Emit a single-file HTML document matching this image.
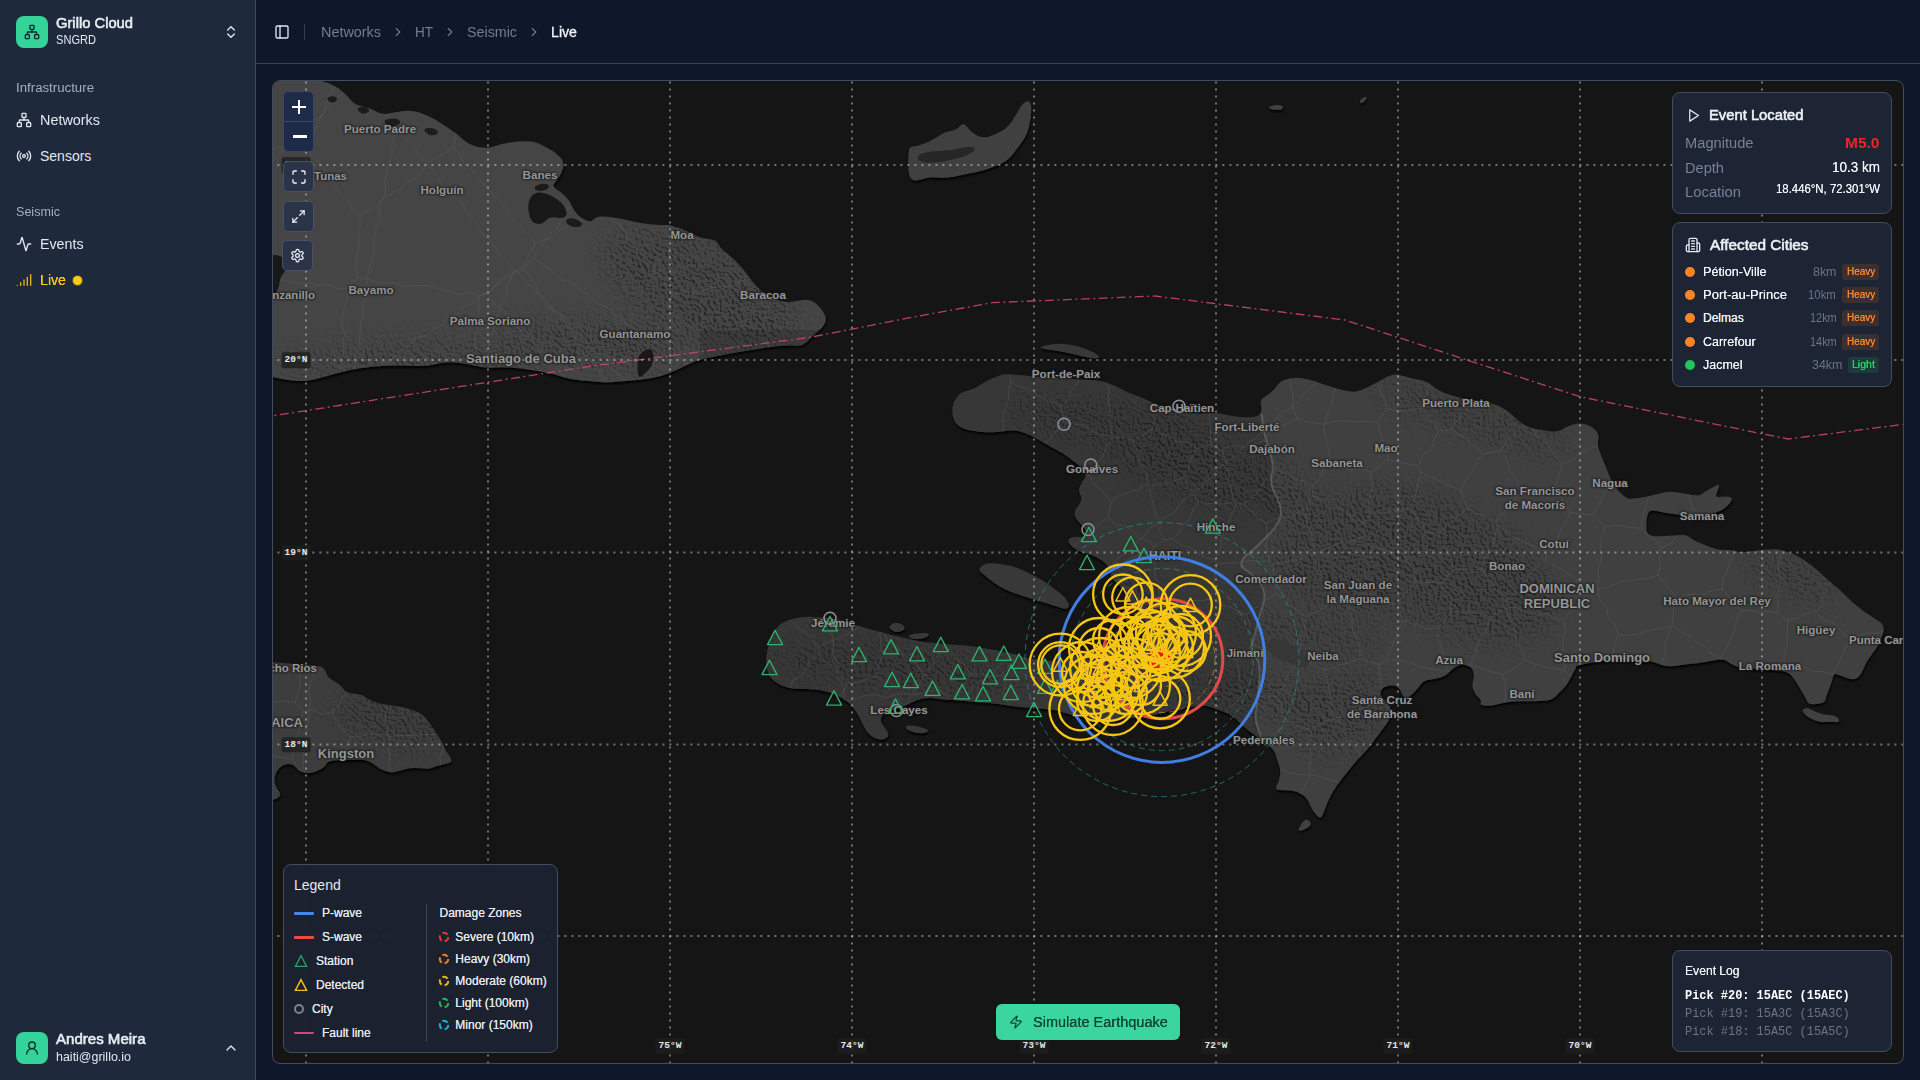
<!DOCTYPE html>
<html><head><meta charset="utf-8"><title>Live</title>
<style>
*{box-sizing:border-box;margin:0;padding:0}
html,body{width:1920px;height:1080px;overflow:hidden;background:#0f172a;font-family:"Liberation Sans",sans-serif;color:#e2e8f0}
#sb{position:absolute;left:0;top:0;width:256px;height:1080px;background:#1e293b;border-right:1px solid #3c495e}
#hd{position:absolute;left:256px;top:0;width:1664px;height:64px;border-bottom:1px solid #36435a;background:#0f172a}
.abs{position:absolute}
.t{position:absolute;white-space:nowrap;line-height:1}
#map{position:absolute;left:272px;top:80px;width:1632px;height:984px;border:1px solid #404c60;border-radius:8px;overflow:hidden;background:#151515}
#ov{position:absolute;left:-273px;top:-81px;width:1920px;height:1080px}
.panel{position:absolute;background:rgba(29,37,53,.985);border:1px solid #414d61;border-radius:8px}
.ctl{position:absolute;background:#2a3347;border:1px solid #465269;border-radius:5px}
.ml{position:absolute;white-space:nowrap;line-height:1;color:#969696;font-size:11.5px;font-weight:700;transform:translate(-50%,-50%);text-shadow:0 0 2px #1c1c1c,0 0 2px #1c1c1c,0 0 3px #1c1c1c}
.gl{position:absolute;white-space:nowrap;line-height:1;font-family:"Liberation Mono",monospace;font-weight:700;font-size:9.5px;color:#e8e8e8;background:rgba(30,30,30,.82);padding:3px 3px 3px 3px;border-radius:2px;transform:translate(-50%,-50%)}
</style></head><body>
<div id="sb">
<div class="abs" style="left:16px;top:16px;width:32px;height:32px;border-radius:8px;background:#34d399"></div>
<svg class="abs" style="left:24px;top:24px" width="16" height="16" viewBox="0 0 24 24" fill="none" stroke="#0f2a2a" stroke-width="2" stroke-linecap="round" stroke-linejoin="round" ><rect x="16" y="16" width="6" height="6" rx="1"/><rect x="2" y="16" width="6" height="6" rx="1"/><rect x="9" y="2" width="6" height="6" rx="1"/><path d="M5 16v-3a1 1 0 0 1 1-1h12a1 1 0 0 1 1 1v3"/><path d="M12 12V8"/></svg>
<div class="t" style="left:56.0px;top:16.0px;font-size:14px;font-weight:400;color:#e8edf4;transform:scaleX(1.0528);transform-origin:0 50%;-webkit-text-stroke:.55px currentColor;">Grillo Cloud</div>
<div class="t" style="left:56.0px;top:34.0px;font-size:12px;font-weight:400;color:#e2e8f0;transform:scaleX(0.9230);transform-origin:0 50%;">SNGRD</div>
<svg class="abs" style="left:223px;top:24px" width="16" height="16" viewBox="0 0 24 24" fill="none" stroke="#e2e8f0" stroke-width="2" stroke-linecap="round" stroke-linejoin="round" ><path d="m7 15 5 5 5-5"/><path d="m7 9 5-5 5 5"/></svg>
<div class="t" style="left:16.0px;top:82.0px;font-size:12px;font-weight:400;color:#a3aebf;transform:scaleX(1.1034);transform-origin:0 50%;">Infrastructure</div>
<svg class="abs" style="left:16px;top:112px" width="16" height="16" viewBox="0 0 24 24" fill="none" stroke="#e2e8f0" stroke-width="2" stroke-linecap="round" stroke-linejoin="round" ><rect x="16" y="16" width="6" height="6" rx="1"/><rect x="2" y="16" width="6" height="6" rx="1"/><rect x="9" y="2" width="6" height="6" rx="1"/><path d="M5 16v-3a1 1 0 0 1 1-1h12a1 1 0 0 1 1 1v3"/><path d="M12 12V8"/></svg>
<div class="t" style="left:40.0px;top:113.0px;font-size:14px;font-weight:400;color:#e2e8f0;transform:scaleX(1.0284);transform-origin:0 50%;">Networks</div>
<svg class="abs" style="left:16px;top:148px" width="16" height="16" viewBox="0 0 24 24" fill="none" stroke="#e2e8f0" stroke-width="2" stroke-linecap="round" stroke-linejoin="round" ><path d="M4.9 19.1C1 15.2 1 8.8 4.9 4.9"/><path d="M7.8 16.2c-2.3-2.3-2.3-6.1 0-8.5"/><circle cx="12" cy="12" r="2"/><path d="M16.2 7.8c2.3 2.3 2.3 6.1 0 8.5"/><path d="M19.1 4.9C23 8.8 23 15.1 19.1 19"/></svg>
<div class="t" style="left:40.0px;top:149.0px;font-size:14px;font-weight:400;color:#e2e8f0;">Sensors</div>
<div class="t" style="left:16.0px;top:206.0px;font-size:12px;font-weight:400;color:#a3aebf;transform:scaleX(1.0475);transform-origin:0 50%;">Seismic</div>
<svg class="abs" style="left:16px;top:236px" width="16" height="16" viewBox="0 0 24 24" fill="none" stroke="#e2e8f0" stroke-width="2" stroke-linecap="round" stroke-linejoin="round" ><path d="M22 12h-2.48a2 2 0 0 0-1.93 1.46l-2.35 8.36a.25.25 0 0 1-.48 0L9.24 2.18a.25.25 0 0 0-.48 0l-2.35 8.36A2 2 0 0 1 4.49 12H2"/></svg>
<div class="t" style="left:40.0px;top:237.0px;font-size:14px;font-weight:400;color:#e2e8f0;transform:scaleX(1.0164);transform-origin:0 50%;">Events</div>
<svg class="abs" style="left:16px;top:272px" width="16" height="16" viewBox="0 0 24 24" fill="none" stroke="#e6b517" stroke-width="2" stroke-linecap="round" stroke-linejoin="round" ><path d="M2 20h.01"/><path d="M7 20v-4"/><path d="M12 20v-8"/><path d="M17 20V8"/><path d="M22 4v16"/></svg>
<div class="t" style="left:40.0px;top:273.0px;font-size:14px;font-weight:400;color:#facc15;transform:scaleX(1.0124);transform-origin:0 50%;text-shadow:0 0 .4px #facc15;">Live</div>
<div class="abs" style="left:73px;top:276px;width:9px;height:9px;border-radius:50%;background:#facc15;box-shadow:0 0 0 1px rgba(250,204,21,.25)"></div>
<div class="abs" style="left:16px;top:1032px;width:32px;height:32px;border-radius:8px;background:#34d399"></div>
<svg class="abs" style="left:24px;top:1040px" width="16" height="16" viewBox="0 0 24 24" fill="none" stroke="#0f2a2a" stroke-width="2" stroke-linecap="round" stroke-linejoin="round" ><circle cx="12" cy="8" r="5"/><path d="M20 21a8 8 0 0 0-16 0"/></svg>
<div class="t" style="left:56.0px;top:1032.0px;font-size:14px;font-weight:400;color:#e8edf4;transform:scaleX(1.0750);transform-origin:0 50%;-webkit-text-stroke:.55px currentColor;">Andres Meira</div>
<div class="t" style="left:56.0px;top:1051.0px;font-size:12px;font-weight:400;color:#e2e8f0;transform:scaleX(1.0386);transform-origin:0 50%;">haiti@grillo.io</div>
<svg class="abs" style="left:223px;top:1040px" width="16" height="16" viewBox="0 0 24 24" fill="none" stroke="#e2e8f0" stroke-width="2" stroke-linecap="round" stroke-linejoin="round" ><path d="m18 15-6-6-6 6"/></svg>
</div>
<div id="hd">
<svg class="abs" style="left:18px;top:24px" width="16" height="16" viewBox="0 0 24 24" fill="none" stroke="#e2e8f0" stroke-width="2" stroke-linecap="round" stroke-linejoin="round" ><rect width="18" height="18" x="3" y="3" rx="2"/><path d="M9 3v18"/></svg>
<div class="abs" style="left:48px;top:24px;width:1px;height:16px;background:#334155"></div>
<div class="t" style="left:65.0px;top:25.0px;font-size:14px;font-weight:400;color:#717d92;transform:scaleX(1.0284);transform-origin:0 50%;">Networks</div>
<svg class="abs" style="left:135px;top:25px" width="14" height="14" viewBox="0 0 24 24" fill="none" stroke="#6f7b90" stroke-width="2" stroke-linecap="round" stroke-linejoin="round" ><path d="m9 18 6-6-6-6"/></svg>
<div class="t" style="left:159.0px;top:25.0px;font-size:14px;font-weight:400;color:#717d92;transform:scaleX(0.9645);transform-origin:0 50%;">HT</div>
<svg class="abs" style="left:187px;top:25px" width="14" height="14" viewBox="0 0 24 24" fill="none" stroke="#6f7b90" stroke-width="2" stroke-linecap="round" stroke-linejoin="round" ><path d="m9 18 6-6-6-6"/></svg>
<div class="t" style="left:211.0px;top:25.0px;font-size:14px;font-weight:400;color:#717d92;transform:scaleX(1.0203);transform-origin:0 50%;">Seismic</div>
<svg class="abs" style="left:271px;top:25px" width="14" height="14" viewBox="0 0 24 24" fill="none" stroke="#6f7b90" stroke-width="2" stroke-linecap="round" stroke-linejoin="round" ><path d="m9 18 6-6-6-6"/></svg>
<div class="t" style="left:295.0px;top:25.0px;font-size:14px;font-weight:400;color:#f1f5f9;transform:scaleX(1.0124);transform-origin:0 50%;-webkit-text-stroke:.3px currentColor;">Live</div>
</div>
<div id="map"><div id="ov">
<svg class="abs" style="left:0;top:0" width="1920" height="1080" viewBox="0 0 1920 1080">
<defs><filter id="ds" x="-5%" y="-5%" width="110%" height="110%"><feDropShadow dx="0.5" dy="2" stdDeviation="1.1" flood-color="#000" flood-opacity=".95"/></filter></defs>
<g filter="url(#ds)" fill="#404040">
<path d="M262.0,70.0 Q262.0,70.0 287.0,74.0 Q312.0,78.0 323.2,81.5 Q334.5,85.0 340.8,90.0 Q347.0,95.0 350.8,100.0 Q354.5,105.0 362.0,106.2 Q369.5,107.5 375.8,111.2 Q382.0,115.0 387.0,113.8 Q392.0,112.5 402.0,111.2 Q412.0,110.0 420.8,113.1 Q429.5,116.2 435.8,120.0 Q442.0,123.8 449.5,128.8 Q457.0,133.8 463.2,139.4 Q469.5,145.0 478.2,146.9 Q487.0,148.8 494.5,146.2 Q502.0,143.8 509.5,142.5 Q517.0,141.2 525.8,141.2 Q534.5,141.2 540.8,144.4 Q547.0,147.5 552.0,150.6 Q557.0,153.8 560.8,158.1 Q564.5,162.5 563.2,167.5 Q562.0,172.5 559.5,176.2 Q557.0,180.0 554.5,183.1 Q552.0,186.2 555.8,188.8 Q559.5,191.2 564.5,195.6 Q569.5,200.0 571.4,205.0 Q573.2,210.0 577.6,214.4 Q582.0,218.8 586.4,220.6 Q590.8,222.5 593.2,219.8 Q595.8,217.0 600.1,216.6 Q604.5,216.2 613.2,217.5 Q622.0,218.8 632.0,221.2 Q642.0,223.8 652.0,224.4 Q662.0,225.0 669.5,225.0 Q677.0,225.0 672.0,225.0 Q667.0,225.0 675.8,226.9 Q684.5,228.8 690.8,233.1 Q697.0,237.5 707.0,238.8 Q717.0,240.0 718.2,243.8 Q719.5,247.5 725.8,252.5 Q732.0,257.5 737.0,262.5 Q742.0,267.5 745.8,272.5 Q749.5,277.5 753.2,282.5 Q757.0,287.5 762.0,291.2 Q767.0,295.0 774.5,298.8 Q782.0,302.5 789.5,301.9 Q797.0,301.2 803.2,300.0 Q809.5,298.8 814.5,302.5 Q819.5,306.2 823.2,311.9 Q827.0,317.5 825.1,322.5 Q823.2,327.5 818.9,330.6 Q814.5,333.8 810.8,338.1 Q807.0,342.5 803.2,344.4 Q799.5,346.2 793.2,345.6 Q787.0,345.0 777.0,346.2 Q767.0,347.5 754.5,349.4 Q742.0,351.2 729.5,353.8 Q717.0,356.2 707.0,358.1 Q697.0,360.0 687.0,365.0 Q677.0,370.0 669.5,373.1 Q662.0,376.2 652.0,378.1 Q642.0,380.0 632.0,380.6 Q622.0,381.2 614.5,381.9 Q607.0,382.5 599.5,381.9 Q592.0,381.2 582.0,380.6 Q572.0,380.0 562.0,376.7 Q552.0,373.3 542.0,371.7 Q532.0,370.0 518.7,368.3 Q505.3,366.7 495.3,367.5 Q485.3,368.3 475.3,365.8 Q465.3,363.3 455.3,362.5 Q445.3,361.7 435.3,364.2 Q425.3,366.7 412.0,365.8 Q398.7,365.0 385.3,365.8 Q372.0,366.7 360.3,368.3 Q348.7,370.0 337.0,373.3 Q325.3,376.7 315.3,379.2 Q305.3,381.7 295.3,380.8 Q285.3,380.0 278.7,378.3 Q272.0,376.7 267.0,376.3 Q262.0,376.0 262.0,223.0 Q262.0,70.0 262.0,70.0 Z" fill="#444444"/>
<path d="M953.2,417.5 Q952.0,412.5 952.6,407.5 Q953.2,402.5 955.8,398.8 Q958.2,395.0 961.4,393.1 Q964.5,391.2 968.2,390.6 Q972.0,390.0 977.0,386.9 Q982.0,383.8 988.2,380.6 Q994.5,377.5 999.5,375.6 Q1004.5,373.8 1010.8,374.4 Q1017.0,375.0 1024.5,375.6 Q1032.0,376.2 1039.5,376.9 Q1047.0,377.5 1054.5,377.5 Q1062.0,377.5 1072.0,378.8 Q1082.0,380.0 1089.5,380.0 Q1097.0,380.0 1104.5,381.9 Q1112.0,383.8 1119.5,388.1 Q1127.0,392.5 1134.5,395.0 Q1142.0,397.5 1149.5,401.2 Q1157.0,405.0 1164.5,407.5 Q1172.0,410.0 1179.5,411.2 Q1187.0,412.5 1194.5,413.1 Q1202.0,413.8 1209.5,413.1 Q1217.0,412.5 1224.5,414.4 Q1232.0,416.2 1239.5,416.9 Q1247.0,417.5 1253.2,416.9 Q1259.5,416.2 1260.8,411.9 Q1262.0,407.5 1260.8,404.4 Q1259.5,401.2 1263.2,398.1 Q1267.0,395.0 1270.8,392.5 Q1274.5,390.0 1277.0,385.6 Q1279.5,381.2 1285.8,379.4 Q1292.0,377.5 1299.5,378.1 Q1307.0,378.8 1314.5,381.2 Q1322.0,383.8 1329.5,386.2 Q1337.0,388.8 1344.5,390.6 Q1352.0,392.5 1357.0,391.2 Q1362.0,390.0 1369.5,386.2 Q1377.0,382.5 1382.0,379.4 Q1387.0,376.2 1392.0,375.0 Q1397.0,373.8 1404.5,376.2 Q1412.0,378.8 1419.5,380.0 Q1427.0,381.2 1432.0,385.6 Q1437.0,390.0 1443.2,392.5 Q1449.5,395.0 1457.0,396.9 Q1464.5,398.8 1472.0,400.0 Q1479.5,401.2 1487.0,402.5 Q1494.5,403.8 1500.8,406.9 Q1507.0,410.0 1510.8,413.8 Q1514.5,417.5 1520.8,422.5 Q1527.0,427.5 1534.5,428.8 Q1542.0,430.0 1549.5,431.2 Q1557.0,432.5 1562.0,429.4 Q1567.0,426.2 1573.2,424.4 Q1579.5,422.5 1585.8,424.4 Q1592.0,426.2 1595.8,430.6 Q1599.5,435.0 1598.2,440.0 Q1597.0,445.0 1599.5,451.2 Q1602.0,457.5 1604.5,463.8 Q1607.0,470.0 1609.5,476.2 Q1612.0,482.5 1615.8,487.5 Q1619.5,492.5 1623.2,495.6 Q1627.0,498.8 1629.8,498.8 Q1632.5,498.8 1638.8,498.1 Q1645.0,497.5 1651.2,495.6 Q1657.5,493.8 1663.8,492.5 Q1670.0,491.2 1677.5,492.5 Q1685.0,493.8 1692.5,495.0 Q1700.0,496.2 1702.5,493.8 Q1705.0,491.2 1708.8,489.4 Q1712.5,487.5 1716.2,485.6 Q1720.0,483.8 1718.8,487.5 Q1717.5,491.2 1716.2,494.4 Q1715.0,497.5 1720.0,496.9 Q1725.0,496.2 1729.4,496.9 Q1733.8,497.5 1730.6,501.9 Q1727.5,506.2 1723.8,508.8 Q1720.0,511.2 1715.0,513.1 Q1710.0,515.0 1703.8,515.6 Q1697.5,516.2 1691.2,515.6 Q1685.0,515.0 1677.5,514.4 Q1670.0,513.8 1663.8,512.5 Q1657.5,511.2 1653.1,510.6 Q1648.8,510.0 1647.5,515.0 Q1646.2,520.0 1646.2,525.0 Q1646.2,530.0 1647.5,533.1 Q1648.8,536.2 1656.9,536.2 Q1665.0,536.2 1672.5,535.6 Q1680.0,535.0 1683.8,535.0 Q1687.5,535.0 1690.0,537.5 Q1692.5,540.0 1698.8,542.5 Q1705.0,545.0 1711.2,547.5 Q1717.5,550.0 1725.0,550.0 Q1732.5,550.0 1736.2,551.2 Q1740.0,552.5 1746.2,551.9 Q1752.5,551.2 1757.5,550.6 Q1762.5,550.0 1768.8,549.4 Q1775.0,548.8 1782.5,550.6 Q1790.0,552.5 1796.2,555.6 Q1802.5,558.8 1807.5,562.5 Q1812.5,566.2 1817.5,570.6 Q1822.5,575.0 1827.5,579.4 Q1832.5,583.8 1837.5,588.1 Q1842.5,592.5 1847.5,597.5 Q1852.5,602.5 1858.8,607.5 Q1865.0,612.5 1871.2,616.2 Q1877.5,620.0 1881.2,623.1 Q1885.0,626.2 1883.3,632.3 Q1881.7,638.3 1879.2,643.3 Q1876.7,648.3 1873.3,652.5 Q1870.0,656.7 1867.5,660.8 Q1865.0,665.0 1863.3,669.2 Q1861.7,673.3 1859.2,676.2 Q1856.7,679.2 1852.5,679.2 Q1848.3,679.2 1844.2,677.1 Q1840.0,675.0 1836.7,674.2 Q1833.3,673.3 1832.9,676.7 Q1832.5,680.0 1831.2,683.3 Q1830.0,686.7 1828.3,690.8 Q1826.7,695.0 1825.8,698.8 Q1825.0,702.5 1820.8,703.3 Q1816.7,704.2 1812.5,704.2 Q1808.3,704.2 1806.7,700.4 Q1805.0,696.7 1802.5,692.5 Q1800.0,688.3 1797.5,684.2 Q1795.0,680.0 1792.5,676.7 Q1790.0,673.3 1785.8,672.1 Q1781.7,670.8 1776.7,670.4 Q1771.7,670.0 1765.8,669.6 Q1760.0,669.2 1755.0,668.8 Q1750.0,668.3 1745.0,667.9 Q1740.0,667.5 1735.8,666.2 Q1731.7,665.0 1728.3,662.1 Q1725.0,659.2 1720.8,659.6 Q1716.7,660.0 1711.7,660.8 Q1706.7,661.7 1701.7,662.5 Q1696.7,663.3 1691.7,663.8 Q1686.7,664.2 1681.7,665.0 Q1676.7,665.8 1671.7,666.2 Q1666.7,666.7 1661.7,665.0 Q1656.7,663.3 1653.3,662.1 Q1650.0,660.8 1645.0,661.7 Q1640.0,662.5 1635.0,661.2 Q1630.0,660.0 1622.5,660.0 Q1615.0,660.0 1607.5,660.6 Q1600.0,661.2 1592.5,662.5 Q1585.0,663.8 1580.0,665.0 Q1575.0,666.2 1576.0,666.2 Q1577.0,666.2 1574.5,670.6 Q1572.0,675.0 1569.5,680.0 Q1567.0,685.0 1563.2,688.8 Q1559.5,692.5 1555.8,696.2 Q1552.0,700.0 1545.8,700.6 Q1539.5,701.2 1533.2,701.2 Q1527.0,701.2 1519.5,701.2 Q1512.0,701.2 1505.8,702.5 Q1499.5,703.8 1494.5,705.0 Q1489.5,706.2 1484.5,705.6 Q1479.5,705.0 1480.8,702.5 Q1482.0,700.0 1478.2,696.9 Q1474.5,693.8 1473.2,689.4 Q1472.0,685.0 1473.2,680.0 Q1474.5,675.0 1473.2,671.2 Q1472.0,667.5 1467.0,665.6 Q1462.0,663.8 1457.0,666.2 Q1452.0,668.8 1449.5,671.9 Q1447.0,675.0 1442.0,676.9 Q1437.0,678.8 1430.8,679.4 Q1424.5,680.0 1422.0,683.1 Q1419.5,686.2 1415.8,690.6 Q1412.0,695.0 1408.2,697.5 Q1404.5,700.0 1402.0,693.8 Q1399.5,687.5 1395.8,686.2 Q1392.0,685.0 1387.0,686.2 Q1382.0,687.5 1380.8,691.2 Q1379.5,695.0 1383.2,698.8 Q1387.0,702.5 1389.5,706.2 Q1392.0,710.0 1390.8,715.0 Q1389.5,720.0 1385.8,725.0 Q1382.0,730.0 1378.2,735.0 Q1374.5,740.0 1370.8,745.0 Q1367.0,750.0 1362.0,755.0 Q1357.0,760.0 1352.0,766.2 Q1347.0,772.5 1342.0,778.8 Q1337.0,785.0 1333.2,791.2 Q1329.5,797.5 1327.0,803.8 Q1324.5,810.0 1322.6,815.0 Q1320.8,820.0 1316.4,815.0 Q1312.0,810.0 1309.5,803.8 Q1307.0,797.5 1302.0,794.4 Q1297.0,791.2 1290.8,790.6 Q1284.5,790.0 1279.5,790.0 Q1274.5,790.0 1277.0,785.0 Q1279.5,780.0 1280.1,775.0 Q1280.8,770.0 1278.9,765.0 Q1277.0,760.0 1275.8,755.0 Q1274.5,750.0 1269.5,746.2 Q1264.5,742.5 1259.5,738.8 Q1254.5,735.0 1249.5,731.2 Q1244.5,727.5 1238.2,721.2 Q1232.0,715.0 1225.3,712.5 Q1218.7,710.0 1212.0,707.5 Q1205.3,705.0 1198.7,705.8 Q1192.0,706.7 1185.3,707.5 Q1178.7,708.3 1170.3,710.8 Q1162.0,713.3 1153.7,715.0 Q1145.3,716.7 1137.0,717.5 Q1128.7,718.3 1120.3,719.2 Q1112.0,720.0 1103.7,719.2 Q1095.3,718.3 1087.0,717.5 Q1078.7,716.7 1072.0,715.0 Q1065.3,713.3 1061.2,711.7 Q1057.0,710.0 1049.5,709.4 Q1042.0,708.8 1034.5,708.1 Q1027.0,707.5 1019.5,706.9 Q1012.0,706.2 1004.5,705.0 Q997.0,703.8 989.5,703.1 Q982.0,702.5 974.5,701.9 Q967.0,701.2 959.5,700.6 Q952.0,700.0 944.5,699.4 Q937.0,698.8 932.0,698.1 Q927.0,697.5 922.0,698.8 Q917.0,700.0 912.0,702.5 Q907.0,705.0 900.8,707.5 Q894.5,710.0 889.5,711.2 Q884.5,712.5 882.0,716.2 Q879.5,720.0 882.0,723.8 Q884.5,727.5 887.0,731.2 Q889.5,735.0 887.0,737.5 Q884.5,740.0 879.5,739.4 Q874.5,738.8 870.8,735.6 Q867.0,732.5 864.5,727.5 Q862.0,722.5 859.5,717.5 Q857.0,712.5 853.2,707.5 Q849.5,702.5 843.2,698.8 Q837.0,695.0 829.5,692.5 Q822.0,690.0 814.5,689.4 Q807.0,688.8 799.5,688.8 Q792.0,688.8 785.8,686.9 Q779.5,685.0 774.5,681.2 Q769.5,677.5 767.6,671.2 Q765.8,665.0 766.4,657.5 Q767.0,650.0 769.5,642.5 Q772.0,635.0 775.8,629.4 Q779.5,623.8 785.8,621.2 Q792.0,618.8 799.5,617.5 Q807.0,616.2 814.5,616.9 Q822.0,617.5 829.5,618.1 Q837.0,618.8 844.5,621.2 Q852.0,623.8 859.5,626.2 Q867.0,628.8 874.5,630.6 Q882.0,632.5 889.5,634.4 Q897.0,636.2 904.5,638.1 Q912.0,640.0 919.5,641.2 Q927.0,642.5 934.5,643.1 Q942.0,643.8 949.5,644.4 Q957.0,645.0 964.5,645.6 Q972.0,646.2 979.5,647.5 Q987.0,648.8 994.5,650.0 Q1002.0,651.2 1009.5,653.1 Q1017.0,655.0 1023.2,656.9 Q1029.5,658.8 1035.8,659.4 Q1042.0,660.0 1050.0,661.0 Q1058.0,662.0 1069.0,658.5 Q1080.0,655.0 1090.5,651.5 Q1101.0,648.0 1113.0,646.5 Q1125.0,645.0 1135.0,644.0 Q1145.0,643.0 1150.0,641.5 Q1155.0,640.0 1152.5,634.0 Q1150.0,628.0 1145.0,621.5 Q1140.0,615.0 1134.0,607.5 Q1128.0,600.0 1124.0,592.5 Q1120.0,585.0 1116.0,582.5 Q1112.0,580.0 1110.8,573.8 Q1109.5,567.5 1105.8,563.8 Q1102.0,560.0 1097.0,557.5 Q1092.0,555.0 1087.0,553.8 Q1082.0,552.5 1077.0,550.0 Q1072.0,547.5 1069.5,543.8 Q1067.0,540.0 1070.8,538.1 Q1074.5,536.2 1079.5,536.9 Q1084.5,537.5 1085.8,535.0 Q1087.0,532.5 1084.5,528.8 Q1082.0,525.0 1078.2,521.2 Q1074.5,517.5 1074.5,513.8 Q1074.5,510.0 1077.0,507.5 Q1079.5,505.0 1080.8,501.2 Q1082.0,497.5 1080.1,493.8 Q1078.2,490.0 1080.1,486.2 Q1082.0,482.5 1084.5,478.8 Q1087.0,475.0 1084.5,471.2 Q1082.0,467.5 1077.0,463.8 Q1072.0,460.0 1067.0,456.2 Q1062.0,452.5 1055.8,449.4 Q1049.5,446.2 1043.2,442.5 Q1037.0,438.8 1030.8,435.6 Q1024.5,432.5 1019.5,431.2 Q1014.5,430.0 1009.5,430.6 Q1004.5,431.2 997.0,431.9 Q989.5,432.5 982.0,431.9 Q974.5,431.2 968.2,430.0 Q962.0,428.8 958.2,425.6 Q954.5,422.5 953.2,417.5 Z" fill="#414141"/>
<path d="M262.0,730.0 Q262.0,660.0 266.1,660.8 Q270.1,661.7 282.2,663.1 Q294.2,664.4 307.2,664.9 Q320.1,665.4 322.9,667.7 Q325.7,670.0 326.6,673.7 Q327.6,677.4 334.0,681.1 Q340.5,684.8 343.3,689.0 Q346.1,693.1 353.5,693.6 Q360.9,694.1 366.4,697.8 Q372.0,701.5 377.6,702.9 Q383.1,704.3 390.5,705.2 Q397.9,706.1 403.5,707.5 Q409.0,708.9 414.6,710.7 Q420.1,712.6 423.9,716.3 Q427.6,720.0 431.3,725.6 Q435.0,731.1 438.7,736.7 Q442.4,742.2 444.2,746.9 Q446.1,751.5 449.8,756.6 Q453.5,761.7 448.9,763.1 Q444.2,764.4 439.6,765.4 Q435.0,766.3 432.2,767.7 Q429.4,769.1 424.8,768.6 Q420.1,768.1 414.6,768.1 Q409.0,768.1 404.4,769.5 Q399.8,770.9 395.1,771.9 Q390.5,772.8 385.0,770.9 Q379.4,769.1 375.7,765.8 Q372.0,762.6 368.3,761.2 Q364.6,759.8 357.2,759.8 Q349.8,759.8 338.7,760.3 Q327.6,760.7 326.6,763.5 Q325.7,766.3 322.0,768.6 Q318.3,770.9 313.7,772.3 Q309.0,773.7 304.4,772.8 Q299.8,771.9 296.1,767.7 Q292.4,763.5 287.7,764.0 Q283.1,764.4 279.4,768.1 Q275.7,771.9 274.8,776.5 Q273.9,781.1 275.7,785.7 Q277.6,790.4 279.4,792.2 Q281.3,794.1 279.4,796.4 Q277.6,798.7 273.9,799.6 Q270.1,800.6 266.1,800.3 Q262.0,800.0 262.0,730.0 Z" fill="#3c3c3c"/>
<path d="M262.0,797.5 Q262.0,793.3 263.7,794.2 Q265.3,795.0 265.3,797.5 Q265.3,800.0 263.7,800.8 Q262.0,801.7 262.0,797.5 Z" fill="#3c3c3c"/>
<path d="M908.5,169.0 Q908.0,160.0 908.5,154.0 Q909.0,148.0 910.5,147.3 Q912.0,146.7 917.0,145.8 Q922.0,145.0 928.7,141.7 Q935.3,138.3 940.3,135.0 Q945.3,131.7 951.2,130.8 Q957.0,130.0 960.3,125.8 Q963.7,121.7 967.0,126.7 Q970.3,131.7 976.2,135.0 Q982.0,138.3 988.7,136.7 Q995.3,135.0 1002.0,130.8 Q1008.7,126.7 1012.8,120.0 Q1017.0,113.3 1020.3,107.5 Q1023.7,101.7 1027.5,101.2 Q1031.3,100.7 1031.3,108.7 Q1031.3,116.7 1029.2,125.8 Q1027.0,135.0 1022.8,140.8 Q1018.7,146.7 1013.7,153.3 Q1008.7,160.0 1002.0,163.3 Q995.3,166.7 987.0,169.2 Q978.7,171.7 970.3,173.3 Q962.0,175.0 953.7,176.7 Q945.3,178.3 937.0,177.5 Q928.7,176.7 922.0,179.2 Q915.3,181.7 912.2,179.8 Q909.0,178.0 908.5,169.0 Z" fill="#404040"/>
<path d="M1040.8,348.1 Q1039.5,347.5 1045.8,345.6 Q1052.0,343.8 1059.5,343.8 Q1067.0,343.8 1074.5,345.6 Q1082.0,347.5 1088.2,350.0 Q1094.5,352.5 1097.6,355.0 Q1100.8,357.5 1097.6,358.1 Q1094.5,358.8 1088.2,357.5 Q1082.0,356.2 1074.5,354.4 Q1067.0,352.5 1059.5,351.2 Q1052.0,350.0 1047.0,349.4 Q1042.0,348.8 1040.8,348.1 Z" fill="#383838"/>
<path d="M979.5,569.9 Q979.0,568.0 981.5,566.2 Q984.0,564.5 987.2,563.6 Q990.4,562.8 996.8,563.4 Q1003.3,564.0 1011.1,566.0 Q1018.9,568.0 1026.7,571.9 Q1034.4,575.7 1040.9,579.6 Q1047.4,583.5 1052.6,587.4 Q1057.8,591.3 1062.3,595.1 Q1066.8,599.0 1068.3,602.8 Q1069.8,606.5 1067.7,608.0 Q1065.5,609.6 1060.3,607.8 Q1055.2,606.0 1048.7,604.0 Q1042.2,602.0 1035.7,600.0 Q1029.2,598.0 1022.8,596.0 Q1016.3,594.0 1009.8,591.4 Q1003.3,588.7 998.1,585.5 Q993.0,582.2 989.1,579.0 Q985.2,575.7 982.6,573.8 Q980.0,571.8 979.5,569.9 Z" fill="#383838"/>
<path d="M890.1,628.8 Q888.2,626.2 891.4,624.4 Q894.5,622.5 898.2,623.1 Q902.0,623.8 903.9,626.2 Q905.8,628.8 902.6,630.6 Q899.5,632.5 895.8,631.9 Q892.0,631.2 890.1,628.8 Z" fill="#383838"/>
<path d="M909.5,637.2 Q907.0,635.0 914.5,633.8 Q922.0,632.5 926.4,633.1 Q930.8,633.8 927.6,636.2 Q924.5,638.8 918.2,639.1 Q912.0,639.5 909.5,637.2 Z" fill="#383838"/>
<path d="M905.8,728.1 Q904.5,726.2 908.2,725.6 Q912.0,725.0 917.0,726.2 Q922.0,727.5 925.8,728.8 Q929.5,730.0 927.0,731.9 Q924.5,733.8 919.5,733.1 Q914.5,732.5 910.8,731.2 Q907.0,730.0 905.8,728.1 Z" fill="#383838"/>
<path d="M1298.9,830.6 Q1298.2,830.0 1300.1,826.2 Q1302.0,822.5 1304.5,820.6 Q1307.0,818.8 1309.5,821.2 Q1312.0,823.8 1309.5,826.2 Q1307.0,828.8 1303.2,830.0 Q1299.5,831.2 1298.9,830.6 Z" fill="#404040"/>
<path d="M1803.3,712.5 Q1801.7,710.0 1804.2,708.8 Q1806.7,707.5 1810.8,709.6 Q1815.0,711.7 1819.2,713.3 Q1823.3,715.0 1828.3,715.0 Q1833.3,715.0 1836.2,716.7 Q1839.2,718.3 1839.2,720.4 Q1839.2,722.5 1834.6,722.1 Q1830.0,721.7 1825.0,722.1 Q1820.0,722.5 1815.8,720.8 Q1811.7,719.2 1808.3,717.1 Q1805.0,715.0 1803.3,712.5 Z" fill="#404040"/>
<path d="M1269.5,108.3 Q1267.0,106.7 1274.5,105.3 Q1282.0,104.0 1282.8,107.0 Q1283.7,110.0 1277.8,110.0 Q1272.0,110.0 1269.5,108.3 Z" fill="#404040"/>
<path d="M1360.3,102.5 Q1358.7,100.0 1363.7,97.5 Q1368.7,95.0 1365.3,100.0 Q1362.0,105.0 1360.3,102.5 Z" fill="#404040"/>
</g>
<clipPath id="lc"><path d="M262.0,70.0 Q262.0,70.0 287.0,74.0 Q312.0,78.0 323.2,81.5 Q334.5,85.0 340.8,90.0 Q347.0,95.0 350.8,100.0 Q354.5,105.0 362.0,106.2 Q369.5,107.5 375.8,111.2 Q382.0,115.0 387.0,113.8 Q392.0,112.5 402.0,111.2 Q412.0,110.0 420.8,113.1 Q429.5,116.2 435.8,120.0 Q442.0,123.8 449.5,128.8 Q457.0,133.8 463.2,139.4 Q469.5,145.0 478.2,146.9 Q487.0,148.8 494.5,146.2 Q502.0,143.8 509.5,142.5 Q517.0,141.2 525.8,141.2 Q534.5,141.2 540.8,144.4 Q547.0,147.5 552.0,150.6 Q557.0,153.8 560.8,158.1 Q564.5,162.5 563.2,167.5 Q562.0,172.5 559.5,176.2 Q557.0,180.0 554.5,183.1 Q552.0,186.2 555.8,188.8 Q559.5,191.2 564.5,195.6 Q569.5,200.0 571.4,205.0 Q573.2,210.0 577.6,214.4 Q582.0,218.8 586.4,220.6 Q590.8,222.5 593.2,219.8 Q595.8,217.0 600.1,216.6 Q604.5,216.2 613.2,217.5 Q622.0,218.8 632.0,221.2 Q642.0,223.8 652.0,224.4 Q662.0,225.0 669.5,225.0 Q677.0,225.0 672.0,225.0 Q667.0,225.0 675.8,226.9 Q684.5,228.8 690.8,233.1 Q697.0,237.5 707.0,238.8 Q717.0,240.0 718.2,243.8 Q719.5,247.5 725.8,252.5 Q732.0,257.5 737.0,262.5 Q742.0,267.5 745.8,272.5 Q749.5,277.5 753.2,282.5 Q757.0,287.5 762.0,291.2 Q767.0,295.0 774.5,298.8 Q782.0,302.5 789.5,301.9 Q797.0,301.2 803.2,300.0 Q809.5,298.8 814.5,302.5 Q819.5,306.2 823.2,311.9 Q827.0,317.5 825.1,322.5 Q823.2,327.5 818.9,330.6 Q814.5,333.8 810.8,338.1 Q807.0,342.5 803.2,344.4 Q799.5,346.2 793.2,345.6 Q787.0,345.0 777.0,346.2 Q767.0,347.5 754.5,349.4 Q742.0,351.2 729.5,353.8 Q717.0,356.2 707.0,358.1 Q697.0,360.0 687.0,365.0 Q677.0,370.0 669.5,373.1 Q662.0,376.2 652.0,378.1 Q642.0,380.0 632.0,380.6 Q622.0,381.2 614.5,381.9 Q607.0,382.5 599.5,381.9 Q592.0,381.2 582.0,380.6 Q572.0,380.0 562.0,376.7 Q552.0,373.3 542.0,371.7 Q532.0,370.0 518.7,368.3 Q505.3,366.7 495.3,367.5 Q485.3,368.3 475.3,365.8 Q465.3,363.3 455.3,362.5 Q445.3,361.7 435.3,364.2 Q425.3,366.7 412.0,365.8 Q398.7,365.0 385.3,365.8 Q372.0,366.7 360.3,368.3 Q348.7,370.0 337.0,373.3 Q325.3,376.7 315.3,379.2 Q305.3,381.7 295.3,380.8 Q285.3,380.0 278.7,378.3 Q272.0,376.7 267.0,376.3 Q262.0,376.0 262.0,223.0 Q262.0,70.0 262.0,70.0 Z"/><path d="M953.2,417.5 Q952.0,412.5 952.6,407.5 Q953.2,402.5 955.8,398.8 Q958.2,395.0 961.4,393.1 Q964.5,391.2 968.2,390.6 Q972.0,390.0 977.0,386.9 Q982.0,383.8 988.2,380.6 Q994.5,377.5 999.5,375.6 Q1004.5,373.8 1010.8,374.4 Q1017.0,375.0 1024.5,375.6 Q1032.0,376.2 1039.5,376.9 Q1047.0,377.5 1054.5,377.5 Q1062.0,377.5 1072.0,378.8 Q1082.0,380.0 1089.5,380.0 Q1097.0,380.0 1104.5,381.9 Q1112.0,383.8 1119.5,388.1 Q1127.0,392.5 1134.5,395.0 Q1142.0,397.5 1149.5,401.2 Q1157.0,405.0 1164.5,407.5 Q1172.0,410.0 1179.5,411.2 Q1187.0,412.5 1194.5,413.1 Q1202.0,413.8 1209.5,413.1 Q1217.0,412.5 1224.5,414.4 Q1232.0,416.2 1239.5,416.9 Q1247.0,417.5 1253.2,416.9 Q1259.5,416.2 1260.8,411.9 Q1262.0,407.5 1260.8,404.4 Q1259.5,401.2 1263.2,398.1 Q1267.0,395.0 1270.8,392.5 Q1274.5,390.0 1277.0,385.6 Q1279.5,381.2 1285.8,379.4 Q1292.0,377.5 1299.5,378.1 Q1307.0,378.8 1314.5,381.2 Q1322.0,383.8 1329.5,386.2 Q1337.0,388.8 1344.5,390.6 Q1352.0,392.5 1357.0,391.2 Q1362.0,390.0 1369.5,386.2 Q1377.0,382.5 1382.0,379.4 Q1387.0,376.2 1392.0,375.0 Q1397.0,373.8 1404.5,376.2 Q1412.0,378.8 1419.5,380.0 Q1427.0,381.2 1432.0,385.6 Q1437.0,390.0 1443.2,392.5 Q1449.5,395.0 1457.0,396.9 Q1464.5,398.8 1472.0,400.0 Q1479.5,401.2 1487.0,402.5 Q1494.5,403.8 1500.8,406.9 Q1507.0,410.0 1510.8,413.8 Q1514.5,417.5 1520.8,422.5 Q1527.0,427.5 1534.5,428.8 Q1542.0,430.0 1549.5,431.2 Q1557.0,432.5 1562.0,429.4 Q1567.0,426.2 1573.2,424.4 Q1579.5,422.5 1585.8,424.4 Q1592.0,426.2 1595.8,430.6 Q1599.5,435.0 1598.2,440.0 Q1597.0,445.0 1599.5,451.2 Q1602.0,457.5 1604.5,463.8 Q1607.0,470.0 1609.5,476.2 Q1612.0,482.5 1615.8,487.5 Q1619.5,492.5 1623.2,495.6 Q1627.0,498.8 1629.8,498.8 Q1632.5,498.8 1638.8,498.1 Q1645.0,497.5 1651.2,495.6 Q1657.5,493.8 1663.8,492.5 Q1670.0,491.2 1677.5,492.5 Q1685.0,493.8 1692.5,495.0 Q1700.0,496.2 1702.5,493.8 Q1705.0,491.2 1708.8,489.4 Q1712.5,487.5 1716.2,485.6 Q1720.0,483.8 1718.8,487.5 Q1717.5,491.2 1716.2,494.4 Q1715.0,497.5 1720.0,496.9 Q1725.0,496.2 1729.4,496.9 Q1733.8,497.5 1730.6,501.9 Q1727.5,506.2 1723.8,508.8 Q1720.0,511.2 1715.0,513.1 Q1710.0,515.0 1703.8,515.6 Q1697.5,516.2 1691.2,515.6 Q1685.0,515.0 1677.5,514.4 Q1670.0,513.8 1663.8,512.5 Q1657.5,511.2 1653.1,510.6 Q1648.8,510.0 1647.5,515.0 Q1646.2,520.0 1646.2,525.0 Q1646.2,530.0 1647.5,533.1 Q1648.8,536.2 1656.9,536.2 Q1665.0,536.2 1672.5,535.6 Q1680.0,535.0 1683.8,535.0 Q1687.5,535.0 1690.0,537.5 Q1692.5,540.0 1698.8,542.5 Q1705.0,545.0 1711.2,547.5 Q1717.5,550.0 1725.0,550.0 Q1732.5,550.0 1736.2,551.2 Q1740.0,552.5 1746.2,551.9 Q1752.5,551.2 1757.5,550.6 Q1762.5,550.0 1768.8,549.4 Q1775.0,548.8 1782.5,550.6 Q1790.0,552.5 1796.2,555.6 Q1802.5,558.8 1807.5,562.5 Q1812.5,566.2 1817.5,570.6 Q1822.5,575.0 1827.5,579.4 Q1832.5,583.8 1837.5,588.1 Q1842.5,592.5 1847.5,597.5 Q1852.5,602.5 1858.8,607.5 Q1865.0,612.5 1871.2,616.2 Q1877.5,620.0 1881.2,623.1 Q1885.0,626.2 1883.3,632.3 Q1881.7,638.3 1879.2,643.3 Q1876.7,648.3 1873.3,652.5 Q1870.0,656.7 1867.5,660.8 Q1865.0,665.0 1863.3,669.2 Q1861.7,673.3 1859.2,676.2 Q1856.7,679.2 1852.5,679.2 Q1848.3,679.2 1844.2,677.1 Q1840.0,675.0 1836.7,674.2 Q1833.3,673.3 1832.9,676.7 Q1832.5,680.0 1831.2,683.3 Q1830.0,686.7 1828.3,690.8 Q1826.7,695.0 1825.8,698.8 Q1825.0,702.5 1820.8,703.3 Q1816.7,704.2 1812.5,704.2 Q1808.3,704.2 1806.7,700.4 Q1805.0,696.7 1802.5,692.5 Q1800.0,688.3 1797.5,684.2 Q1795.0,680.0 1792.5,676.7 Q1790.0,673.3 1785.8,672.1 Q1781.7,670.8 1776.7,670.4 Q1771.7,670.0 1765.8,669.6 Q1760.0,669.2 1755.0,668.8 Q1750.0,668.3 1745.0,667.9 Q1740.0,667.5 1735.8,666.2 Q1731.7,665.0 1728.3,662.1 Q1725.0,659.2 1720.8,659.6 Q1716.7,660.0 1711.7,660.8 Q1706.7,661.7 1701.7,662.5 Q1696.7,663.3 1691.7,663.8 Q1686.7,664.2 1681.7,665.0 Q1676.7,665.8 1671.7,666.2 Q1666.7,666.7 1661.7,665.0 Q1656.7,663.3 1653.3,662.1 Q1650.0,660.8 1645.0,661.7 Q1640.0,662.5 1635.0,661.2 Q1630.0,660.0 1622.5,660.0 Q1615.0,660.0 1607.5,660.6 Q1600.0,661.2 1592.5,662.5 Q1585.0,663.8 1580.0,665.0 Q1575.0,666.2 1576.0,666.2 Q1577.0,666.2 1574.5,670.6 Q1572.0,675.0 1569.5,680.0 Q1567.0,685.0 1563.2,688.8 Q1559.5,692.5 1555.8,696.2 Q1552.0,700.0 1545.8,700.6 Q1539.5,701.2 1533.2,701.2 Q1527.0,701.2 1519.5,701.2 Q1512.0,701.2 1505.8,702.5 Q1499.5,703.8 1494.5,705.0 Q1489.5,706.2 1484.5,705.6 Q1479.5,705.0 1480.8,702.5 Q1482.0,700.0 1478.2,696.9 Q1474.5,693.8 1473.2,689.4 Q1472.0,685.0 1473.2,680.0 Q1474.5,675.0 1473.2,671.2 Q1472.0,667.5 1467.0,665.6 Q1462.0,663.8 1457.0,666.2 Q1452.0,668.8 1449.5,671.9 Q1447.0,675.0 1442.0,676.9 Q1437.0,678.8 1430.8,679.4 Q1424.5,680.0 1422.0,683.1 Q1419.5,686.2 1415.8,690.6 Q1412.0,695.0 1408.2,697.5 Q1404.5,700.0 1402.0,693.8 Q1399.5,687.5 1395.8,686.2 Q1392.0,685.0 1387.0,686.2 Q1382.0,687.5 1380.8,691.2 Q1379.5,695.0 1383.2,698.8 Q1387.0,702.5 1389.5,706.2 Q1392.0,710.0 1390.8,715.0 Q1389.5,720.0 1385.8,725.0 Q1382.0,730.0 1378.2,735.0 Q1374.5,740.0 1370.8,745.0 Q1367.0,750.0 1362.0,755.0 Q1357.0,760.0 1352.0,766.2 Q1347.0,772.5 1342.0,778.8 Q1337.0,785.0 1333.2,791.2 Q1329.5,797.5 1327.0,803.8 Q1324.5,810.0 1322.6,815.0 Q1320.8,820.0 1316.4,815.0 Q1312.0,810.0 1309.5,803.8 Q1307.0,797.5 1302.0,794.4 Q1297.0,791.2 1290.8,790.6 Q1284.5,790.0 1279.5,790.0 Q1274.5,790.0 1277.0,785.0 Q1279.5,780.0 1280.1,775.0 Q1280.8,770.0 1278.9,765.0 Q1277.0,760.0 1275.8,755.0 Q1274.5,750.0 1269.5,746.2 Q1264.5,742.5 1259.5,738.8 Q1254.5,735.0 1249.5,731.2 Q1244.5,727.5 1238.2,721.2 Q1232.0,715.0 1225.3,712.5 Q1218.7,710.0 1212.0,707.5 Q1205.3,705.0 1198.7,705.8 Q1192.0,706.7 1185.3,707.5 Q1178.7,708.3 1170.3,710.8 Q1162.0,713.3 1153.7,715.0 Q1145.3,716.7 1137.0,717.5 Q1128.7,718.3 1120.3,719.2 Q1112.0,720.0 1103.7,719.2 Q1095.3,718.3 1087.0,717.5 Q1078.7,716.7 1072.0,715.0 Q1065.3,713.3 1061.2,711.7 Q1057.0,710.0 1049.5,709.4 Q1042.0,708.8 1034.5,708.1 Q1027.0,707.5 1019.5,706.9 Q1012.0,706.2 1004.5,705.0 Q997.0,703.8 989.5,703.1 Q982.0,702.5 974.5,701.9 Q967.0,701.2 959.5,700.6 Q952.0,700.0 944.5,699.4 Q937.0,698.8 932.0,698.1 Q927.0,697.5 922.0,698.8 Q917.0,700.0 912.0,702.5 Q907.0,705.0 900.8,707.5 Q894.5,710.0 889.5,711.2 Q884.5,712.5 882.0,716.2 Q879.5,720.0 882.0,723.8 Q884.5,727.5 887.0,731.2 Q889.5,735.0 887.0,737.5 Q884.5,740.0 879.5,739.4 Q874.5,738.8 870.8,735.6 Q867.0,732.5 864.5,727.5 Q862.0,722.5 859.5,717.5 Q857.0,712.5 853.2,707.5 Q849.5,702.5 843.2,698.8 Q837.0,695.0 829.5,692.5 Q822.0,690.0 814.5,689.4 Q807.0,688.8 799.5,688.8 Q792.0,688.8 785.8,686.9 Q779.5,685.0 774.5,681.2 Q769.5,677.5 767.6,671.2 Q765.8,665.0 766.4,657.5 Q767.0,650.0 769.5,642.5 Q772.0,635.0 775.8,629.4 Q779.5,623.8 785.8,621.2 Q792.0,618.8 799.5,617.5 Q807.0,616.2 814.5,616.9 Q822.0,617.5 829.5,618.1 Q837.0,618.8 844.5,621.2 Q852.0,623.8 859.5,626.2 Q867.0,628.8 874.5,630.6 Q882.0,632.5 889.5,634.4 Q897.0,636.2 904.5,638.1 Q912.0,640.0 919.5,641.2 Q927.0,642.5 934.5,643.1 Q942.0,643.8 949.5,644.4 Q957.0,645.0 964.5,645.6 Q972.0,646.2 979.5,647.5 Q987.0,648.8 994.5,650.0 Q1002.0,651.2 1009.5,653.1 Q1017.0,655.0 1023.2,656.9 Q1029.5,658.8 1035.8,659.4 Q1042.0,660.0 1050.0,661.0 Q1058.0,662.0 1069.0,658.5 Q1080.0,655.0 1090.5,651.5 Q1101.0,648.0 1113.0,646.5 Q1125.0,645.0 1135.0,644.0 Q1145.0,643.0 1150.0,641.5 Q1155.0,640.0 1152.5,634.0 Q1150.0,628.0 1145.0,621.5 Q1140.0,615.0 1134.0,607.5 Q1128.0,600.0 1124.0,592.5 Q1120.0,585.0 1116.0,582.5 Q1112.0,580.0 1110.8,573.8 Q1109.5,567.5 1105.8,563.8 Q1102.0,560.0 1097.0,557.5 Q1092.0,555.0 1087.0,553.8 Q1082.0,552.5 1077.0,550.0 Q1072.0,547.5 1069.5,543.8 Q1067.0,540.0 1070.8,538.1 Q1074.5,536.2 1079.5,536.9 Q1084.5,537.5 1085.8,535.0 Q1087.0,532.5 1084.5,528.8 Q1082.0,525.0 1078.2,521.2 Q1074.5,517.5 1074.5,513.8 Q1074.5,510.0 1077.0,507.5 Q1079.5,505.0 1080.8,501.2 Q1082.0,497.5 1080.1,493.8 Q1078.2,490.0 1080.1,486.2 Q1082.0,482.5 1084.5,478.8 Q1087.0,475.0 1084.5,471.2 Q1082.0,467.5 1077.0,463.8 Q1072.0,460.0 1067.0,456.2 Q1062.0,452.5 1055.8,449.4 Q1049.5,446.2 1043.2,442.5 Q1037.0,438.8 1030.8,435.6 Q1024.5,432.5 1019.5,431.2 Q1014.5,430.0 1009.5,430.6 Q1004.5,431.2 997.0,431.9 Q989.5,432.5 982.0,431.9 Q974.5,431.2 968.2,430.0 Q962.0,428.8 958.2,425.6 Q954.5,422.5 953.2,417.5 Z"/><path d="M262.0,730.0 Q262.0,660.0 266.1,660.8 Q270.1,661.7 282.2,663.1 Q294.2,664.4 307.2,664.9 Q320.1,665.4 322.9,667.7 Q325.7,670.0 326.6,673.7 Q327.6,677.4 334.0,681.1 Q340.5,684.8 343.3,689.0 Q346.1,693.1 353.5,693.6 Q360.9,694.1 366.4,697.8 Q372.0,701.5 377.6,702.9 Q383.1,704.3 390.5,705.2 Q397.9,706.1 403.5,707.5 Q409.0,708.9 414.6,710.7 Q420.1,712.6 423.9,716.3 Q427.6,720.0 431.3,725.6 Q435.0,731.1 438.7,736.7 Q442.4,742.2 444.2,746.9 Q446.1,751.5 449.8,756.6 Q453.5,761.7 448.9,763.1 Q444.2,764.4 439.6,765.4 Q435.0,766.3 432.2,767.7 Q429.4,769.1 424.8,768.6 Q420.1,768.1 414.6,768.1 Q409.0,768.1 404.4,769.5 Q399.8,770.9 395.1,771.9 Q390.5,772.8 385.0,770.9 Q379.4,769.1 375.7,765.8 Q372.0,762.6 368.3,761.2 Q364.6,759.8 357.2,759.8 Q349.8,759.8 338.7,760.3 Q327.6,760.7 326.6,763.5 Q325.7,766.3 322.0,768.6 Q318.3,770.9 313.7,772.3 Q309.0,773.7 304.4,772.8 Q299.8,771.9 296.1,767.7 Q292.4,763.5 287.7,764.0 Q283.1,764.4 279.4,768.1 Q275.7,771.9 274.8,776.5 Q273.9,781.1 275.7,785.7 Q277.6,790.4 279.4,792.2 Q281.3,794.1 279.4,796.4 Q277.6,798.7 273.9,799.6 Q270.1,800.6 266.1,800.3 Q262.0,800.0 262.0,730.0 Z"/></clipPath>
<filter id="rf" x="0" y="0" width="100%" height="100%" color-interpolation-filters="sRGB"><feTurbulence type="fractalNoise" baseFrequency="0.33" numOctaves="3" seed="4" result="n"/><feDiffuseLighting in="n" surfaceScale="2.2" diffuseConstant="1" lighting-color="#fff" result="l"><feDistantLight azimuth="315" elevation="42"/></feDiffuseLighting><feColorMatrix in="l" type="matrix" values="0 0 0 0 0  0 0 0 0 0  0 0 0 0 0  -3.0 0 0 0 1.85"/></filter>
<filter id="bl" x="-20%" y="-20%" width="140%" height="140%"><feGaussianBlur stdDeviation="14"/></filter>
<mask id="mm" maskUnits="userSpaceOnUse" x="262" y="70" width="1652" height="1004"><rect x="262" y="70" width="1652" height="1004" fill="#000"/><g filter="url(#bl)" fill="#fff"><ellipse cx="1440" cy="565" rx="125" ry="62" transform="rotate(25 1440 565)"/><ellipse cx="1330" cy="575" rx="70" ry="30" transform="rotate(20 1330 575)"/><ellipse cx="1180" cy="455" rx="95" ry="38" transform="rotate(25 1180 455)"/><ellipse cx="1290" cy="500" rx="60" ry="25" transform="rotate(40 1290 500)"/><ellipse cx="1255" cy="695" rx="95" ry="22" transform="rotate(5 1255 695)"/><ellipse cx="1340" cy="715" rx="50" ry="35" transform="rotate(-30 1340 715)"/><ellipse cx="1300" cy="632" rx="85" ry="14" transform="rotate(10 1300 632)"/><ellipse cx="900" cy="668" rx="135" ry="20" transform="rotate(5 900 668)"/><ellipse cx="1470" cy="418" rx="110" ry="14" transform="rotate(18 1470 418)"/><ellipse cx="700" cy="290" rx="105" ry="45" transform="rotate(25 700 290)"/><ellipse cx="420" cy="358" rx="150" ry="14" transform="rotate(-3 420 358)"/><ellipse cx="600" cy="345" rx="90" ry="22" transform="rotate(5 600 345)"/><ellipse cx="390" cy="722" rx="60" ry="22" transform="rotate(15 390 722)"/><ellipse cx="1125" cy="600" rx="40" ry="25" transform="rotate(0 1125 600)"/><ellipse cx="1790" cy="575" rx="50" ry="16" transform="rotate(25 1790 575)"/><ellipse cx="1075" cy="420" rx="70" ry="18" transform="rotate(10 1075 420)"/></g></mask>
<g clip-path="url(#lc)">
<path d="M1261.7,414.0 L1263.3,433.3 L1270.0,450.0 L1273.3,466.7 L1270.0,483.3 L1276.7,496.7 L1281.7,510.0 L1280.0,520.0 L1273.3,530.0 L1263.3,540.0 L1253.3,550.0 L1243.3,556.7 L1240.0,566.7 L1251.7,573.3 L1263.3,586.7 L1265.0,600.0 L1260.0,613.3 L1256.7,626.7 L1253.3,640.0 L1250.0,650.0 L1258.3,660.0 L1260.0,673.3 L1258.3,690.0 L1256.7,706.7 L1255.0,720.0 L1260.0,733.3 L1265.0,750.0 L1265.0,800.0 L700.0,800.0 L700.0,330.0 L1261.0,330.0 Z" fill="#000" fill-opacity=".135"/>
<g mask="url(#mm)"><rect x="272" y="80" width="1632" height="984" filter="url(#rf)" opacity=".42"/></g>
<path d="M32.0,596.9 L38.1,592.2 L46.4,585.2 L53.4,583.4 L60.8,574.9 L69.4,570.4 L77.5,567.6 L86.9,562.2 L91.7,555.4 L99.8,550.4 L107.9,546.1 L116.9,542.5 L123.3,538.2 L132.1,530.1 L139.6,527.9 L146.7,522.8 L151.1,517.9 L161.4,509.5 L169.3,507.6 L176.2,502.8 L184.2,496.1 L192.4,492.7 L200.0,485.8 L206.9,479.5 L212.3,473.8 L220.7,471.7 L229.5,466.7 L235.4,459.5 L245.6,453.6 L253.2,451.6 L258.3,446.6 L268.6,440.5 L275.4,433.5 L283.7,428.0 L289.9,426.1 L297.9,418.8 L304.9,413.5 L311.0,410.9 L321.0,403.5 L328.5,400.0 L334.6,394.1 L342.9,389.9 L348.3,386.4 L359.0,380.1 L365.3,375.9 L373.0,370.2 L379.7,362.7 L389.6,361.2 L396.3,355.1 L401.0,350.3 L411.8,343.2 L417.3,337.0 L425.6,335.8 L434.6,328.8 L442.6,324.2 L446.8,318.3 L457.3,314.2 L462.0,307.3 L471.8,303.7 L477.4,297.3 L486.1,293.5 M1325.4,-964.8 L1319.6,-954.8 L1318.4,-946.7 L1314.1,-941.6 L1307.1,-930.4 L1305.5,-921.5 L1302.0,-914.9 L1297.2,-904.3 L1290.6,-897.4 L1288.6,-889.5 L1285.1,-881.6 L1278.7,-871.8 L1278.1,-864.5 L1273.7,-854.6 L1268.3,-846.1 L1263.2,-840.0 L1259.8,-831.2 L1254.1,-824.4 L1252.1,-815.6 L1247.6,-806.7 L1243.0,-798.2 L1241.2,-791.3 L1233.5,-783.0 L1229.6,-772.0 L1226.6,-762.3 L1221.6,-756.4 L1220.8,-747.5 L1214.7,-739.1 M1214.7,-739.1 L1209.3,-731.2 L1206.9,-722.4 L1199.7,-714.8 L1197.2,-709.3 L1189.5,-699.2 L1184.9,-695.2 L1179.6,-684.8 L1174.3,-677.8 L1168.9,-670.8 L1166.5,-664.7 L1161.2,-656.4 L1155.7,-646.8 L1148.9,-640.2 L1146.4,-630.2 L1141.4,-623.0 L1138.0,-615.5 L1131.5,-611.0 L1125.6,-603.6 L1119.8,-594.5 L1117.7,-585.7 L1113.1,-580.3 L1105.4,-573.4 L1102.1,-564.6 L1098.3,-555.0 L1091.5,-549.5 L1087.4,-539.3 L1084.2,-532.2 L1078.5,-524.9 L1070.6,-517.1 L1065.7,-512.5 L1061.7,-503.6 L1059.2,-494.2 L1051.9,-485.4 L1046.1,-479.7 L1044.7,-473.9 L1039.0,-465.6 L1033.7,-459.0 L1029.7,-449.0 L1023.4,-443.2 L1017.2,-434.6 L1013.4,-427.1 L1007.9,-419.0 L1003.3,-410.4 L998.7,-405.7 L992.8,-398.1 L989.0,-388.5 L983.7,-380.4 L980.7,-373.2 L975.1,-363.6 L967.7,-358.9 L963.2,-350.0 L961.5,-342.1 L956.3,-335.4 L952.2,-326.5 L946.9,-321.3 L939.2,-311.2 L934.3,-303.5 L930.9,-294.7 L925.6,-289.1 L920.2,-279.9 L914.6,-275.7 L913.0,-264.3 L905.4,-260.2 L900.8,-252.2 L896.2,-242.8 L891.2,-235.5 L886.0,-227.3 L881.3,-221.5 L876.5,-212.9 L872.6,-203.1 L866.4,-197.4 L860.7,-188.8 L858.4,-182.5 L851.2,-176.4 L847.0,-168.3 L844.1,-159.9 L839.5,-150.4 L832.9,-146.1 L827.8,-136.7 M827.8,-136.7 L823.3,-130.0 L819.1,-121.5 L812.2,-115.0 L804.1,-109.1 L800.2,-101.4 L792.9,-91.3 L789.3,-84.7 L786.3,-77.2 L778.2,-71.6 L772.3,-64.2 L765.9,-58.1 L761.5,-49.7 L758.2,-43.2 L752.9,-35.6 L743.8,-26.7 L739.5,-21.0 L735.4,-13.7 L728.1,-3.9 L725.4,3.8 L717.6,9.0 L713.0,15.8 L706.8,24.1 L700.6,31.5 L696.3,40.8 L690.8,43.9 L686.2,53.8 L682.2,61.2 L673.7,67.1 L668.6,76.2 L664.3,82.2 L659.9,90.9 L652.7,95.7 L646.3,103.9 L641.5,110.5 L634.8,119.4 L631.1,126.6 L627.9,135.6 L619.9,140.3 L615.9,147.4 L608.3,156.0 L602.8,163.0 L599.7,169.2 L590.9,177.1 L585.9,185.6 L580.3,190.3 L577.8,201.4 L572.0,204.8 L565.0,213.2 L561.2,220.7 L556.4,229.0 L547.5,235.4 L542.5,244.6 L536.6,251.4 L533.1,257.9 M486.1,293.5 L492.8,289.2 L500.1,279.6 L510.3,274.2 L515.8,271.2 L526.8,265.2 L533.1,257.9 M1325.4,-964.8 L1331.7,-953.5 L1334.6,-942.7 L1339.9,-934.2 M2620.4,596.9 L2611.7,593.5 L2607.0,588.8 L2597.2,583.9 L2590.4,576.4 L2581.3,572.5 L2576.6,567.8 L2566.0,560.0 L2562.0,558.0 L2550.9,553.5 L2546.1,545.2 L2535.9,544.1 L2530.6,539.1 L2521.3,530.9 L2515.8,528.4 L2506.7,522.0 L2499.2,518.2 L2494.1,510.5 L2485.2,509.7 L2476.0,500.8 L2469.6,497.6 M1339.9,-934.2 L1342.8,-925.0 L1349.7,-920.3 L1351.3,-909.2 L1355.8,-901.2 L1362.4,-891.7 L1363.9,-884.3 L1368.3,-877.4 L1372.5,-871.4 L1377.4,-863.7 L1382.6,-852.2 L1385.7,-844.7 L1388.5,-837.6 L1396.3,-829.0 L1398.3,-822.3 L1403.9,-811.6 L1406.9,-803.1 L1411.0,-799.3 L1414.5,-788.2 L1420.4,-779.9 L1423.2,-771.1 L1429.0,-763.2 L1433.7,-758.2 L1434.8,-748.6 L1440.0,-739.8 L1445.7,-730.6 L1451.0,-723.1 L1454.2,-717.8 L1455.8,-706.8 L1460.8,-700.5 L1465.7,-691.6 L1471.8,-682.2 L1475.4,-675.1 L1477.2,-668.9 L1481.3,-659.0 L1488.0,-649.9 L1491.6,-644.3 L1496.3,-633.8 L1501.2,-627.6 L1503.0,-621.8 L1508.2,-610.1 L1514.7,-603.8 L1515.1,-597.4 L1522.4,-586.0 L1526.4,-579.9 L1530.4,-570.3 L1534.7,-562.7 L1539.8,-553.8 L1541.8,-546.8 L1548.4,-538.7 L1552.7,-532.6 L1554.4,-524.8 L1557.0,-515.8 L1564.3,-508.4 L1565.8,-497.2 L1571.6,-491.1 L1577.9,-483.1 L1579.0,-473.0 L1585.6,-466.2 L1589.2,-458.8 L1592.2,-452.2 L1598.5,-443.9 L1601.5,-433.0 L1607.6,-427.2 L1610.4,-420.0 L1615.9,-408.7 L1619.7,-403.1 L1623.8,-393.4 L1624.9,-386.7 L1631.2,-379.4 L1633.6,-367.6 L1641.2,-360.7 L1645.0,-351.8 L1646.3,-345.0 L1650.9,-338.6 L1657.9,-329.4 L1661.5,-319.0 L1664.4,-313.0 M1664.4,-313.0 L1668.3,-306.2 L1674.9,-295.4 L1678.8,-288.8 L1682.9,-280.1 L1689.1,-267.0 L1692.2,-261.7 L1697.3,-251.3 L1703.8,-242.9 M2469.6,497.6 L2464.4,494.0 L2452.8,489.1 L2448.6,481.6 L2439.1,476.3 L2430.8,472.3 L2425.0,465.2 L2418.8,461.4 L2412.8,456.1 L2405.3,450.6 L2397.4,444.0 L2387.3,440.0 L2382.7,431.4 L2374.8,429.3 L2368.7,423.2 L2358.9,417.6 L2351.4,410.0 L2344.5,406.6 L2337.3,402.4 L2329.0,394.5 L2322.6,390.2 L2313.4,387.4 L2308.5,381.7 L2302.7,374.6 L2292.4,367.2 L2284.9,362.6 L2278.3,358.5 L2273.1,354.4 L2264.5,347.7 L2258.3,344.2 L2250.2,337.5 L2240.6,330.5 L2236.3,327.1 L2226.6,322.0 L2218.3,313.5 L2212.7,311.9 L2205.3,306.9 L2196.4,298.1 L2189.5,293.7 L2185.3,288.8 L2174.5,284.6 L2170.3,280.1 L2159.7,273.7 L2155.5,267.9 L2144.3,260.0 L2141.2,254.5 L2131.9,251.5 L2123.1,245.1 L2115.0,240.6 L2111.3,234.0 L2101.5,227.7 L2094.6,225.7 L2087.0,220.8 L2078.2,214.5 L2073.1,208.4 M2073.1,208.4 L2064.9,200.1 L2062.0,196.8 L2055.7,188.5 L2050.7,180.5 L2042.0,175.1 L2038.4,168.7 L2029.8,163.0 L2022.0,155.7 L2019.8,150.6 L2011.3,142.0 L2005.3,135.2 L1998.3,127.8 L1991.0,120.6 L1987.6,115.1 L1979.0,107.7 L1975.4,100.0 L1967.9,95.5 L1961.7,88.6 L1954.2,83.3 L1949.4,73.8 L1944.7,70.4 L1935.8,63.0 L1930.7,56.1 L1926.9,49.7 L1920.5,40.7 L1915.1,35.9 L1906.1,28.4 L1901.3,21.3 L1893.0,15.8 L1890.7,7.7 L1882.5,2.7 L1878.1,-2.6 L1869.3,-12.2 L1862.2,-19.3 L1856.6,-22.9 L1852.3,-31.5 L1847.4,-37.0 L1839.6,-43.8 M1839.6,-43.8 L1833.5,-49.6 L1830.8,-58.1 L1822.7,-67.7 L1816.9,-73.5 L1813.9,-82.5 L1806.1,-90.2 L1802.6,-98.1 L1799.2,-105.6 L1792.3,-114.1 L1785.3,-121.3 L1783.0,-126.3 L1777.6,-134.9 L1772.7,-143.7 L1767.7,-150.3 L1760.0,-158.2 L1757.0,-166.7 L1749.6,-172.4 L1746.4,-181.3 L1742.5,-189.1 L1735.4,-196.0 L1731.5,-203.3 L1724.0,-211.5 L1720.3,-219.3 L1713.2,-227.8 L1708.6,-233.6 L1703.8,-242.9 M1325.4,2154.9 L1327.9,2145.0 L1335.4,2137.2 L1337.2,2131.9 L1339.8,2124.1 L1345.9,2114.2 L1350.6,2106.6 L1353.7,2096.7 L1357.3,2088.5 L1361.9,2082.4 L1364.4,2072.7 L1369.8,2064.6 L1372.0,2056.3 L1377.8,2050.6 L1378.8,2040.9 L1383.9,2031.0 L1387.2,2026.2 L1393.4,2018.2 L1394.5,2005.8 L1400.3,2001.8 L1402.2,1990.3 L1409.0,1982.0 L1411.4,1974.2 L1413.8,1966.7 L1420.1,1957.8 L1424.0,1950.7 L1429.9,1942.1 L1433.2,1936.0 L1433.6,1928.2 L1439.8,1917.1 L1443.6,1910.0 L1446.8,1902.8 L1449.7,1893.0 L1456.2,1884.9 L1458.7,1878.2 L1463.2,1869.5 L1467.2,1859.1 L1469.7,1852.3 L1473.1,1843.7 L1479.7,1836.5 L1482.6,1827.0 L1485.0,1819.3 L1488.8,1811.2 L1495.4,1803.9 L1496.8,1796.2 L1504.3,1785.5 L1504.8,1777.6 L1510.6,1769.5 L1515.2,1762.1 L1519.7,1754.5 L1524.3,1745.7 L1528.0,1739.0 L1529.5,1732.0 L1532.2,1722.9 L1536.2,1715.0 L1540.4,1704.3 L1544.3,1699.1 L1549.9,1689.5 L1554.1,1682.5 L1557.0,1672.1 L1563.8,1664.4 L1564.7,1656.9 L1570.9,1647.0 L1572.7,1641.2 L1576.2,1630.3 L1580.4,1622.5 L1584.4,1616.1 L1587.4,1608.5 L1592.9,1601.2 L1595.3,1589.4 L1601.0,1585.2 L1606.4,1577.3 L1607.9,1569.1 L1611.0,1559.9 L1617.9,1549.3 L1619.0,1543.8 L1625.7,1535.0 L1630.7,1525.0 L1630.9,1519.8 L1635.4,1508.5 L1642.1,1501.3 L1643.2,1493.8 L1649.0,1484.0 L1654.4,1475.5 L1654.6,1469.9 L1658.4,1460.8 L1663.2,1453.2 L1666.6,1443.4 L1674.1,1437.3 L1676.3,1429.1 L1678.7,1419.9 L1684.8,1410.1 L1688.0,1402.2 L1691.0,1396.1 L1698.0,1389.4 L1701.1,1377.2 L1703.7,1371.1 M2620.4,596.9 L2614.8,601.4 L2607.3,606.7 L2600.3,612.4 L2593.7,619.8 L2583.0,625.7 L2578.7,632.0 L2571.8,637.5 L2562.9,643.7 L2556.0,646.4 L2551.6,651.2 L2540.8,660.4 L2535.7,664.7 L2528.8,670.3 L2520.5,676.1 L2516.0,680.2 L2506.1,685.3 L2500.6,691.4 L2492.1,700.4 L2487.9,703.1 L2481.1,709.5 L2472.4,714.0 L2464.4,723.1 L2456.1,724.6 L2452.6,732.6 L2443.9,739.9 L2439.2,742.2 L2429.7,748.0 L2422.1,755.1 L2414.8,759.2 L2409.1,767.4 L2401.4,770.7 L2395.1,777.1 L2387.8,783.2 L2381.0,790.1 L2372.0,793.3 L2364.7,801.4 L2357.5,806.1 L2353.0,810.8 L2343.8,817.0 L2337.7,822.8 L2329.9,826.2 L2325.0,835.4 L2317.3,839.6 L2312.1,843.9 L2304.7,851.7 L2293.9,857.3 L2289.4,860.5 L2283.5,867.9 L2274.8,873.1 L2269.7,877.3 L2259.8,884.2 L2252.6,887.7 L2244.9,897.5 L2240.1,901.6 L2232.2,907.1 L2227.3,911.2 L2219.3,917.0 L2210.0,923.3 L2204.6,930.2 L2195.3,934.1 L2190.5,938.6 L2183.4,948.4 L2176.5,950.1 L2169.2,956.7 L2163.0,963.2 L2154.2,966.6 L2146.8,972.5 L2139.5,981.9 L2133.2,987.9 L2125.5,990.2 L2119.0,995.2 L2112.7,1000.8 L2103.5,1010.0 L2097.9,1014.8 L2092.4,1019.3 L2084.0,1026.1 L2076.2,1029.5 L2070.8,1038.1 L2062.3,1040.7 L2055.3,1048.2 L2050.1,1053.0 L2042.0,1059.0 M1703.7,1371.1 L1708.8,1364.1 L1715.2,1357.2 L1723.4,1353.5 L1731.2,1347.4 L1738.0,1338.3 L1743.0,1333.7 L1750.8,1328.3 L1754.8,1322.6 L1761.8,1316.9 L1768.8,1310.5 L1776.8,1305.3 L1785.1,1299.5 L1790.1,1293.0 L1797.2,1284.6 L1804.0,1277.9 L1811.7,1271.1 L1818.5,1265.8 L1822.7,1259.2 L1829.9,1254.6 L1838.1,1247.3 L1845.0,1241.9 L1848.7,1234.4 L1854.2,1228.2 L1862.9,1225.6 L1871.3,1220.2 L1876.7,1211.0 L1884.2,1205.4 L1890.1,1198.0 L1896.1,1194.4 L1900.6,1187.7 L1910.2,1179.3 L1916.9,1176.3 L1921.5,1167.9 L1929.8,1165.1 L1934.7,1158.1 L1940.5,1151.4 L1948.4,1146.4 L1956.9,1137.6 L1961.8,1133.5 L1968.0,1125.7 L1975.4,1120.1 L1981.7,1114.3 L1988.6,1109.4 L1995.8,1101.2 L2001.6,1097.2 L2008.8,1087.4 L2015.9,1082.6 L2023.0,1075.2 L2028.2,1069.3 L2033.6,1065.2 L2042.0,1059.0 M32.0,596.9 L37.3,600.4 L45.8,608.3 L53.8,614.4 L62.2,621.4 L67.7,623.2 L73.6,630.4 L81.0,638.7 L89.8,641.6 L96.1,647.2 L101.6,654.0 L109.8,657.9 L116.5,665.7 L125.0,671.5 L130.2,676.1 L139.0,682.3 L146.2,685.9 L155.8,695.0 L160.1,697.6 L167.6,703.7 L174.9,709.7 L181.8,717.9 L187.4,721.2 L194.6,728.5 L204.9,731.7 L212.3,736.8 L219.0,746.2 L223.7,748.2 L233.9,755.8 L240.7,762.2 L248.6,766.0 L254.4,772.5 L260.5,777.7 L268.8,784.4 L276.9,790.9 L282.5,793.0 L288.8,799.8 L296.5,804.6 L303.0,813.1 L309.8,818.1 L319.8,822.6 L324.7,826.9 L333.6,835.7 L341.0,838.5 L348.6,844.2 L355.5,851.5 L361.4,857.1 L370.0,862.3 L376.2,868.6 L382.5,876.3 L390.7,881.1 L395.1,883.7 L402.2,892.9 L409.4,896.6 L416.4,903.9 L423.7,907.2 L433.6,914.6 L438.1,920.0 L449.0,926.6 L454.1,932.9 L461.5,938.4 L469.0,942.5 L476.0,949.5 L482.9,954.3 L489.9,958.2 L496.6,966.9 L502.4,971.4 L510.1,977.0 L518.7,981.7 M1325.4,2154.9 L1321.4,2146.3 L1319.0,2140.7 L1311.7,2129.2 L1308.7,2121.1 L1307.1,2112.7 L1303.4,2104.4 L1295.7,2097.7 L1292.7,2091.4 L1289.1,2079.9 L1284.7,2073.5 L1282.2,2065.0 L1279.0,2058.2 L1272.8,2047.8 L1271.5,2042.7 L1266.1,2033.8 L1260.4,2024.1 L1257.0,2016.9 L1253.4,2007.3 L1248.9,2001.5 L1244.2,1993.4 L1242.8,1985.0 L1238.6,1974.4 L1234.6,1967.1 L1229.4,1958.1 L1224.4,1952.3 L1223.7,1945.2 L1216.9,1937.0 L1212.4,1927.4 L1212.3,1918.1 L1207.0,1909.0 L1202.6,1900.8 L1197.5,1895.5 L1192.8,1886.2 L1188.3,1879.3 L1188.2,1870.0 L1180.9,1860.9 L1178.0,1854.2 L1175.7,1843.7 L1168.4,1837.9 L1165.4,1828.4 L1163.4,1821.7 L1157.0,1813.5 L1154.2,1803.3 L1149.4,1794.6 L1144.6,1788.3 L1141.1,1780.3 L1138.0,1770.5 L1134.9,1762.0 L1132.6,1756.7 L1128.9,1746.7 L1122.5,1737.8 L1119.7,1732.5 L1113.1,1723.8 L1111.8,1715.4 L1106.2,1708.6 L1103.4,1698.6 L1100.6,1692.8 L1095.5,1683.2 L1092.0,1676.2 L1088.3,1666.6 L1082.9,1658.7 L1078.8,1649.6 L1074.4,1643.3 L1071.0,1633.8 L1066.6,1626.9 L1063.3,1618.8 L1060.7,1607.4 L1056.2,1599.4 L1050.9,1591.5 L1045.3,1586.5 L1045.0,1575.6 L1039.3,1567.7 L1034.6,1561.8 L1030.4,1553.4 L1026.5,1544.3 L1022.9,1537.9 L1019.4,1528.0 L1015.9,1517.5 L1013.3,1511.6 L1009.0,1504.4 L1003.7,1495.2 M1003.7,1495.2 L999.0,1488.2 L996.9,1480.0 L992.7,1469.3 L984.5,1463.6 L984.3,1455.7 L980.0,1447.6 L971.8,1439.3 L968.9,1430.9 L963.8,1420.9 L961.1,1412.4 L955.9,1406.6 L953.4,1398.6 L948.0,1388.5 M948.0,1388.5 L939.5,1381.4 L937.2,1378.0 L930.4,1368.3 L921.9,1365.5 L914.9,1356.5 L910.3,1352.7 L901.7,1344.0 L894.6,1339.1 L890.7,1332.3 L884.8,1325.6 L879.0,1320.1 L868.6,1312.6 L862.1,1306.6 L855.7,1299.1 L851.9,1295.6 L844.1,1289.8 L837.7,1280.9 L831.8,1277.0 L823.5,1271.4 L816.8,1262.1 L811.0,1258.6 L805.8,1250.4 L800.4,1246.3 L791.7,1237.8 L787.2,1231.6 L782.0,1226.3 L774.3,1217.3 L766.4,1210.8 L758.7,1206.3 L756.0,1202.3 L749.7,1192.0 L743.0,1189.8 L733.7,1181.1 L728.2,1174.1 L720.5,1167.4 L716.7,1162.5 L710.3,1158.4 L703.0,1150.2 L695.2,1141.7 L687.6,1139.7 L682.0,1129.3 L674.7,1126.1 L671.2,1120.2 L663.5,1114.2 L659.4,1106.2 L648.7,1102.0 L644.0,1093.9 L637.2,1088.5 L632.0,1079.3 L623.8,1075.7 L618.5,1068.5 M518.7,981.7 L525.3,989.6 L531.1,995.7 L538.9,1000.1 L547.9,1005.8 L555.9,1014.3 L563.1,1017.6 L568.4,1023.1 L574.8,1032.1 L583.5,1037.8 L589.9,1044.2 L595.0,1047.8 L605.4,1055.9 L610.0,1061.9 L618.5,1068.5 M884.1,614.9 L876.0,619.7 L868.8,620.9 L859.8,626.6 L850.4,632.7 L843.3,636.1 L834.5,640.1 L825.9,643.3 L818.1,647.2 M884.1,614.9 L881.8,623.3 L880.0,634.3 L880.9,643.7 L881.8,656.1 L878.1,667.2 L878.1,676.1 M878.1,676.1 L866.4,679.1 L858.7,682.2 L846.9,683.1 M846.9,683.1 L840.7,676.5 L834.7,667.1 L823.6,661.3 L818.5,655.2 M818.1,647.2 L818.5,655.2 M518.7,981.7 L523.9,975.4 L531.6,970.2 L535.2,961.6 L544.7,955.0 L547.6,948.1 L553.8,939.6 L560.6,933.5 L567.1,930.1 L574.3,922.3 L582.1,915.4 L585.9,909.5 L591.6,900.6 L598.2,895.2 L603.4,889.8 L609.9,882.6 L614.7,874.9 L621.9,867.1 L628.1,862.3 L634.4,857.0 L641.7,847.1 L646.0,843.2 L652.2,836.9 L658.4,826.7 L665.5,822.3 L672.6,813.6 L678.0,809.2 L682.5,801.0 L691.6,797.2 L694.3,790.2 L701.1,782.3 L709.6,776.2 L715.9,769.4 L722.1,762.6 L726.3,756.8 L733.5,747.5 L736.8,743.3 L747.2,736.3 L752.2,730.2 L759.3,722.3 L765.2,715.3 L769.4,710.1 L777.1,703.9 L781.2,696.5 L789.9,689.7 L792.6,680.6 L801.5,675.3 L804.7,670.3 L810.7,659.8 L818.5,655.2 M618.5,1068.5 L622.6,1059.8 L629.5,1052.0 L632.9,1046.7 L635.2,1035.6 L642.8,1031.0 L645.8,1023.2 L651.6,1014.0 L654.2,1006.7 L660.2,996.2 L663.5,988.6 L669.7,980.2 L673.1,975.3 L680.3,967.7 L684.3,958.9 L687.0,951.8 L694.4,943.0 L697.9,932.8 L700.4,926.3 L708.9,918.3 L713.5,913.1 L715.3,903.2 L722.6,896.1 L726.0,886.5 L728.7,880.0 L735.1,872.8 L738.4,863.8 L742.9,856.9 L749.7,847.3 L752.2,838.4 L756.1,834.5 L764.0,824.4 L769.1,815.1 L774.4,807.6 L777.6,801.3 L781.7,791.9 L786.5,787.5 L792.0,778.0 L797.5,768.4 L798.3,760.5 L804.0,754.3 L811.1,746.9 L815.2,738.7 L819.1,728.9 L823.9,720.9 L826.8,714.7 L831.4,706.6 L837.9,697.7 L844.1,690.9 L846.9,683.1 M486.1,293.5 L490.3,298.5 L497.2,307.2 L506.2,312.0 L510.3,321.8 L519.0,327.8 L524.4,335.6 L531.1,338.9 L536.2,348.9 L541.4,355.1 L549.9,360.9 L553.3,364.7 L561.9,374.9 L567.6,378.9 L575.5,387.3 L578.8,394.8 L586.9,401.1 L592.1,406.0 L598.3,414.3 L605.7,419.7 L610.0,426.3 L617.9,431.9 L622.5,441.9 L629.5,446.6 L634.6,453.8 L641.2,458.3 L649.1,466.9 L655.6,473.2 L660.3,482.0 L669.3,485.4 L675.7,494.6 L682.0,500.5 L685.3,508.7 L693.8,512.5 L698.2,519.0 L704.8,529.2 L711.3,533.8 L719.4,540.1 L723.2,547.0 L729.7,552.8 L737.2,558.3 L741.5,565.2 L748.2,573.7 L754.1,578.3 L762.1,589.3 L766.3,593.5 L772.9,600.7 L780.5,608.6 L785.2,613.7 L791.2,620.9 L798.2,627.8 L805.9,632.9 L813.9,641.8 L818.1,647.2 M533.1,257.9 L542.3,264.0 L546.9,267.6 L555.4,274.3 L563.0,280.2 L570.3,281.2 L579.3,289.1 L587.1,294.8 L592.3,298.5 L598.3,303.6 L608.8,308.4 L614.2,316.0 L620.8,317.2 L627.9,324.8 L637.7,330.9 L644.9,336.3 L649.7,338.0 L660.4,343.9 L667.9,347.8 L673.1,353.2 L680.4,358.4 L688.0,365.4 L698.5,371.4 L705.4,373.0 L710.4,380.3 L719.8,387.3 L724.2,391.0 L733.4,396.2 L740.5,398.7 L747.3,407.7 L754.4,412.7 L765.2,415.8 L769.1,422.7 L777.4,424.8 L783.8,430.6 L794.3,437.9 L798.7,442.2 L806.8,447.6 L814.0,453.3 L821.1,455.3 L828.3,461.0 L839.4,467.6 L845.4,471.5 L854.2,476.7 L861.4,480.6 L867.5,486.7 L875.6,490.7 L880.1,498.2 L887.4,501.4 L897.9,508.9 L905.4,511.5 L913.8,516.8 L920.3,523.9 L926.5,527.9 M884.1,614.9 L886.4,605.8 L892.5,600.5 L896.2,589.6 L902.7,584.4 L903.0,575.7 L909.8,566.1 L912.8,557.0 L916.2,548.5 L919.2,539.6 L925.4,533.4 M926.5,527.9 L925.4,533.4 M1104.3,344.5 L1104.0,352.0 L1105.8,361.3 L1106.3,371.2 L1105.8,381.1 L1109.2,389.4 L1108.3,398.7 L1109.4,407.4 L1109.1,417.4 L1110.5,428.3 L1112.0,436.4 M1104.3,344.5 L1098.4,353.5 L1092.1,360.3 L1087.3,365.9 L1082.9,374.3 L1077.0,383.8 L1070.9,390.8 L1068.2,399.8 L1060.9,405.8 M1112.0,436.4 L1100.4,434.1 L1093.4,431.9 L1084.3,425.5 L1075.3,424.5 L1063.8,421.4 M1060.9,405.8 L1063.8,421.4 M1214.7,-739.1 L1216.2,-728.2 L1212.9,-722.8 L1212.1,-710.3 L1213.0,-703.8 L1211.8,-694.9 L1213.7,-685.8 L1213.4,-674.4 L1211.2,-667.4 L1211.6,-657.5 L1212.3,-647.9 L1212.6,-639.1 L1211.3,-630.0 L1211.2,-622.8 L1212.0,-612.6 L1212.8,-602.3 L1208.9,-591.4 L1212.1,-584.1 L1207.7,-573.2 L1211.3,-566.5 L1209.4,-555.5 L1207.0,-549.7 L1207.0,-537.9 L1207.2,-528.0 L1207.4,-521.9 L1210.1,-511.9 L1206.4,-501.9 L1207.3,-492.8 L1205.9,-484.5 L1205.5,-476.7 L1205.3,-464.7 L1205.3,-458.9 L1205.3,-448.5 L1206.7,-437.9 L1205.9,-429.7 L1205.6,-420.9 L1203.8,-413.7 L1204.0,-401.8 L1202.6,-394.1 L1206.4,-384.7 L1202.8,-375.0 L1201.7,-367.6 L1203.6,-356.3 L1202.6,-348.4 L1201.5,-340.7 L1202.5,-328.7 L1201.1,-319.7 L1203.6,-309.6 L1200.3,-300.3 L1199.6,-293.2 L1202.3,-284.5 L1200.0,-274.6 L1198.9,-267.5 L1201.8,-257.7 L1200.1,-246.4 L1200.0,-238.9 L1201.6,-229.6 L1199.4,-221.0 L1199.4,-213.1 L1201.1,-204.3 L1197.3,-191.8 L1199.2,-182.0 L1199.0,-173.7 L1197.3,-164.8 L1197.5,-159.1 L1196.4,-148.1 L1198.7,-136.9 L1199.0,-129.7 L1197.0,-119.0 L1194.9,-113.3 L1195.4,-102.0 L1194.9,-94.9 L1195.5,-84.0 L1196.9,-73.1 L1197.0,-67.9 L1193.0,-57.2 L1192.4,-48.0 L1193.7,-36.8 L1195.8,-27.7 L1192.9,-21.8 L1193.3,-11.4 M827.8,-136.7 L830.7,-127.6 L831.7,-121.6 L835.8,-111.7 L838.8,-102.1 L843.6,-95.3 L844.1,-85.5 L849.3,-75.9 L850.8,-69.6 L855.5,-62.2 L856.8,-51.3 L861.0,-41.7 L863.4,-35.3 L865.1,-24.6 L871.6,-19.8 L874.9,-9.1 L875.2,-1.3 L877.2,7.9 L882.0,17.0 L884.3,22.8 L889.0,33.1 L891.3,42.8 L893.2,52.0 L898.0,60.1 L899.7,66.5 L901.4,77.0 L907.4,84.5 L910.3,92.5 L913.9,99.2 L916.7,110.6 L916.0,119.0 L921.4,127.8 L922.3,133.4 L926.6,143.9 L929.3,153.9 L932.5,159.9 L935.1,168.2 L940.3,178.7 L939.9,184.3 L944.2,194.1 L946.4,202.9 L950.7,212.9 L953.8,217.9 L954.9,229.9 L961.7,237.5 L963.7,244.4 L966.2,251.8 L970.7,262.8 L973.8,271.5 L976.9,281.0 L977.5,286.4 L981.9,294.7 L982.1,304.9 L988.5,314.5 L991.4,323.6 L994.6,328.6 L995.4,337.8 L999.2,346.9 L1001.2,356.2 L1002.7,364.3 L1009.3,371.0 L1010.9,381.2 M1010.9,381.2 L1017.5,386.1 L1028.3,389.0 L1037.6,394.8 L1042.7,398.2 L1052.3,402.5 L1060.9,405.8 M1193.3,-11.4 L1191.0,-1.3 L1193.7,9.0 L1189.3,16.4 L1188.3,27.8 L1191.0,36.7 L1186.7,44.4 L1189.4,55.8 L1187.2,65.1 M1187.2,65.1 L1184.3,72.5 L1181.2,83.0 L1181.5,90.7 L1174.9,101.1 L1172.5,107.8 L1173.6,119.2 L1167.2,126.8 L1165.8,134.7 L1165.0,142.2 L1160.5,150.5 L1159.4,160.2 L1154.2,167.8 L1154.1,178.2 L1151.2,187.0 L1146.4,196.3 L1145.6,203.8 L1142.2,211.7 L1141.8,223.5 L1137.7,231.0 L1134.4,239.1 L1133.6,250.0 L1128.4,259.3 L1126.6,266.9 L1125.7,273.8 L1123.8,285.2 L1120.4,293.3 L1119.0,302.4 L1112.9,307.5 L1110.4,316.7 L1107.5,327.2 L1106.5,334.0 L1104.3,344.5 M1815.8,612.0 L1804.7,613.7 L1798.8,618.1 L1787.1,620.3 M1815.8,612.0 L1825.1,620.5 L1834.7,624.2 L1842.7,632.6 L1849.4,638.9 M1787.1,620.3 L1787.8,628.0 L1787.0,639.0 L1786.9,646.0 L1783.7,656.3 L1785.1,665.6 M1785.1,665.6 L1796.6,666.5 L1806.2,667.9 L1814.0,671.8 L1822.0,671.5 L1832.5,674.5 M1849.4,638.9 L1844.5,649.7 L1842.1,655.3 L1838.3,663.8 L1832.5,674.5 M1956.1,346.2 L1953.1,355.1 L1945.8,361.3 L1945.5,372.3 L1937.8,379.5 L1934.1,386.4 L1932.2,393.1 L1925.5,404.6 L1920.8,409.8 L1919.1,420.3 L1914.8,424.6 L1907.5,436.2 L1905.0,442.6 L1900.8,452.8 L1895.6,459.1 L1894.0,467.8 L1890.2,473.4 L1882.5,480.9 L1878.5,491.5 L1874.3,501.3 L1871.2,508.9 L1867.8,514.0 L1863.0,525.4 L1859.5,530.6 L1856.2,541.3 L1851.2,547.3 L1844.8,557.1 L1841.3,563.4 L1834.8,570.1 L1831.2,580.7 L1827.5,587.1 L1822.3,596.5 L1821.9,605.5 L1815.8,612.0 M1956.1,346.2 L1951.6,353.8 L1941.7,357.8 L1935.3,367.1 L1929.1,371.4 L1923.5,378.9 L1917.9,385.8 L1910.2,390.7 L1905.9,394.0 L1898.7,402.0 L1891.1,407.9 L1884.6,417.1 L1878.8,419.1 L1871.0,427.9 L1864.5,433.7 L1858.7,440.1 L1850.6,445.4 L1846.9,452.4 L1841.1,460.5 L1831.4,467.1 L1826.0,471.0 L1821.7,479.0 L1812.7,485.2 L1805.4,491.3 L1801.0,494.4 L1795.0,504.3 L1786.5,510.3 L1781.1,515.0 M1781.1,515.0 L1779.5,525.2 L1781.5,534.5 L1781.0,546.1 L1780.7,556.1 L1778.4,565.3 L1778.9,572.1 L1780.3,581.6 L1777.9,591.9 L1778.2,605.1 L1778.0,613.3 M1778.0,613.3 L1787.1,620.3 M2469.6,497.6 L2460.6,501.1 L2451.7,502.3 L2441.7,502.1 L2434.3,504.5 L2426.4,506.2 L2415.8,510.2 L2407.1,510.0 L2399.4,512.8 L2391.8,517.2 L2379.4,515.8 L2370.5,519.1 L2363.1,522.6 L2354.5,523.7 L2346.9,527.7 L2334.9,527.7 L2327.2,531.5 L2320.8,532.1 L2309.6,534.3 L2302.1,537.7 L2292.0,536.9 L2285.4,540.7 L2274.9,539.9 L2266.5,541.9 L2255.0,545.7 L2249.6,549.8 L2241.0,550.7 L2230.2,551.5 L2220.1,554.4 L2212.4,555.8 L2205.4,559.3 L2197.1,561.6 L2186.3,563.7 L2179.3,563.5 L2166.6,565.8 L2160.5,569.1 L2151.9,570.6 L2140.0,571.4 L2131.8,572.7 L2125.6,575.1 L2115.8,580.4 L2105.2,581.9 L2098.1,581.5 L2088.5,583.8 L2079.2,584.3 L2072.0,590.2 L2061.9,592.3 L2054.6,591.6 L2043.1,593.4 L2035.4,597.6 L2027.2,596.9 L2018.7,602.5 L2007.4,600.9 L2000.0,603.4 L1991.6,605.1 L1984.0,607.4 L1971.4,612.7 L1964.3,613.3 L1957.1,616.7 L1948.5,616.4 L1938.7,616.9 L1929.3,621.8 L1921.2,620.7 L1911.5,625.0 L1903.7,626.5 L1891.6,628.5 L1886.9,630.5 L1874.7,633.5 L1869.1,633.3 L1857.4,636.0 L1849.4,638.9 M2073.1,208.4 L2068.5,214.0 L2060.7,221.5 L2055.5,228.1 L2050.9,237.6 L2045.9,242.7 L2037.3,249.5 L2031.3,254.5 L2024.7,263.4 L2019.0,269.0 L2015.0,277.5 L2010.8,283.7 L2002.1,291.7 L1995.1,298.6 L1990.1,305.6 L1986.2,311.2 L1980.9,316.7 L1975.1,324.6 L1970.0,333.6 L1960.4,339.2 L1956.1,346.2 M1703.7,1371.1 L1703.8,1364.1 L1698.8,1351.3 L1695.7,1342.8 L1694.2,1335.1 L1691.7,1326.5 L1691.5,1318.1 L1689.8,1306.6 L1686.4,1299.7 L1686.7,1289.0 L1681.9,1279.1 L1679.0,1271.5 L1680.1,1260.8 L1678.1,1250.1 L1675.5,1244.1 L1671.1,1235.9 L1670.4,1226.5 L1670.4,1217.0 L1665.9,1204.6 L1665.0,1199.4 L1661.9,1188.2 L1660.3,1177.7 L1660.0,1170.4 L1656.6,1160.9 M1656.6,1160.9 L1656.5,1152.4 L1655.5,1142.1 L1658.3,1131.7 L1656.9,1125.5 L1657.6,1115.5 L1659.0,1105.9 L1657.1,1093.7 L1659.8,1085.2 L1658.7,1075.4 L1660.8,1065.1 L1659.1,1060.0 L1659.4,1047.5 L1660.7,1038.8 L1659.5,1031.2 L1658.2,1019.4 L1658.0,1011.4 L1659.0,1001.5 L1660.3,992.2 M1736.2,717.7 L1735.1,728.2 L1729.2,737.2 L1729.8,742.6 L1727.2,753.2 L1725.6,760.9 L1722.8,771.7 L1717.3,779.8 L1714.7,788.6 L1712.1,796.4 L1710.3,806.2 L1710.5,815.4 L1705.2,822.0 L1702.3,834.6 L1702.2,842.0 L1698.4,852.3 L1699.0,858.6 L1693.9,868.5 L1690.8,875.4 L1689.6,884.3 L1685.5,896.7 L1686.2,902.3 L1683.3,913.2 L1681.3,921.6 L1679.1,928.5 L1673.5,939.4 L1671.0,946.8 L1671.2,957.8 L1666.4,965.8 L1663.0,974.2 L1664.5,985.0 L1660.3,992.2 M2042.0,1059.0 L2035.7,1051.3 L2031.8,1041.4 L2030.8,1036.6 L2022.6,1027.4 L2020.7,1016.8 L2015.9,1010.3 L2009.8,1002.7 L2006.1,995.2 L2002.6,985.0 L2000.3,979.7 L1992.8,970.1 L1987.9,963.9 L1984.7,956.6 L1980.2,946.8 L1975.9,937.1 L1971.5,932.7 L1966.8,924.2 L1961.8,914.5 L1959.4,908.0 L1952.7,898.3 L1949.2,892.0 L1947.6,881.0 L1942.6,873.9 L1935.8,865.2 L1933.3,856.7 L1927.6,848.7 L1926.4,841.9 L1920.5,834.0 L1916.2,825.0 L1912.6,817.5 L1905.8,811.6 L1903.2,803.3 L1898.2,793.2 L1892.6,785.2 L1887.5,777.4 L1884.3,772.0 L1880.9,761.3 L1875.1,752.9 L1872.9,746.9 L1869.1,739.4 L1863.1,730.2 L1857.2,720.4 L1854.8,713.9 L1850.3,705.6 L1844.1,697.7 L1839.6,691.0 L1837.1,684.4 L1832.5,674.5 M1736.2,717.7 L1742.9,710.0 L1750.0,702.8 L1759.1,696.1 L1763.1,687.5 L1771.5,679.8 L1780.1,672.5 L1785.1,665.6 M1357.6,316.5 L1356.4,326.2 L1350.4,333.0 L1349.7,344.0 L1346.2,351.1 L1343.9,359.5 L1340.7,371.7 L1336.7,378.5 L1335.6,385.9 L1333.2,397.6 L1330.7,407.6 L1326.7,415.9 L1325.1,423.5 M1325.1,423.5 L1324.4,424.1 M1339.9,-934.2 L1338.4,-924.6 L1338.1,-914.6 L1342.3,-907.9 L1338.4,-899.4 L1340.6,-887.0 L1342.5,-878.3 L1339.5,-869.8 L1340.2,-863.7 L1341.8,-853.1 L1343.4,-844.0 L1340.6,-835.0 L1339.8,-825.7 L1343.7,-814.5 L1343.1,-808.8 L1341.0,-799.0 L1340.0,-790.5 L1343.9,-780.3 L1341.8,-772.6 L1343.4,-759.9 L1341.1,-753.5 L1343.5,-742.6 L1340.7,-734.3 L1341.3,-727.7 L1344.3,-717.9 L1342.4,-709.1 L1343.6,-699.8 L1345.5,-691.0 L1344.6,-682.0 L1345.5,-671.0 L1344.3,-660.7 L1345.4,-655.4 L1342.6,-646.2 L1342.7,-633.9 L1345.1,-627.7 L1343.8,-616.1 L1344.6,-605.9 L1346.4,-597.0 L1344.7,-591.0 L1343.3,-580.6 L1344.6,-573.2 L1347.1,-564.4 L1346.8,-555.2 L1344.5,-546.6 L1347.4,-536.0 L1344.5,-528.5 L1345.5,-518.9 L1345.2,-509.7 L1345.1,-501.0 L1346.5,-491.9 L1346.9,-479.3 L1344.8,-470.2 L1345.8,-463.9 L1346.6,-452.0 L1347.8,-445.0 L1345.4,-435.4 L1346.7,-428.5 L1348.4,-417.4 L1348.1,-406.8 L1347.8,-400.1 L1348.2,-390.5 L1346.2,-383.5 L1348.8,-374.4 L1348.8,-364.1 L1350.3,-353.0 L1346.9,-345.6 L1348.5,-335.6 L1350.4,-327.9 L1347.0,-318.2 L1347.6,-308.7 L1351.0,-299.7 L1347.3,-289.9 L1350.1,-281.6 L1347.9,-273.7 L1350.0,-262.5 L1348.0,-255.2 L1347.8,-247.6 L1350.2,-237.8 L1351.5,-225.4 L1349.5,-218.0 L1348.0,-210.4 L1349.7,-201.9 L1352.4,-193.1 L1350.8,-182.7 L1352.8,-170.8 L1352.9,-161.7 L1349.5,-156.2 L1350.8,-146.7 L1352.7,-136.5 L1352.0,-127.9 L1353.4,-119.2 L1349.8,-109.5 L1352.0,-101.5 L1351.3,-89.6 L1353.3,-83.4 L1350.5,-74.6 L1353.6,-64.1 L1350.2,-56.2 L1350.5,-45.6 L1352.7,-35.8 L1352.6,-27.4 L1352.0,-20.7 L1354.6,-8.0 L1351.7,0.0 L1354.2,6.3 L1354.6,17.0 L1352.0,26.7 L1355.2,35.4 L1355.7,43.2 L1355.1,52.2 L1355.9,64.5 L1353.1,72.8 L1353.0,78.8 L1352.3,90.8 L1352.4,99.2 L1354.5,106.4 L1355.0,116.1 L1356.4,124.8 L1355.1,136.9 L1356.5,143.1 L1356.2,152.0 L1357.3,160.9 L1353.6,171.4 L1355.6,180.3 L1355.3,187.5 L1357.0,199.3 L1355.1,209.2 L1355.3,215.2 L1354.6,223.8 L1357.2,232.8 L1354.8,245.1 L1357.6,251.2 L1356.2,264.2 L1358.6,271.0 L1357.7,282.1 L1357.0,289.4 L1358.3,297.7 L1359.5,307.6 L1357.6,316.5 M1193.3,-11.4 L1195.5,-2.1 L1196.6,8.3 L1198.1,16.4 L1200.3,23.7 L1205.6,33.4 L1206.4,40.1 L1207.7,48.8 L1210.1,59.4 L1210.4,66.3 L1216.6,78.2 L1215.7,86.0 L1220.2,95.3 L1220.9,100.8 L1223.7,111.3 L1224.9,121.2 L1226.6,128.7 L1231.3,138.8 L1233.0,145.4 L1233.4,155.1 L1237.7,163.9 L1236.9,174.6 L1238.9,180.1 L1241.0,189.8 L1244.0,198.2 L1247.7,208.8 L1247.2,218.2 L1252.6,223.5 L1254.3,234.4 L1254.4,244.8 L1259.2,250.1 L1260.9,258.5 L1261.2,267.9 L1261.6,278.7 L1263.9,285.3 L1267.6,295.4 L1270.9,302.5 L1272.7,314.9 L1275.7,322.2 L1275.1,332.6 L1279.8,339.4 L1280.1,346.9 L1284.0,358.5 L1282.9,363.8 L1286.3,373.9 L1290.4,382.0 L1292.4,393.6 L1292.8,401.6 L1294.0,411.2 L1297.6,418.6 M1324.4,424.1 L1317.1,423.2 L1304.7,421.5 L1297.6,418.6 M1003.7,1495.2 L1007.8,1488.7 L1011.9,1480.1 L1012.3,1469.5 L1017.1,1461.8 L1020.8,1452.2 L1025.3,1446.8 L1029.1,1438.3 L1031.6,1426.5 L1036.1,1420.8 L1040.7,1411.1 L1043.0,1404.8 L1045.4,1393.2 L1048.7,1386.4 L1054.9,1379.6 L1055.9,1368.9 L1059.6,1361.7 L1066.0,1351.2 L1068.6,1345.7 L1070.0,1336.8 L1076.5,1326.0 L1079.1,1317.6 L1083.3,1309.9 L1084.4,1300.7 L1087.3,1296.0 L1094.0,1284.0 L1096.5,1276.8 L1099.4,1269.8 L1103.3,1260.8 L1109.0,1254.0 L1110.3,1245.4 L1113.3,1237.4 L1119.1,1227.0 L1123.4,1219.6 L1123.5,1211.3 L1126.5,1203.4 L1133.2,1194.6 L1135.5,1185.1 L1141.0,1178.5 L1143.3,1166.5 L1147.4,1162.3 L1149.7,1151.8 L1151.9,1142.3 L1158.7,1135.7 L1161.2,1128.4 L1166.1,1120.2 L1168.9,1109.3 L1173.0,1102.7 L1176.0,1094.3 L1176.6,1083.2 L1182.8,1074.9 L1186.7,1067.0 L1187.5,1061.9 L1190.9,1050.5 L1196.1,1044.0 L1198.3,1033.2 L1202.4,1026.8 L1209.2,1019.9 L1208.6,1007.9 L1214.8,999.2 L1217.5,992.2 L1220.2,986.4 L1225.1,977.4 L1227.6,969.9 L1233.9,957.3 L1236.4,952.0 L1239.8,944.3 L1241.5,935.8 L1246.5,928.0 L1249.4,916.4 L1254.0,910.9 L1255.8,900.9 L1261.7,894.2 L1263.5,883.3 L1268.6,874.5 L1269.4,865.6 L1274.6,860.3 L1280.1,850.0 L1280.5,843.4 L1284.0,836.0 L1290.6,824.3 L1291.4,815.5 L1298.1,807.7 L1300.5,801.6 L1302.3,791.2 L1306.2,783.3 L1310.8,775.2 M1310.8,775.2 L1310.2,774.4 M969.1,1292.9 L968.0,1300.1 L965.4,1308.8 L961.3,1319.0 M948.0,1388.5 L950.1,1377.8 L950.7,1367.2 L954.7,1360.7 L954.1,1347.5 L957.7,1337.1 L960.0,1330.4 L961.3,1319.0 M1068.9,1043.7 L1070.8,1034.9 L1078.5,1026.2 L1078.6,1018.5 L1084.7,1011.7 L1088.3,1000.5 L1092.9,994.7 L1096.3,985.6 L1098.5,977.3 L1102.4,971.1 L1109.0,960.2 L1112.7,952.1 L1116.4,944.1 L1120.7,937.0 L1122.6,930.0 L1127.0,922.2 L1131.2,909.8 L1135.8,901.8 L1140.9,894.3 L1143.1,885.7 L1147.0,877.2 L1149.1,869.2 L1155.9,863.1 L1157.3,854.3 L1162.0,844.5 L1165.0,837.8 L1168.4,828.3 L1175.9,821.1 L1180.1,811.8 L1182.8,805.9 L1185.9,796.2 L1190.0,789.5 L1193.8,779.8 M1068.9,1043.7 L1065.5,1051.0 L1061.9,1060.9 L1058.5,1068.7 L1056.7,1078.4 L1049.7,1084.8 L1049.6,1097.4 L1046.5,1103.2 L1043.5,1111.2 L1039.4,1119.2 L1033.3,1131.5 L1030.9,1136.9 L1026.3,1148.1 L1023.3,1154.0 L1020.4,1164.5 L1018.2,1173.6 L1012.9,1179.5 L1010.8,1189.5 L1007.7,1197.0 L1004.9,1206.6 L1001.7,1214.8 L998.5,1226.1 L994.9,1232.9 L991.2,1239.4 L987.1,1249.5 L981.5,1258.2 L980.0,1268.5 L977.7,1277.2 L972.3,1284.0 L969.1,1292.9 M1193.8,779.8 L1202.8,777.3 L1213.0,773.9 L1222.4,768.0 L1234.3,766.9 L1244.7,762.9 M1310.2,774.4 L1300.5,774.5 L1289.5,772.7 L1280.1,769.1 L1272.6,767.3 L1263.1,767.5 L1254.3,763.7 L1244.7,762.9 M1089.2,475.4 L1095.6,485.7 L1102.4,491.3 L1110.6,501.6 M1089.2,475.4 L1078.9,475.0 L1069.9,478.2 L1058.4,480.6 L1049.2,479.9 L1037.2,484.8 L1031.3,484.2 L1017.8,486.2 L1009.2,487.9 M1031.5,576.5 L1023.0,571.2 L1017.8,567.6 L1006.8,562.0 L999.7,556.8 L991.6,548.7 L987.8,544.4 L978.5,539.4 L972.4,532.4 L963.3,527.5 M1031.5,576.5 L1040.8,571.6 L1046.0,566.2 L1053.8,558.2 L1062.6,553.1 L1071.6,548.5 L1078.7,541.6 L1086.6,535.7 L1093.7,528.0 L1100.8,522.9 L1108.6,517.1 M1108.6,517.1 L1110.6,501.6 M963.3,527.5 L972.1,519.6 L975.9,514.6 L985.4,506.4 L990.1,498.6 M990.1,498.6 L1000.9,491.6 L1009.2,487.9 M1113.0,437.4 L1107.5,445.0 L1102.1,457.8 L1095.0,466.7 L1089.2,475.4 M1133.3,440.3 L1122.7,437.7 L1113.0,437.4 M1147.1,484.1 L1137.5,489.7 L1130.2,491.7 L1118.9,496.0 L1110.6,501.6 M1133.3,440.3 L1135.9,447.3 L1136.7,457.3 L1143.1,466.2 L1146.6,473.5 L1147.1,484.1 M1112.0,436.4 L1113.0,437.4 M1063.8,421.4 L1056.5,430.8 L1053.6,434.3 L1044.8,444.0 L1039.8,451.3 L1035.0,459.5 L1027.6,465.3 L1019.7,473.6 L1016.8,479.4 L1009.2,487.9 M926.5,527.9 L933.9,528.9 L943.0,529.2 L953.6,526.5 L963.3,527.5 M1010.9,381.2 L1008.5,391.9 L1008.7,400.6 L1005.6,407.4 L1003.4,416.3 L1003.2,425.1 L1003.2,434.1 L1001.0,443.8 L996.9,453.9 L995.4,464.4 L995.5,472.8 L994.4,481.7 L991.6,488.2 L990.1,498.6 M1640.9,528.1 L1642.8,517.9 L1644.1,510.1 L1647.5,500.9 L1649.9,490.2 L1651.1,482.5 L1651.1,472.4 L1651.6,462.0 L1654.8,451.8 L1658.9,444.6 L1660.4,432.3 L1659.6,422.7 L1662.2,414.6 M1640.9,528.1 L1647.2,535.2 L1656.7,541.0 L1661.5,547.9 M1661.5,547.9 L1671.5,543.1 L1678.0,535.5 L1689.4,529.5 L1697.5,525.4 M1662.2,414.6 L1665.6,422.2 L1665.9,435.2 L1670.5,443.3 L1675.0,452.6 L1678.8,462.8 L1679.4,468.2 L1684.9,479.8 L1687.7,489.5 L1689.3,496.5 L1691.9,505.9 L1696.6,517.5 L1697.5,525.4 M1661.5,408.2 L1662.2,414.6 M1839.6,-43.8 L1834.4,-37.1 L1833.8,-28.7 L1831.6,-20.1 L1826.3,-7.9 L1822.4,0.7 L1820.0,5.7 L1817.8,16.8 L1813.3,24.8 L1807.4,31.4 L1805.1,40.2 L1804.4,51.5 L1800.5,57.3 L1795.2,65.0 L1793.3,77.4 L1791.1,83.8 L1787.5,92.7 L1780.3,100.4 L1781.0,109.7 L1776.4,119.1 L1771.3,125.2 L1768.7,135.0 L1767.1,144.1 L1762.1,150.5 L1757.2,159.7 L1756.0,167.6 L1750.7,177.7 L1747.8,186.7 L1747.1,194.1 L1740.1,202.7 L1737.2,212.2 L1733.7,220.9 L1729.9,230.3 L1729.3,238.5 L1725.8,248.2 L1722.5,253.3 L1717.6,262.9 L1713.9,272.4 L1713.3,279.1 L1707.0,288.4 L1705.3,297.3 L1703.4,304.5 L1696.5,315.7 L1697.2,322.2 L1692.8,332.8 L1687.7,339.0 L1685.3,346.8 L1681.9,358.7 L1679.4,363.3 L1675.3,372.8 L1670.0,382.6 L1666.8,391.6 L1664.4,399.9 L1661.5,408.2 M1781.1,515.0 L1774.6,517.5 L1762.5,522.3 L1754.4,529.4 L1745.5,532.7 L1738.0,536.2 M1738.0,536.2 L1727.8,532.7 L1718.8,531.4 L1709.1,529.7 L1697.5,525.4 M1736.2,717.7 L1735.6,706.6 L1732.4,697.3 L1727.2,686.3 L1725.5,677.0 L1724.3,667.3 L1720.3,658.3 M1778.0,613.3 L1767.7,611.2 L1760.9,612.4 L1751.4,610.4 L1741.8,610.6 M1720.3,658.3 L1725.9,648.8 L1730.4,639.5 L1734.5,630.1 L1736.6,618.4 L1741.8,610.6 M1738.0,536.2 L1734.4,546.5 L1733.7,554.9 L1729.0,563.1 L1727.2,570.3 L1723.4,579.1 L1722.1,588.9 M1741.8,610.6 L1734.1,603.2 L1728.6,595.8 L1722.1,588.9 M1276.0,470.5 L1272.7,460.3 L1269.3,451.2 L1265.6,440.2 M1265.6,440.2 L1253.8,444.1 L1242.5,446.8 L1231.7,445.6 L1221.8,449.9 M1276.0,470.5 L1268.1,477.3 L1263.5,483.1 L1258.7,491.1 L1251.5,498.1 L1243.9,504.3 M1233.9,502.0 L1231.7,492.1 L1229.1,479.5 L1228.2,472.1 L1225.2,458.8 L1221.8,449.9 M1233.9,502.0 L1236.2,503.8 M1243.9,504.3 L1236.2,503.8 M1023.6,645.3 L1028.6,650.1 L1035.6,659.3 L1040.4,668.3 L1045.9,674.3 L1052.8,680.5 L1057.8,688.1 L1063.9,694.1 M1023.6,645.3 L1017.6,650.7 L1012.6,662.3 L1008.5,666.2 L1001.6,675.3 M1001.6,675.3 L1005.4,682.5 L1003.8,693.8 L1008.0,702.4 L1011.0,710.5 L1010.4,718.6 L1013.5,727.3 L1015.1,736.6 L1017.9,748.9 L1020.9,754.2 L1023.5,766.3 L1025.2,773.4 L1026.0,782.5 M1063.9,694.1 L1060.3,703.6 L1056.5,713.0 L1050.6,722.6 L1050.0,730.4 L1045.2,740.1 L1041.0,747.2 L1037.7,756.5 L1035.5,766.8 L1028.0,773.0 L1026.0,782.5 M944.7,646.5 L953.0,655.7 L958.0,659.4 L966.2,666.0 L970.6,674.8 M944.7,646.5 L937.1,655.6 L933.3,663.3 L925.9,673.3 L921.4,680.5 L916.4,688.4 L909.2,698.5 L905.6,706.7 M970.6,674.8 L965.2,682.6 L960.0,692.1 L959.8,700.9 L953.3,707.6 L948.0,714.2 L942.9,725.0 L939.3,730.6 L936.3,740.0 L930.9,747.6 L925.8,754.5 L923.4,763.5 M905.6,706.7 L910.0,714.9 L911.7,725.2 L913.5,733.4 L919.5,743.7 L921.6,754.2 L923.4,763.5 M1001.6,675.3 L992.7,677.0 L981.6,673.3 L970.6,674.8 M925.4,533.4 L926.4,542.5 L927.4,553.8 L931.4,561.9 L933.9,571.6 L932.1,581.6 L933.2,591.3 L936.1,598.5 L939.6,609.9 L939.7,617.0 L943.4,627.1 L944.2,639.1 L944.7,646.5 M1033.6,579.2 L1034.0,590.6 L1029.5,599.3 L1028.8,608.5 L1028.1,616.2 L1026.5,626.8 L1023.7,634.1 L1023.6,645.3 M1033.6,579.2 L1031.5,576.5 M878.1,676.1 L882.9,683.1 L892.0,691.5 L899.3,700.9 L905.6,706.7 M969.1,1292.9 L969.3,1282.8 L971.1,1273.7 L974.0,1264.6 L972.4,1256.3 L972.7,1247.0 L975.1,1238.8 L977.6,1229.3 L975.6,1220.8 L977.6,1212.1 L977.9,1203.8 L980.1,1195.5 L979.5,1185.9 L980.1,1174.4 L982.1,1168.7 L982.5,1158.1 L986.5,1148.9 L984.0,1141.6 L988.6,1131.8 L986.3,1123.6 L990.9,1114.4 L990.1,1106.6 L992.2,1095.3 L993.0,1087.8 L994.2,1076.6 L993.8,1068.5 L994.4,1060.6 L996.5,1049.4 L996.1,1043.5 L996.5,1031.4 L999.8,1022.5 L1000.0,1016.8 L998.9,1007.1 L1000.4,996.2 L1004.4,988.8 L1006.1,978.1 L1003.6,969.2 L1007.5,960.0 L1007.6,953.4 L1006.2,945.7 L1010.7,936.8 L1010.2,924.0 L1010.5,916.0 L1012.5,908.2 L1014.5,899.5 L1014.2,889.3 L1012.9,879.8 L1017.0,870.2 L1016.0,861.3 L1019.7,856.1 L1020.2,846.1 L1021.6,838.3 L1019.9,826.2 L1019.9,816.5 L1023.7,807.3 L1024.0,801.3 L1024.2,792.5 L1026.0,782.5 M961.3,1319.0 L959.3,1308.5 L959.0,1299.8 L960.3,1290.8 L959.7,1280.9 L956.8,1272.4 L959.1,1263.5 L955.2,1253.5 L956.7,1244.6 L956.6,1235.4 L954.4,1229.3 L955.0,1216.9 L954.4,1211.1 L952.8,1201.2 L951.6,1191.4 L952.4,1181.0 L950.4,1174.8 L950.2,1163.2 L949.5,1156.6 L948.6,1144.0 L950.6,1137.8 L947.1,1128.0 L949.8,1117.2 L946.2,1110.7 L947.9,1101.4 L944.3,1089.5 L943.7,1082.0 L945.9,1073.6 L944.7,1064.3 L944.2,1056.1 L944.1,1046.5 L941.9,1037.0 L939.7,1026.3 L942.0,1019.4 L938.3,1009.4 L941.4,1000.4 L939.8,990.7 L940.0,982.6 L936.4,973.7 L936.9,965.9 L935.3,954.0 L935.6,943.7 L935.7,937.4 L932.5,929.6 L934.5,917.0 L931.2,908.0 L933.5,899.8 L931.1,892.3 L933.1,882.9 L932.3,874.4 L930.7,864.5 L928.3,853.2 L929.0,846.8 L927.2,835.1 L927.7,826.5 L925.3,818.3 L927.0,807.1 L927.7,801.8 L924.9,789.3 L922.7,781.7 L922.3,771.1 L923.4,763.5 M1310.2,774.4 L1309.8,765.5 L1310.9,757.6 L1310.3,746.1 L1311.1,740.1 L1310.8,729.3 M1244.7,762.9 L1251.9,755.4 L1259.5,750.7 L1264.0,742.5 L1273.9,733.9 L1282.2,727.7 L1287.2,721.8 M1310.8,729.3 L1299.3,726.1 L1287.2,721.8 M1310.8,775.2 L1318.7,776.1 L1327.4,779.5 L1340.7,782.8 L1347.4,784.4 L1356.6,785.5 L1366.7,789.2 L1375.1,791.1 L1385.7,791.3 M1385.7,791.3 L1381.8,784.5 L1375.1,775.8 L1366.9,769.1 L1362.0,759.2 L1359.0,752.7 L1353.5,743.7 L1344.2,734.4 L1341.5,725.4 L1335.1,718.5 M1335.1,718.5 L1333.2,717.9 M1310.8,729.3 L1320.8,723.5 L1333.2,717.9 M1193.8,779.8 L1195.4,766.8 L1196.1,758.0 L1194.0,746.0 M1194.0,746.0 L1201.8,739.4 L1208.2,731.0 L1214.0,725.2 L1220.7,718.2 L1227.2,709.8 L1236.6,702.1 L1242.2,694.2 M1242.2,694.2 L1255.0,694.9 L1264.5,697.4 L1276.8,696.2 M1287.2,721.8 L1282.2,715.3 L1281.4,703.4 L1276.8,696.2 M1196.4,448.9 L1210.7,444.2 M1196.4,448.9 L1188.2,442.8 L1177.0,441.8 L1168.5,434.7 L1161.5,434.7 L1152.5,428.5 M1210.7,444.2 L1210.8,436.3 L1209.9,424.6 L1209.7,415.0 L1210.5,406.3 L1214.7,397.5 L1211.1,387.6 L1213.5,382.0 L1214.4,372.6 L1213.4,363.4 L1214.9,353.5 M1152.5,428.5 L1154.7,418.0 L1159.6,410.5 L1161.9,403.3 L1164.3,391.0 L1163.4,384.9 L1169.6,372.7 L1171.8,364.6 L1172.8,358.1 L1175.4,347.3 L1175.6,340.0 L1180.5,328.7 L1180.6,320.6 L1183.5,313.9 L1185.7,300.8 L1191.2,295.8 L1192.3,283.3 L1195.3,275.9 M1195.3,275.9 L1196.8,286.6 L1199.2,294.2 L1204.5,303.9 L1204.9,313.3 L1206.2,322.8 L1210.3,335.4 L1210.3,345.1 L1214.9,353.5 M1265.6,440.2 L1270.6,431.2 M1270.6,431.2 L1265.4,425.4 L1261.3,414.5 L1252.3,407.5 L1248.7,402.0 L1244.0,392.9 L1238.8,382.9 L1233.0,376.3 L1225.9,371.0 L1219.7,359.1 L1214.9,353.5 M1221.8,449.9 L1210.7,444.2 M1187.2,65.1 L1186.4,72.6 L1188.1,83.2 L1188.2,91.7 L1189.9,103.4 L1186.9,111.4 L1187.2,118.6 L1189.9,128.7 L1189.9,138.4 L1192.2,149.3 L1190.5,154.8 L1190.2,164.0 L1189.8,176.4 L1192.9,183.5 L1193.4,192.9 L1190.3,203.9 L1193.3,213.5 L1192.3,218.9 L1195.1,229.8 L1194.4,240.4 L1196.2,247.3 L1193.2,257.7 L1194.2,268.1 L1195.3,275.9 M1133.3,440.3 L1144.4,434.4 L1152.5,428.5 M1297.6,418.6 L1290.0,422.4 L1281.1,426.0 L1270.6,431.2 M1233.9,502.0 L1224.3,504.1 L1209.9,503.6 L1198.6,502.4 M1196.4,448.9 L1190.1,460.7 L1188.4,469.8 L1182.7,478.5 M1198.6,502.4 L1193.0,493.6 L1190.1,485.2 L1182.7,478.5 M1147.1,484.1 L1150.0,485.9 M1150.0,485.9 L1162.2,483.9 L1173.4,480.8 L1182.7,478.5 M1722.1,588.9 L1711.5,590.8 L1702.7,594.8 L1696.1,593.7 L1685.3,595.1 L1676.6,598.4 M1720.3,658.3 L1710.2,652.8 L1704.4,645.7 L1695.1,641.1 L1688.9,634.7 L1681.3,632.3 L1671.8,625.3 M1671.8,625.3 L1673.2,616.1 L1673.9,606.1 L1676.6,598.4 M1661.5,547.9 L1659.3,558.6 L1660.2,567.4 L1658.0,575.2 M1658.0,575.2 L1665.4,583.6 L1669.8,589.1 L1676.6,598.4 M1629.2,816.6 L1627.4,809.0 L1622.2,799.6 L1622.0,788.4 L1619.7,781.6 L1614.0,771.5 L1615.2,765.5 L1612.2,758.0 L1609.3,745.6 L1605.1,740.5 L1603.4,731.0 L1598.3,719.4 L1597.9,710.6 L1594.2,704.1 M1629.2,816.6 L1631.5,807.7 L1633.4,799.1 L1637.0,789.5 L1638.9,781.5 L1639.4,771.2 L1639.4,763.5 L1641.0,751.1 L1646.4,742.3 L1645.8,736.7 L1650.0,725.7 L1651.2,717.0 L1654.4,708.6 L1652.8,699.5 L1657.6,688.3 L1658.2,679.6 L1659.8,670.8 L1661.5,663.6 L1665.8,652.4 L1665.3,643.1 L1667.3,637.1 L1670.6,626.5 M1594.2,704.1 L1599.3,696.0 L1601.1,688.2 L1604.1,680.2 L1604.8,668.0 L1609.2,662.3 L1613.0,652.6 L1614.8,643.5 L1618.7,635.2 M1670.6,626.5 L1661.1,628.4 L1651.8,629.6 L1638.8,633.8 L1630.5,635.4 L1618.7,635.2 M1660.3,992.2 L1658.5,984.2 L1656.9,972.0 L1655.0,962.8 L1654.1,956.8 L1652.7,945.7 L1650.8,937.2 L1648.2,928.6 L1645.4,917.4 L1645.7,911.0 L1644.0,899.9 L1643.4,889.3 L1640.3,880.8 L1637.2,873.6 L1637.5,862.5 L1635.4,854.3 L1634.3,845.3 L1632.4,835.2 L1630.5,825.6 L1629.2,816.6 M1671.8,625.3 L1670.6,626.5 M1703.8,-242.9 L1703.0,-232.2 L1700.2,-225.1 L1697.2,-215.9 L1694.7,-207.1 L1689.4,-197.3 L1688.2,-190.3 L1686.2,-181.6 L1683.4,-173.4 L1679.6,-163.0 L1676.7,-157.5 L1676.6,-146.6 L1673.1,-139.4 L1672.0,-128.8 L1668.4,-120.9 L1663.5,-113.8 L1662.6,-103.2 L1658.5,-95.2 L1657.7,-86.0 L1653.1,-78.1 L1653.4,-69.3 L1648.6,-61.1 L1648.8,-51.6 L1646.1,-42.7 L1642.6,-36.2 L1639.5,-23.8 L1637.5,-18.8 L1634.1,-10.2 L1629.7,1.3 L1629.1,8.7 L1627.3,19.0 L1622.4,27.4 L1621.5,32.8 L1618.0,44.6 L1617.3,53.3 L1614.6,60.6 L1609.9,71.5 L1609.4,78.3 L1605.6,88.4 L1602.9,96.9 L1601.1,103.7 L1599.5,114.8 L1593.5,122.5 L1593.8,129.7 L1591.5,138.2 L1586.8,148.2 L1583.3,158.7 L1580.6,165.1 L1579.0,173.7 L1575.5,182.4 L1575.6,193.0 L1571.5,200.9 L1568.6,208.7 L1568.3,216.1 L1563.1,224.8 L1562.4,236.5 L1556.5,245.2 L1556.9,251.7 L1551.7,258.7 L1553.0,269.4 L1546.3,276.4 L1544.2,285.1 L1541.6,296.1 L1538.7,306.0 L1537.9,312.9 M1661.5,408.2 L1648.7,419.7 M1648.7,419.7 L1639.9,426.0 L1629.8,429.4 L1623.1,433.4 L1614.0,437.2 L1603.2,442.8 L1595.4,445.9 L1588.0,449.6 L1579.7,454.1 L1572.7,458.8 L1562.0,464.1 M1537.9,312.9 L1538.1,320.0 L1535.6,329.0 L1535.5,341.0 L1534.4,349.1 L1529.9,358.3 L1532.3,369.1 L1530.4,375.9 L1526.7,384.6 L1526.1,393.4 L1524.1,403.0 L1524.4,411.0 L1523.7,421.3 M1562.0,464.1 L1556.9,458.2 L1551.4,450.5 L1543.7,440.8 L1537.1,436.8 L1531.7,429.0 L1523.7,421.3 M1188.1,661.4 L1194.5,654.7 L1204.2,652.4 M1188.0,732.4 L1189.3,724.1 L1186.0,711.0 L1189.5,701.3 L1188.2,691.0 L1187.8,683.1 L1185.9,670.3 L1188.1,661.4 M1194.0,746.0 L1188.0,732.4 M1242.2,694.2 L1240.1,683.7 L1238.5,669.4 L1236.3,659.8 M1204.2,652.4 L1214.2,653.5 L1226.1,656.1 L1236.3,659.8 M1236.2,503.8 L1231.4,515.1 L1227.9,524.6 L1224.2,530.1 L1221.5,539.4 L1220.5,549.7 L1214.9,560.3 M1198.6,502.4 L1193.1,509.5 L1189.9,518.9 L1182.2,525.9 L1178.9,533.0 L1172.1,539.2 M1214.9,560.3 L1205.8,557.6 L1196.2,551.8 L1188.6,547.2 L1181.8,545.2 L1172.1,539.2 M1150.0,485.9 L1150.9,496.6 L1152.9,502.4 L1156.0,514.9 L1160.9,523.4 L1159.4,529.6 L1163.7,540.0 M1172.1,539.2 L1163.7,540.0 M1108.6,517.1 L1114.5,524.0 L1123.1,525.4 L1131.6,529.8 L1139.4,538.5 L1148.0,540.7 L1154.6,546.5 M1163.7,540.0 L1154.6,546.5 M1033.6,579.2 L1042.7,583.5 L1052.6,585.9 L1060.5,590.7 M1060.5,590.7 L1070.6,584.8 L1077.9,582.2 L1084.1,579.2 L1093.6,573.9 L1103.4,573.1 L1112.7,569.5 L1118.2,566.2 L1126.3,560.6 L1137.7,555.5 L1143.3,552.4 L1153.1,549.7 M1154.6,546.5 L1153.1,549.7 M1273.4,565.1 L1269.4,561.7 M1273.4,565.1 L1273.4,574.9 L1275.0,586.0 L1275.4,593.9 M1269.4,561.7 L1257.2,561.1 L1250.4,560.6 L1237.9,562.7 L1227.0,563.3 L1217.1,563.9 M1275.4,593.9 L1265.2,600.0 L1254.0,609.5 L1246.5,614.1 M1246.5,614.1 L1239.2,612.1 L1229.9,606.9 L1220.8,604.6 L1211.8,599.7 M1217.1,563.9 L1214.6,577.1 L1212.7,586.8 L1211.2,598.8 M1211.8,599.7 L1211.2,598.8 M1266.6,522.8 L1266.6,531.5 L1266.4,541.7 L1268.2,552.5 L1269.4,561.7 M1266.6,522.8 L1257.7,518.5 L1253.7,512.2 L1243.9,504.3 M1214.9,560.3 L1217.1,563.9 M1236.3,659.8 L1244.6,651.5 L1253.2,644.7 M1253.2,644.7 L1251.0,634.1 L1250.0,624.8 L1246.5,614.1 M1204.2,652.4 L1207.3,641.8 L1205.3,631.3 L1210.0,622.2 L1211.7,608.8 L1211.8,599.7 M1159.8,604.5 L1159.1,595.7 L1158.6,584.3 L1155.0,577.1 L1154.5,569.8 L1155.3,560.1 L1153.1,549.7 M1159.8,604.5 L1169.5,604.0 L1181.1,601.4 L1189.9,600.4 L1202.2,600.6 L1211.2,598.8 M1136.3,633.5 L1142.6,625.3 L1147.2,620.0 L1152.8,610.1 L1159.8,604.5 M1188.1,661.4 L1179.8,658.6 L1172.8,650.8 L1160.7,645.4 L1153.0,642.5 L1147.0,636.6 L1136.3,633.5 M1133.5,634.3 L1123.8,632.3 L1112.6,629.5 L1100.0,624.0 M1133.5,634.3 L1132.3,646.0 L1134.5,654.8 L1133.9,667.2 L1130.5,676.4 L1130.6,687.6 M1100.0,624.0 L1096.5,632.7 L1094.0,641.9 L1088.3,650.7 L1084.9,659.7 L1083.5,667.2 L1081.0,680.5 L1076.6,687.6 M1076.6,687.6 L1084.0,691.0 L1092.1,692.2 L1102.1,694.8 L1111.7,700.0 M1111.7,700.0 L1119.0,693.1 L1130.6,687.6 M1136.3,633.5 L1133.5,634.3 M1060.5,590.7 L1067.9,598.2 L1077.1,603.6 L1084.1,610.3 L1090.5,616.5 L1100.0,624.0 M1188.0,732.4 L1180.3,728.6 L1175.8,722.5 L1166.3,717.5 L1157.2,708.3 L1151.1,703.6 L1146.2,700.9 L1137.4,694.8 L1130.6,687.6 M1063.9,694.1 L1076.6,687.6 M1068.9,1043.7 L1069.3,1036.0 L1071.1,1025.4 L1072.6,1014.9 L1073.8,1009.0 L1075.1,997.5 L1075.1,987.6 L1074.8,981.3 L1079.0,969.5 L1078.2,963.5 L1081.2,953.9 L1082.0,943.6 L1081.2,934.8 L1085.4,924.9 L1084.3,916.1 L1086.2,908.7 L1089.0,899.6 L1088.0,888.0 L1089.6,882.5 L1091.8,873.8 L1089.4,861.3 L1093.7,855.3 L1094.4,843.6 L1096.0,834.8 L1097.8,827.5 L1096.7,818.8 L1096.7,807.1 L1097.1,797.9 L1098.6,792.3 L1101.3,781.0 L1100.7,770.7 L1102.9,763.4 L1106.1,753.9 L1108.2,743.1 L1106.3,734.7 L1109.1,727.5 L1108.1,719.4 L1110.8,707.0 L1111.7,700.0 M1276.0,470.5 L1284.5,472.9 L1295.4,479.0 L1303.8,481.0 L1311.8,486.6 M1324.4,424.1 L1324.2,431.8 L1327.3,444.2 L1329.2,453.3 L1329.8,462.9 M1329.8,462.9 L1323.4,468.9 L1319.5,479.2 L1311.8,486.6 M1266.6,522.8 L1277.1,518.4 L1286.3,518.1 L1295.7,513.7 L1304.9,509.2 M1304.9,509.2 L1312.6,495.4 M1311.8,486.6 L1312.6,495.4 M1618.7,635.2 L1614.4,623.8 L1608.1,616.3 L1606.9,608.5 L1599.9,599.4 L1597.1,588.9 M1658.0,575.2 L1646.1,578.8 L1638.3,579.3 L1626.1,580.9 L1619.0,582.4 L1608.7,587.1 L1597.2,588.9 M1597.2,588.9 L1597.1,588.9 M1640.9,528.1 L1630.1,527.3 L1617.7,525.4 L1605.0,526.6 M1597.2,588.9 L1598.8,576.9 L1597.7,570.3 L1601.6,557.3 L1600.3,547.7 L1602.1,536.5 L1605.0,526.6 M1648.7,419.7 L1645.8,428.7 L1639.9,436.4 L1635.6,441.2 L1630.7,452.2 L1625.3,457.2 L1622.8,466.5 L1615.1,473.5 L1610.9,481.8 L1606.7,490.2 L1600.9,499.7 L1599.1,504.7 L1592.9,514.5 M1605.0,526.6 L1592.9,514.5 M1537.9,312.9 L1534.5,319.8 L1525.8,327.8 L1522.7,333.5 L1515.4,342.7 L1509.7,348.6 L1507.1,354.9 L1501.8,366.3 L1493.9,372.1 L1489.5,379.0 L1484.0,388.2 L1480.3,392.4 L1475.3,401.1 L1469.0,407.0 L1464.2,414.4 L1455.5,422.5 L1452.1,429.9 M1523.7,421.3 L1519.1,430.0 L1510.8,436.1 L1506.7,441.4 L1500.5,450.8 M1500.5,450.8 L1484.2,453.7 M1484.2,453.7 L1474.8,446.5 L1470.3,442.9 L1460.1,434.2 L1452.1,429.9 M1422.4,408.6 L1410.3,410.2 L1399.4,411.0 L1386.5,409.0 M1422.4,408.6 L1427.6,416.3 L1433.0,424.0 L1439.0,430.9 M1439.0,430.9 L1433.7,440.7 L1430.9,449.3 L1421.8,455.4 L1418.6,466.4 M1386.5,409.0 L1377.8,422.2 M1377.8,422.2 L1380.1,433.6 L1383.0,441.8 L1387.1,450.3 L1387.6,459.4 M1387.6,459.4 L1398.4,462.2 L1406.3,463.5 L1418.6,466.4 M1664.4,-313.0 L1661.4,-302.8 L1656.5,-296.5 L1656.0,-287.4 L1652.9,-279.1 L1648.7,-269.6 L1647.3,-263.4 L1644.1,-252.1 L1643.1,-242.6 L1639.4,-234.5 L1635.6,-226.5 L1633.6,-217.2 L1631.5,-211.9 L1628.7,-202.9 L1624.4,-194.2 L1620.9,-185.5 L1620.4,-177.3 L1616.8,-165.0 L1612.6,-158.4 L1608.3,-148.5 L1607.7,-139.6 L1602.6,-130.8 L1600.0,-123.9 L1599.6,-114.9 L1597.1,-104.8 L1593.6,-99.7 L1589.0,-91.1 L1587.0,-83.2 L1584.2,-73.7 L1581.1,-64.9 L1577.7,-54.1 L1573.9,-48.7 L1574.0,-36.1 L1570.6,-31.0 L1567.5,-19.3 L1561.4,-11.0 L1559.7,-4.2 L1556.7,3.9 L1556.6,15.4 L1552.8,22.1 L1547.2,28.8 L1544.8,39.7 L1543.9,47.1 L1538.8,57.2 L1537.5,64.4 L1534.5,73.6 L1530.6,81.3 L1529.6,89.4 L1525.5,101.5 L1524.9,108.9 L1521.0,115.3 L1517.2,125.6 L1515.9,134.2 L1509.9,144.1 L1508.5,149.1 L1506.3,160.3 L1505.0,167.2 L1499.6,177.5 L1497.6,184.3 L1496.2,194.3 L1493.6,200.7 L1487.9,209.5 L1487.8,221.7 L1482.4,230.3 L1481.1,238.6 L1478.5,243.3 L1473.0,254.1 L1471.1,264.5 L1470.5,270.9 L1465.9,279.1 L1464.3,287.3 L1459.4,299.0 L1455.9,304.0 L1454.2,315.1 L1452.7,321.8 L1447.5,330.6 L1447.4,341.4 L1442.5,350.5 L1438.7,357.2 L1437.9,365.3 L1435.9,372.4 L1429.7,381.2 L1428.6,389.6 L1423.4,398.2 L1422.4,408.6 M1357.6,316.5 L1361.9,327.7 L1365.2,335.4 L1365.3,345.7 L1370.3,352.5 L1371.3,361.1 L1375.2,373.2 L1376.9,380.3 L1380.0,390.3 L1385.8,400.8 L1386.5,409.0 M1452.1,429.9 L1439.0,430.9 M1484.2,453.7 L1476.8,461.2 L1472.8,471.3 L1465.5,480.1 L1461.5,490.7 M1461.5,490.7 L1451.1,486.6 L1441.8,481.8 L1431.6,477.6 L1421.5,472.0 M1421.5,472.0 L1418.6,466.4 M1325.1,423.5 L1333.9,421.2 L1344.1,420.9 L1355.0,421.9 L1369.4,421.7 L1377.8,422.2 M1370.3,472.3 L1361.5,468.9 L1348.5,469.7 L1341.6,465.6 L1329.8,462.9 M1370.3,472.3 L1378.9,467.4 L1387.6,459.4 M1437.5,629.2 L1425.7,628.4 L1413.2,624.4 L1403.0,620.7 M1448.7,671.2 L1443.8,662.6 L1442.8,651.9 L1438.8,639.7 L1437.5,629.2 M1448.7,671.2 L1439.4,669.9 L1431.0,668.9 L1423.1,667.4 L1412.0,663.5 L1403.8,661.3 L1396.2,659.6 L1386.1,660.2 M1386.1,660.2 L1390.9,648.9 L1395.2,640.3 L1397.1,631.2 L1403.0,620.7 M1415.6,583.0 L1427.9,582.3 L1441.7,582.9 M1450.7,612.6 L1449.5,602.4 L1444.1,594.3 L1441.7,582.9 M1450.7,612.6 L1443.8,621.0 L1437.5,629.2 M1415.6,583.0 L1409.9,588.0 L1402.5,597.6 L1396.4,604.4 M1403.0,620.7 L1396.4,604.4 M1469.9,664.9 L1458.4,670.0 L1449.6,672.1 M1469.9,664.9 L1480.5,668.0 L1493.0,672.2 L1502.3,674.7 M1449.6,672.1 L1448.6,683.8 L1445.8,691.9 L1446.0,700.9 L1445.6,712.7 L1443.2,718.3 L1440.8,730.4 L1442.1,739.7 L1439.2,750.7 L1438.7,758.5 M1502.3,674.7 L1505.4,682.5 L1505.6,691.1 L1504.6,703.8 L1507.9,711.3 L1505.0,718.4 L1508.2,726.9 L1509.7,738.8 L1510.3,748.7 L1509.4,754.5 L1512.4,763.4 L1511.4,773.3 L1512.9,785.2 L1514.4,793.1 L1516.8,799.8 L1517.5,808.8 L1519.3,821.2 L1517.2,827.1 L1520.7,836.0 L1518.0,845.0 L1519.3,855.2 L1523.1,863.1 L1523.5,875.5 L1523.2,881.2 L1523.7,893.3 L1525.0,901.1 L1527.0,909.6 L1529.5,917.6 L1529.9,926.9 L1529.4,936.9 M1438.7,758.5 L1440.6,767.3 L1444.4,776.0 L1445.8,787.0 L1449.5,795.7 L1453.8,805.5 L1455.0,814.8 L1455.8,826.7 L1460.1,835.3 M1460.1,835.3 L1464.2,843.6 L1469.6,849.8 L1477.1,858.4 L1482.9,867.5 L1488.0,874.2 L1491.3,882.8 L1497.0,888.9 L1500.7,896.6 L1507.8,904.9 L1514.5,913.8 L1516.8,919.7 L1522.0,928.2 L1529.4,936.9 M1490.6,616.3 L1487.7,626.8 L1483.1,635.6 L1476.7,647.2 L1475.6,654.4 L1469.9,664.9 M1490.6,616.3 L1480.9,613.6 L1470.3,612.4 L1459.0,611.8 L1450.7,612.6 M1448.7,671.2 L1449.6,672.1 M1382.7,699.2 L1381.8,688.1 L1380.0,678.0 L1379.2,664.4 M1382.7,699.2 L1387.1,707.5 L1396.8,711.7 L1403.2,717.4 L1405.7,724.0 L1414.5,731.7 L1421.6,738.9 L1428.2,745.0 L1431.3,751.6 L1438.7,758.5 M1379.2,664.4 L1386.1,660.2 M1565.1,671.3 L1554.1,668.2 L1546.3,667.4 L1536.6,664.7 L1524.8,660.3 M1594.2,704.1 L1587.8,694.0 L1578.4,686.6 L1573.9,678.7 L1565.1,671.3 M1656.6,1160.9 L1652.5,1154.8 L1646.5,1146.0 L1643.1,1135.9 L1637.9,1130.6 L1633.3,1121.0 L1627.2,1112.1 L1625.0,1103.4 L1621.4,1095.3 L1614.9,1091.1 L1612.6,1080.5 L1608.7,1074.6 L1600.1,1062.8 L1595.5,1058.6 L1591.0,1046.7 L1588.8,1042.0 L1585.3,1035.1 L1579.4,1024.7 L1574.0,1018.4 L1568.5,1007.2 L1564.3,1001.9 L1562.5,992.5 L1555.6,984.8 L1550.2,975.8 L1546.0,970.9 L1542.7,962.9 L1537.1,952.4 L1534.0,947.1 L1529.4,936.9 M1524.8,660.3 L1512.0,669.6 L1502.3,674.7 M1335.1,718.5 L1346.2,716.5 L1353.2,711.1 L1365.1,707.9 L1373.8,702.7 L1382.7,699.2 M1385.7,791.3 L1392.9,797.0 L1402.1,799.4 L1412.2,804.1 L1418.6,811.8 L1429.2,816.5 L1433.7,822.3 L1443.1,826.6 L1453.7,831.0 L1460.1,835.3 M1546.7,559.4 L1538.9,564.9 L1531.4,573.6 L1525.5,582.2 L1521.5,585.9 L1513.6,592.9 L1506.6,601.9 M1546.7,559.4 L1554.1,565.6 L1563.7,570.4 L1572.2,576.6 L1581.1,583.5 L1590.4,589.5 M1563.5,619.2 L1556.3,618.9 L1546.4,613.4 L1536.8,615.0 L1528.0,613.3 L1515.5,607.5 L1507.3,607.7 M1563.5,619.2 L1571.9,610.0 L1577.6,603.2 L1585.0,596.6 L1590.4,589.5 M1506.6,601.9 L1506.5,607.0 M1506.5,607.0 L1507.3,607.7 M1565.1,671.3 L1563.4,659.7 L1563.0,650.1 L1562.7,637.9 L1565.7,629.6 L1563.5,619.2 M1524.8,660.3 L1522.9,650.7 L1517.4,644.3 L1515.7,634.9 L1511.7,624.7 L1508.6,615.7 L1507.3,607.7 M1597.1,588.9 L1590.4,589.5 M1481.9,569.0 L1489.7,579.4 L1493.4,586.3 L1499.1,593.1 L1506.6,601.9 M1481.9,569.0 L1471.0,569.9 L1462.1,569.6 L1453.5,569.5 M1453.5,569.5 L1441.7,582.9 M1490.6,616.3 L1497.4,612.7 L1506.5,607.0 M1545.2,551.8 L1536.2,546.5 L1528.7,543.8 L1520.7,540.3 L1511.9,536.2 L1506.8,531.4 L1497.8,525.4 M1545.2,551.8 L1550.3,545.6 L1557.2,537.7 L1562.1,527.5 L1566.3,521.3 L1570.6,512.2 M1554.2,489.0 L1543.4,487.8 L1533.0,492.3 L1521.2,490.7 M1554.2,489.0 L1559.6,495.4 L1564.7,503.7 L1570.6,512.2 M1521.2,490.7 L1515.4,498.1 L1508.4,507.3 L1503.4,512.1 L1496.4,521.6 M1496.4,521.6 L1497.8,525.4 M1546.7,559.4 L1545.2,551.8 M1481.9,569.0 L1483.7,562.1 L1488.8,549.9 L1493.3,544.2 L1495.0,534.0 L1497.8,525.4 M1592.9,514.5 L1581.1,513.9 L1570.6,512.2 M1562.0,464.1 L1558.1,478.6 L1554.2,489.0 M1500.5,450.8 L1507.2,460.3 L1509.6,470.1 L1517.0,481.2 L1521.2,490.7 M1468.3,509.2 L1476.4,513.1 L1487.2,517.1 L1496.4,521.6 M1461.5,490.7 L1463.2,498.9 L1468.3,509.2 M1438.4,533.3 L1441.9,544.1 L1446.7,551.2 L1451.6,561.6 L1453.5,569.5 M1468.3,509.2 L1460.5,513.6 L1451.7,522.2 L1445.3,527.4 L1438.4,533.3 M1421.5,472.0 L1417.9,482.5 L1416.4,492.1 L1414.0,499.9 L1409.9,508.2 M1438.4,533.3 L1427.2,532.1 M1409.9,508.2 L1417.7,517.6 L1423.2,526.1 L1427.2,532.1 M1370.3,472.3 L1372.4,482.5 L1371.4,493.1 L1368.3,502.5 L1370.0,514.9 M1409.9,508.2 L1397.8,512.0 L1391.8,510.3 L1382.0,513.1 L1370.0,514.9 M1415.6,583.0 L1414.0,570.9 L1406.8,561.0 L1404.4,552.9 M1427.2,532.1 L1420.7,539.3 L1413.9,545.5 L1404.4,552.9 M1312.6,495.4 L1321.8,500.4 L1328.5,502.5 L1340.3,508.9 L1346.5,513.2 L1354.0,519.4 L1364.2,522.9 M1370.0,514.9 L1364.2,522.9 M1396.4,604.4 L1385.2,602.7 L1376.3,595.2 L1363.3,593.9 M1404.4,552.9 L1392.1,552.6 L1380.6,548.8 L1370.6,547.1 M1363.3,593.9 L1364.9,585.2 L1364.7,575.4 L1365.5,565.8 L1371.2,557.6 L1370.6,547.1 M1273.4,565.1 L1283.8,561.3 L1295.9,560.7 L1303.9,557.6 L1314.2,554.6 M1304.9,509.2 L1306.2,518.6 L1307.6,524.9 L1312.1,537.0 L1313.0,544.8 L1314.9,553.4 M1314.2,554.6 L1314.9,553.4 M1364.2,522.9 L1363.7,536.3 M1314.9,553.4 L1324.3,549.7 L1336.0,544.7 L1342.1,541.1 L1353.8,540.8 L1363.7,536.3 M1363.7,536.3 L1370.6,547.1 M1360.2,657.7 L1359.9,648.1 L1356.3,637.9 L1352.2,628.8 L1352.1,619.3 L1350.9,612.1 L1348.0,601.9 M1360.2,657.7 L1351.3,661.9 L1340.3,664.9 L1332.1,668.6 L1323.8,669.6 M1323.8,669.6 L1312.8,664.8 L1300.4,659.1 M1305.6,617.0 L1304.2,628.3 L1299.9,635.5 L1301.2,644.9 L1298.2,654.6 M1305.6,617.0 L1316.8,611.8 L1324.7,607.7 L1334.2,600.3 M1298.2,654.6 L1300.4,659.1 M1334.2,600.3 L1348.0,601.9 M1379.2,664.4 L1368.6,661.5 L1360.2,657.7 M1363.3,593.9 L1348.0,601.9 M1333.2,717.9 L1330.6,709.9 L1331.5,700.1 L1329.0,688.9 L1326.8,678.0 L1323.8,669.6 M1276.8,696.2 L1282.7,689.1 L1287.0,676.6 L1292.7,669.6 L1300.4,659.1 M1253.2,644.7 L1262.0,648.1 L1273.3,646.5 L1281.5,649.8 L1290.0,653.1 L1298.2,654.6 M1275.4,593.9 L1284.5,600.4 L1289.1,604.3 L1297.3,610.3 L1305.6,617.0 M1314.2,554.6 L1317.2,563.1 L1320.9,572.8 L1325.0,579.9 L1329.7,590.7 L1334.2,600.3 M544.5,-692.9 L548.9,-684.2 L555.1,-676.3 L556.3,-665.1 L563.5,-656.0 L567.7,-648.4 L572.6,-635.3 L575.9,-628.3 M575.9,-628.3 L582.4,-622.2 L586.5,-611.7 L593.8,-607.3 L597.2,-599.6 L602.9,-590.8 L606.8,-586.1 L612.7,-574.9 L620.6,-568.6 L624.0,-562.5 L629.9,-555.8 L635.2,-549.1 L640.6,-541.4 L644.6,-533.8 L652.1,-526.4 L653.9,-519.3 L662.5,-509.9 L667.1,-501.8 L670.2,-496.5 L676.9,-488.6 L683.7,-480.4 L687.8,-474.3 L694.9,-467.4 L697.9,-459.1 L703.5,-451.3 L707.6,-445.8 L716.4,-437.5 L718.9,-428.4 L725.7,-421.6 L731.8,-415.3 L735.1,-407.3 L740.7,-400.8 L744.7,-390.8 L751.3,-384.6 L755.7,-379.1 L761.8,-371.5 L767.9,-363.2 L774.5,-357.0 L776.8,-347.0 L783.2,-341.1 L789.3,-331.4 L792.2,-327.3 L800.2,-320.5 L802.8,-310.4 L809.9,-303.9 L813.3,-296.2 L822.3,-287.2 L826.2,-283.1 L833.3,-272.7 L838.0,-265.7 L841.2,-257.9 L847.3,-251.8 L852.6,-244.6 M1491.3,226.2 L1485.7,221.4 L1475.1,214.1 L1467.3,211.0 L1461.9,204.5 L1452.3,200.0 L1448.2,197.6 L1437.6,190.4 L1431.9,185.1 L1424.0,178.2 L1416.5,176.9 L1407.4,168.2 L1400.6,164.2 L1392.4,160.0 L1385.2,156.2 L1380.2,150.2 L1370.7,145.9 L1362.8,138.6 L1355.1,132.6 L1348.2,127.8 L1342.6,125.2 L1331.5,117.1 L1327.3,115.0 L1318.5,110.9 L1308.6,101.7 L1301.6,99.2 L1296.2,95.4 L1286.6,90.1 L1279.3,82.1 L1272.1,77.4 L1263.3,70.9 L1256.0,67.5 L1251.6,63.9 L1243.4,56.1 L1234.0,51.3 L1229.2,46.7 L1218.6,41.2 L1212.8,35.4 L1203.4,32.3 L1199.5,28.7 L1190.2,24.0 L1184.4,17.1 L1175.5,10.1 L1167.7,4.9 L1158.3,3.6 L1154.4,-2.9 L1143.8,-10.3 L1137.5,-11.7 L1128.3,-21.1 L1124.3,-23.0 L1113.2,-29.4 L1106.1,-32.1 L1097.6,-38.7 L1090.1,-46.5 L1083.2,-50.5 L1075.4,-54.4 L1067.7,-60.2 L1062.7,-64.6 L1053.6,-69.1 L1047.3,-76.4 L1040.7,-79.6 L1031.6,-85.3 L1023.2,-88.4 L1014.8,-93.8 L1009.4,-101.4 L1003.9,-107.7 L994.2,-110.9 M852.6,-244.6 L860.7,-239.2 L865.0,-231.5 L872.8,-227.2 L878.4,-219.5 L887.7,-213.8 L892.0,-206.7 L899.6,-199.7 L905.6,-195.7 L915.4,-189.4 L918.2,-182.5 L925.7,-172.9 L931.4,-169.1 L940.0,-163.4 L948.4,-156.4 L952.7,-151.3 L961.7,-142.8 L967.8,-137.1 L973.1,-131.1 L980.1,-123.2 L985.6,-115.2 L994.2,-110.9 M1491.3,226.2 L1484.9,231.7 L1476.5,239.7 L1472.3,246.5 L1464.0,249.1 L1459.4,255.6 L1452.9,263.3 L1442.1,268.3 L1438.2,272.8 L1431.2,279.0 L1421.5,284.8 L1417.7,291.8 L1411.3,299.3 L1402.2,306.8 L1397.6,308.9 L1391.3,318.8 L1381.5,323.0 L1377.5,330.4 L1369.6,336.0 L1362.6,340.2 L1354.2,349.1 L1349.0,353.6 L1343.6,360.2 L1335.0,364.0 L1330.4,371.6 L1321.6,378.1 L1317.2,382.4 L1308.0,389.7 L1303.2,395.1 L1297.0,403.2 L1288.9,409.3 L1281.6,412.1 L1275.0,420.9 L1267.8,427.9 L1260.1,433.5 L1255.1,439.0 L1249.2,441.9 L1240.4,450.8 L1234.8,455.6 L1227.4,462.2 L1219.2,466.7 L1213.0,476.1 L1207.2,480.1 L1202.1,487.1 L1194.1,490.9 L1188.6,496.4 L1179.4,504.2 L1174.5,512.7 L1165.0,517.5 L1160.4,522.0 L1151.0,527.5 L1145.4,534.8 L1137.7,541.1 L1131.9,547.8 L1126.2,552.6 L1117.7,558.4 L1112.0,566.1 L1103.6,570.3 L1097.8,575.2 L1093.6,583.6 L1085.6,589.6 L1079.6,596.9 L1072.7,602.6 L1063.7,606.5 L1058.5,614.6 L1051.2,621.5 L1043.4,623.6 L1039.8,629.8 L1029.7,638.1 L1024.7,644.5 L1017.2,650.6 L1012.7,654.7 L1002.6,663.1 L996.2,668.4 L992.4,675.1 L984.7,678.7 L975.0,684.2 L970.1,691.3 L962.4,698.0 L956.7,704.6 L950.0,710.0 L942.1,715.2 L934.8,723.5 L931.6,729.1 L922.4,735.3 L915.4,741.8 L909.5,747.2 L903.8,750.5 L895.4,760.5 L887.0,764.0 L883.6,772.2 L874.6,778.0 L870.2,782.7 L861.9,788.9 M994.2,-110.9 L987.7,-104.3 L986.1,-97.4 L981.8,-88.5 L976.8,-80.3 L970.5,-72.7 L966.0,-63.3 L961.9,-55.4 L956.2,-50.4 L953.0,-38.8 L945.5,-31.4 L941.3,-25.6 L939.1,-18.0 L932.4,-11.0 L926.0,-2.8 L922.6,4.2 L916.6,15.9 L912.7,22.7 L908.5,28.1 L903.9,35.7 L900.9,44.1 L892.6,54.1 L890.9,61.9 L883.2,68.8 L882.3,75.6 L876.0,83.0 L869.3,93.4 L864.8,101.7 L859.3,108.0 L855.5,116.6 L852.8,124.0 L845.0,129.3 L842.3,137.7 L835.9,145.2 L830.6,156.5 L827.0,163.3 L822.0,170.5 L816.5,176.9 L812.2,185.4 L808.5,193.8 L806.3,199.6 L800.2,210.8 L793.4,219.3 L789.1,225.2 L784.4,230.7 L781.7,239.2 L777.1,250.5 L769.0,257.7 L764.2,264.4 L761.4,273.1 L756.7,279.7 M756.7,279.7 L758.0,290.1 L761.9,299.7 L763.6,306.6 L765.0,314.8 L764.6,325.5 L768.2,331.6 L767.5,344.0 L772.1,350.6 L774.7,360.9 L774.5,369.9 L777.5,376.0 L777.6,388.2 L779.3,396.1 L784.2,403.1 L784.3,415.2 L787.7,420.5 L786.6,430.7 L787.9,438.3 L791.0,448.2 L792.0,458.9 L794.2,469.4 L796.6,474.5 L801.2,486.1 L799.8,495.3 L804.0,504.3 L805.6,510.2 L808.4,521.1 L806.9,528.1 L811.9,539.5 L811.5,548.1 L812.0,556.7 L814.7,566.4 L819.5,574.3 L817.4,582.4 L823.3,590.5 L824.0,603.1 L824.4,612.2 L825.1,617.4 L827.9,629.6 L832.5,636.3 L834.0,645.4 L832.1,652.7 L838.2,663.1 L835.8,673.6 L839.8,681.1 L843.8,689.3 L844.2,697.8 L843.3,706.6 L845.8,719.6 L850.1,726.1 L848.9,734.3 L853.2,745.9 L855.9,751.6 L855.9,761.1 L857.9,769.1 L860.3,778.5 L861.9,788.9 M544.5,1215.8 L548.0,1207.7 L553.4,1199.6 L561.3,1192.7 L565.7,1184.9 L568.8,1175.5 L576.6,1170.5 L579.9,1160.6 L583.5,1155.2 L590.3,1144.9 L593.2,1137.0 L598.4,1131.9 L605.3,1124.0 L609.6,1113.9 L615.7,1107.4 L621.2,1098.5 L625.5,1091.2 L629.7,1086.7 L634.5,1075.7 L639.3,1067.5 L642.9,1063.7 L647.3,1054.0 L653.1,1047.7 L658.0,1039.4 L663.8,1030.3 L670.8,1022.5 L675.0,1017.1 L679.7,1009.0 L686.3,999.0 L687.6,990.1 L696.4,984.1 L699.2,975.1 L704.7,968.0 L709.2,961.4 M861.9,788.9 L854.7,797.0 L848.1,803.3 L841.7,811.6 L836.3,815.6 L833.0,823.7 L825.5,828.3 L821.2,836.1 L814.0,845.4 L808.0,850.6 L802.1,856.5 L796.9,863.3 L787.1,872.2 L782.4,880.5 L774.8,883.5 L772.3,892.6 L763.4,897.6 L758.5,904.2 L753.0,914.8 L744.6,919.1 L740.2,928.7 L733.2,935.2 L725.6,942.0 L721.3,946.4 L715.6,955.5 L709.2,961.4 M544.5,-692.9 L535.9,-685.4 L529.9,-682.4 L524.2,-674.0 L519.3,-667.4 L511.2,-659.6 L507.0,-652.9 L499.7,-650.5 L492.9,-643.9 L485.4,-637.8 L482.0,-628.5 L474.1,-623.3 L467.2,-615.4 L462.2,-611.3 L454.9,-604.7 L449.7,-596.0 L443.3,-590.3 L433.4,-585.9 L430.8,-579.2 L424.1,-573.1 L418.1,-565.7 L411.4,-560.2 L402.1,-553.1 L397.8,-547.6 L392.2,-541.9 L382.4,-536.6 L378.4,-530.9 L371.6,-521.4 L366.5,-516.4 L358.4,-510.7 L349.7,-503.8 L346.6,-497.8 L339.1,-490.7 L333.2,-485.4 L325.1,-480.3 L321.4,-472.6 L311.8,-464.4 L307.9,-459.5 L298.1,-453.3 L294.2,-446.7 L285.7,-440.2 L279.3,-432.6 L276.4,-429.7 L266.6,-420.8 L260.7,-415.2 L256.7,-409.6 L250.4,-404.4 L242.5,-395.8 L235.5,-388.3 L228.2,-384.9 L222.5,-377.6 L218.7,-371.8 L209.0,-365.4 L205.2,-359.9 L195.7,-350.6 L192.2,-344.2 L184.5,-337.3 L176.3,-331.2 L172.9,-325.3 L167.0,-318.6 L156.9,-312.9 L153.0,-306.9 L144.0,-301.1 L140.9,-295.5 L131.3,-290.7 L128.0,-284.1 L122.2,-274.7 L113.4,-271.6 L105.6,-263.7 L100.3,-257.4 L94.0,-251.6 L88.1,-246.5 L80.9,-237.9 L75.3,-233.0 L67.4,-227.5 L62.3,-220.2 L56.5,-213.4 L48.8,-205.6 L41.5,-198.9 L36.8,-195.0 L31.6,-189.9 L22.9,-180.2 L15.4,-173.2 L9.0,-170.6 L3.9,-164.5 L-1.5,-158.1 L-6.7,-151.0 L-15.6,-144.3 L-20.2,-138.7 L-28.1,-131.2 L-34.6,-126.5 L-39.0,-117.5 L-46.5,-113.8 L-55.4,-103.9 L-60.4,-100.3 L-68.3,-92.5 L-71.2,-89.0 L-79.8,-81.4 L-85.8,-72.2 L-94.1,-69.0 L-98.2,-62.0 L-104.9,-56.2 L-109.3,-48.8 L-116.3,-44.4 L-123.5,-36.4 L-128.9,-29.4 L-137.2,-24.2 L-144.1,-16.4 L-149.8,-11.4 L-157.9,-4.6 L-161.5,2.9 L-171.1,9.0 L-175.5,13.5 L-180.0,19.9 L-190.4,28.3 L-194.1,30.7 L-203.3,38.3 L-209.4,43.4 L-214.1,51.4 L-221.0,59.3 L-227.6,64.7 L-235.4,69.4 L-241.7,77.8 L-244.6,85.5 L-252.7,89.7 L-259.5,93.9 L-265.1,101.7 L-271.2,108.6 L-277.9,116.1 L-284.9,120.1 L-293.3,126.8 L-299.1,131.8 L-305.4,139.6 L-309.3,146.3 L-315.9,155.0 L-322.2,157.1 L-331.5,166.4 L-337.3,173.5 L-344.0,180.1 L-347.3,182.8 L-354.1,189.0 L-362.6,198.7 L-368.5,203.3 M-403.9,226.2 L-395.4,222.1 L-386.9,216.9 L-379.4,211.2 L-368.5,203.3 M575.9,-628.3 L575.5,-619.1 L572.2,-611.6 L568.8,-600.8 L565.8,-593.4 L566.2,-581.6 L563.2,-575.8 L561.5,-566.1 L559.6,-556.3 L556.0,-546.3 L554.3,-540.0 L551.5,-531.8 L550.4,-521.8 L546.7,-511.0 L545.4,-504.3 L542.1,-496.4 L540.3,-487.4 L541.2,-476.7 L539.5,-467.2 L534.5,-457.6 L533.5,-448.9 L528.8,-442.3 L528.0,-433.7 L527.5,-424.5 L522.4,-415.7 L522.0,-406.9 L519.6,-398.3 L520.1,-389.8 L514.4,-379.3 L515.5,-370.7 L511.0,-362.8 L510.0,-351.4 L505.9,-345.8 L505.4,-336.3 L504.2,-325.0 L498.9,-315.2 L498.8,-307.6 L498.7,-297.7 L494.1,-289.6 L492.0,-280.3 L489.5,-274.1 L487.6,-263.2 L487.5,-255.5 L485.8,-246.7 L481.5,-236.3 L479.7,-229.2 L477.6,-219.4 M477.6,-219.4 L475.2,-211.6 L471.3,-204.9 L466.3,-195.2 L460.4,-186.5 L456.8,-176.8 L453.9,-170.0 L449.6,-160.8 L445.9,-152.7 L443.4,-143.7 L439.7,-134.0 L435.7,-125.7 L430.9,-120.6 L427.6,-111.2 L421.9,-104.2 L418.3,-96.5 L417.5,-88.2 L412.9,-78.8 L407.8,-69.2 L403.1,-59.0 L398.8,-54.4 L397.7,-46.5 L393.8,-37.2 L388.5,-28.5 L383.8,-18.1 L381.4,-10.0 L376.8,-2.5 L374.3,5.2 L370.1,14.2 L364.3,24.1 L362.3,31.7 L356.9,39.0 L352.1,48.6 L348.7,54.7 L344.8,61.8 L342.2,71.5 L336.3,81.9 L334.0,87.9 L328.2,97.0 L325.8,107.0 L323.8,112.4 L316.6,124.1 L314.6,131.5 L312.6,139.7 L306.9,147.1 M306.9,147.1 L298.1,145.7 L288.0,147.4 L278.3,147.4 L270.8,150.8 L263.5,148.9 L254.0,152.2 L245.3,153.6 L233.9,152.4 L224.0,154.4 L217.3,154.2 L209.5,153.6 L200.7,156.3 L188.9,159.3 L178.8,156.9 L170.2,156.8 L164.2,157.5 L154.1,160.2 L143.8,161.7 L135.5,162.3 L128.4,161.8 L116.7,162.9 L110.4,166.2 L98.6,166.7 L89.5,163.8 L82.4,165.3 L72.9,165.9 L65.3,169.3 L57.1,170.2 L45.3,168.0 L36.7,171.4 L29.4,173.0 L20.8,171.3 L11.7,171.7 L2.8,173.5 L-9.3,176.4 L-18.2,173.4 L-25.7,176.4 L-34.5,178.7 L-43.8,177.1 L-51.9,178.5 L-63.3,178.7 L-71.4,179.2 L-78.2,180.8 L-90.8,180.1 L-98.6,181.1 L-105.5,182.6 L-114.3,183.0 L-125.9,182.2 L-133.4,185.3 L-142.0,187.4 L-151.9,187.3 L-160.3,188.5 L-170.0,186.0 L-179.0,189.3 L-186.9,189.8 L-197.6,189.5 L-206.4,189.7 L-216.0,192.5 L-225.7,191.3 L-231.7,194.7 L-241.0,193.9 L-252.1,194.1 L-258.6,196.2 L-268.0,196.0 L-278.3,197.1 L-287.0,198.0 L-297.0,199.1 L-306.6,201.3 L-315.9,200.2 L-324.8,201.6 L-331.1,202.5 L-339.6,200.9 L-349.9,203.6 M-368.5,203.3 L-357.2,201.4 L-349.9,203.6 M306.9,147.1 L311.5,156.4 L320.0,163.9 L323.2,168.3 L331.2,179.4 L335.4,185.1 L339.8,193.0 L348.8,201.1 L351.7,208.9 L359.5,215.7 M477.6,-219.4 L477.3,-211.1 L478.2,-203.1 L473.8,-192.4 L475.7,-181.5 L474.0,-172.0 L474.4,-163.5 L473.9,-153.1 L472.8,-146.2 L471.7,-136.9 L471.9,-128.7 L471.9,-118.6 L469.5,-110.5 L471.5,-100.4 L471.2,-91.5 L468.5,-80.5 L468.6,-73.2 L469.4,-65.1 L466.1,-55.4 L468.0,-46.2 L465.5,-37.0 L466.6,-25.0 L465.4,-18.5 L464.7,-9.6 L463.4,2.9 L461.5,9.8 L462.8,17.6 L461.1,30.1 L460.5,39.0 L459.1,47.4 L458.6,56.4 L458.1,65.3 L456.7,73.2 L458.3,82.1 L457.7,94.1 L454.6,101.8 L457.2,112.0 L457.3,118.7 L456.1,129.5 L455.6,137.4 L453.3,147.8 M453.3,147.8 L443.5,154.2 L435.7,158.0 L428.4,162.8 L422.3,171.2 L415.8,178.3 L406.8,181.8 L399.1,189.5 L391.6,193.7 L382.5,198.3 L376.8,205.6 L369.0,210.3 L359.5,215.7 M672.8,294.6 L669.9,302.5 L664.9,310.8 L660.5,320.9 L657.8,331.3 L654.7,339.9 L652.0,348.9 L647.9,358.3 L645.5,367.8 L640.7,377.3 L637.2,385.2 L637.7,393.6 L631.0,403.2 L629.1,411.3 M672.8,294.6 L666.3,287.3 L663.0,279.0 L657.7,273.7 L648.1,265.1 L642.6,257.2 L637.7,248.8 L631.6,243.4 L627.0,236.8 L622.0,226.5 L614.1,221.7 L608.7,213.0 L604.2,205.5 M629.1,411.3 L622.8,404.9 L618.4,398.1 L611.1,390.2 L606.5,380.4 L600.5,373.3 L594.4,367.2 L590.3,359.4 L583.2,353.7 L578.7,342.7 L574.0,335.5 L569.2,328.2 L563.3,319.7 L556.9,314.6 L549.7,305.6 L545.5,298.8 L538.7,293.8 L536.0,285.5 L530.3,276.8 L523.3,269.3 M604.2,205.5 L595.9,211.3 L588.1,214.7 L579.4,221.4 L570.9,224.1 L561.0,229.2 L552.3,236.8 L543.7,240.4 L535.0,244.3 M535.0,244.3 L529.7,252.7 L526.9,259.9 L523.3,269.3 M756.7,279.7 L745.3,279.2 L736.9,284.6 L727.6,286.3 L717.4,287.2 L710.5,287.7 L700.3,291.5 L691.9,292.6 L684.2,293.2 L672.8,294.6 M709.2,961.4 L707.4,952.1 L708.7,945.4 L706.0,933.7 L701.9,927.3 L700.8,914.5 L702.4,909.1 L701.8,898.8 L697.1,889.4 L697.5,880.7 L695.4,872.5 L694.9,862.7 L695.3,853.8 L690.8,846.1 L692.0,833.3 L690.8,824.6 L686.4,817.8 L688.4,807.2 L687.5,798.2 L684.6,790.2 L682.3,782.9 L680.8,770.6 L680.3,764.6 L676.9,754.2 L677.4,744.0 L675.4,737.1 L677.0,728.2 L675.8,718.9 L673.5,708.0 L670.2,701.2 L669.8,692.0 L668.5,681.8 L668.2,673.8 L665.7,662.8 L666.0,655.1 L665.2,645.2 L660.2,634.9 L660.9,625.9 L657.7,618.2 L659.3,609.3 L654.9,602.7 L656.5,593.5 L654.3,581.4 L650.6,574.0 L652.3,562.7 L649.1,556.1 L648.0,544.4 L645.3,537.5 L647.8,528.8 L645.0,518.6 L644.2,510.2 L640.4,502.6 L640.2,490.7 L640.8,485.3 L639.2,475.0 L637.1,466.7 L634.6,455.1 L633.8,447.3 L631.6,440.2 L631.0,430.4 L631.5,421.5 L629.1,411.3 M852.6,-244.6 L847.6,-235.3 L843.9,-227.1 L840.0,-222.6 L835.0,-211.6 L832.8,-204.1 L824.9,-195.6 L822.1,-187.4 L819.9,-180.2 L814.8,-175.4 L810.1,-166.4 L804.7,-157.3 L798.7,-151.9 L795.4,-141.2 L792.2,-133.0 L788.8,-125.6 L781.7,-118.2 L777.8,-111.9 L775.3,-103.7 L772.0,-95.2 L763.3,-85.3 L759.3,-77.7 L755.9,-69.1 L752.8,-64.9 L749.8,-57.1 L745.8,-48.0 L740.7,-41.1 L734.5,-30.7 L731.4,-22.4 L727.6,-16.9 L723.2,-7.8 L716.3,0.8 L714.0,10.1 L707.2,15.9 L704.3,24.5 L700.1,29.7 L695.6,38.7 L689.4,47.8 L688.3,54.9 L682.4,63.7 L676.6,71.3 L672.0,77.7 L671.6,86.2 L665.6,92.8 L659.2,104.5 L656.1,110.3 L650.0,117.1 L649.5,124.7 L644.1,133.2 L639.4,140.1 L635.1,148.7 L629.4,156.0 L625.7,165.7 L620.6,173.8 L617.1,180.2 L614.8,190.9 L608.8,197.7 L604.2,205.5 M453.3,147.8 L458.9,152.8 L463.6,163.1 L470.0,168.4 L475.8,173.2 L482.1,183.3 L487.2,187.4 L495.6,197.4 L498.1,200.8 L508.0,210.7 L509.6,217.4 L517.0,224.3 L521.9,229.9 L531.2,237.0 L535.0,244.3 M479.7,295.8 L468.6,292.4 L458.8,295.1 L452.5,292.1 L443.6,289.9 L434.3,287.1 L421.6,285.2 L414.0,285.9 L402.4,286.6 L394.8,282.3 L384.4,283.4 L376.5,282.3 L367.8,279.4 L357.6,277.4 M479.7,295.8 L478.3,303.0 L478.8,313.1 L476.9,325.1 L477.4,330.5 L474.8,340.3 L476.4,348.0 L473.4,357.2 L475.2,369.9 L472.9,376.9 L472.1,384.3 L472.6,395.1 L472.1,406.5 L471.6,411.6 L469.9,422.5 L469.2,430.6 L467.2,440.7 L467.6,450.1 L467.0,460.9 L465.7,469.3 L463.3,478.6 L462.5,488.0 L463.9,495.8 L461.3,505.9 L460.3,511.1 L459.3,521.5 L458.0,531.2 L458.5,539.9 L459.7,550.9 L458.1,558.8 L455.6,567.1 L457.4,577.7 L456.5,586.4 L456.3,592.5 L455.4,605.6 L454.7,614.1 L450.9,623.2 L452.2,631.9 L451.1,639.9 L450.5,648.4 L447.8,656.2 L450.8,664.9 L448.0,675.4 L447.0,686.5 L445.5,695.9 L446.8,704.8 L443.1,710.7 L444.6,719.5 L443.2,730.9 L441.3,738.1 L443.6,748.2 L439.5,757.6 L441.9,766.8 L439.6,777.3 L440.3,784.3 L437.7,792.2 L436.9,803.2 L436.7,809.7 L434.9,822.7 L433.2,828.9 L435.9,839.2 L432.6,846.9 L431.9,858.7 L432.5,865.1 L432.9,876.3 L432.4,882.8 L428.5,893.7 L427.5,902.2 L429.4,910.6 L428.9,919.7 L425.3,929.4 L427.0,936.5 L427.3,949.0 L423.9,957.0 L422.3,967.5 L420.9,974.4 L421.6,985.4 L421.5,992.3 L420.7,999.7 L420.5,1009.9 L420.2,1020.9 L418.4,1028.8 M418.4,1028.8 L411.9,1023.9 L408.7,1015.5 L402.9,1008.2 L394.3,1001.1 L390.3,992.7 L386.7,984.6 L380.5,979.1 L372.3,970.6 L365.5,965.8 L361.6,957.7 L355.1,952.1 L351.7,944.8 L345.1,935.8 L337.6,929.7 L335.7,922.4 L326.2,916.4 L323.1,908.5 L317.2,901.6 L309.9,896.9 L304.9,887.1 L300.4,883.0 L294.5,873.9 M294.5,873.9 L293.4,866.9 L296.0,856.4 L297.1,846.8 L295.6,839.4 L299.2,830.2 L297.3,818.1 L300.4,808.7 L299.1,803.4 L303.9,794.3 L300.6,785.8 L304.8,773.2 L303.1,766.2 L303.0,755.0 L304.8,746.7 L305.8,740.0 L306.6,730.5 L308.4,722.0 L309.0,712.3 L310.4,701.6 L308.8,691.8 L310.0,682.5 L314.2,677.5 L311.3,668.2 L312.7,656.8 L314.7,648.3 L313.9,641.3 L315.4,630.9 L318.3,623.5 L319.6,610.6 L318.3,601.8 L318.6,593.9 L320.2,585.0 L320.9,575.1 L323.9,566.0 L320.6,559.1 L322.9,549.4 L322.9,540.5 L325.2,532.7 L327.2,521.5 L328.5,512.1 L327.5,502.9 L327.2,493.5 L328.6,487.9 L329.2,476.9 L332.3,470.0 L329.6,460.6 L331.7,451.7 L331.2,442.4 L333.7,432.0 L335.8,423.8 L336.8,412.3 L336.2,406.1 L336.8,397.1 L339.3,385.6 L339.8,377.7 L339.3,367.7 L340.8,361.0 L343.4,351.5 L343.1,341.5 L345.0,333.9 L341.8,326.0 L342.5,316.7 L344.4,306.8 L347.7,296.4 L346.9,288.2 M346.9,288.2 L357.6,277.4 M523.3,269.3 L515.5,273.8 L505.3,279.1 L495.4,285.9 L487.9,292.4 L479.7,295.8 M359.5,215.7 L360.5,224.1 L358.6,236.0 L359.0,245.8 L357.0,255.4 L355.7,266.5 L357.6,277.4 M544.5,1215.8 L538.2,1207.6 L533.0,1201.0 L528.8,1193.5 L524.8,1188.0 L518.4,1177.7 L515.0,1170.4 L507.1,1161.4 L504.2,1156.9 L500.7,1148.6 L493.8,1140.4 L487.4,1133.8 L486.0,1127.9 L479.9,1120.4 L471.7,1112.1 L467.1,1102.1 L462.8,1094.1 L458.9,1088.8 L454.3,1081.8 L447.6,1075.0 L444.0,1066.1 L439.1,1060.8 L431.7,1049.8 L429.3,1044.0 L424.4,1037.8 L418.4,1028.8 M-403.9,226.2 L-397.4,232.1 L-391.3,238.1 L-382.6,245.6 L-377.4,251.3 L-370.7,258.0 L-365.9,265.3 L-359.3,267.5 L-350.4,276.7 L-344.2,281.9 L-337.7,287.2 L-330.8,295.4 L-325.1,298.9 L-315.8,307.0 L-309.6,311.5 L-303.8,316.8 L-295.5,323.3 L-289.2,331.9 L-283.1,335.9 L-276.2,342.3 L-270.5,350.9 L-265.3,356.9 L-255.9,363.3 L-251.4,369.7 L-245.7,372.9 L-237.9,381.8 L-232.0,385.7 L-222.7,391.5 L-218.8,399.2 L-211.6,406.5 L-204.3,410.6 L-199.0,418.0 L-192.7,422.6 L-185.0,429.7 L-178.6,436.5 L-169.3,442.8 L-165.8,449.6 L-159.8,454.5 L-152.7,462.5 L-145.4,468.4 L-137.2,471.2 L-130.6,477.0 L-123.9,484.3 L-117.2,490.0 L-109.2,498.3 L-104.0,504.5 L-95.9,508.7 L-91.9,515.3 L-85.2,520.7 L-77.5,530.4 L-72.9,533.3 L-65.8,539.6 L-57.9,545.8 L-52.1,554.1 L-45.6,560.2 L-39.2,566.0 L-30.3,571.4 L-23.8,578.8 L-17.4,583.3 L-11.3,589.4 L-6.7,594.4 L3.1,601.8 L7.9,608.0 L13.0,616.0 L23.4,622.7 L28.3,625.7 L33.3,633.5 L41.4,638.5 L46.3,645.8 L54.5,651.2 L63.1,657.4 L66.7,665.7 L76.7,668.8 L82.8,676.0 L90.3,682.2 L94.1,689.3 L101.7,693.1 L107.7,703.4 L116.3,708.1 L120.8,713.3 L129.5,718.3 L135.6,728.0 L140.7,732.9 L148.4,739.8 L154.2,744.6 L162.4,751.1 L169.6,755.6 L172.9,763.8 L179.4,768.6 L186.4,775.3 L194.2,780.3 L202.9,785.9 L209.1,794.9 L214.3,799.2 L221.1,807.3 L228.2,812.2 L233.6,817.0 L241.8,824.7 L248.9,829.4 L255.0,838.3 L262.0,843.4 L268.2,851.2 L273.9,855.0 L282.1,863.3 L287.3,866.1 L294.5,873.9 M-349.9,203.6 L-339.7,206.5 L-333.7,205.0 L-322.4,207.6 L-313.4,206.5 L-304.6,211.1 L-297.2,209.7 L-284.4,209.5 L-275.9,211.6 L-267.1,212.6 L-260.0,214.2 L-251.0,216.4 L-240.5,214.6 L-231.6,216.3 L-223.0,217.3 L-213.7,218.2 L-203.1,220.2 L-196.3,220.4 L-189.2,221.8 L-179.5,225.3 L-170.2,223.6 L-158.5,226.5 L-150.4,227.6 L-140.9,230.5 L-132.5,230.1 L-122.9,229.0 L-113.0,232.3 L-107.3,235.2 L-98.5,233.9 L-89.0,236.0 L-78.7,237.0 L-67.4,236.7 L-61.2,237.3 L-50.6,238.5 L-44.4,239.6 L-34.4,240.1 L-22.6,242.2 L-17.3,245.0 L-6.3,244.2 L3.0,244.7 L10.4,245.9 L22.3,249.5 L28.7,251.6 L37.7,252.9 L46.3,253.0 L57.9,252.8 L65.6,253.7 L75.3,253.7 L85.7,255.8 L92.9,258.3 L104.0,257.0 L111.3,261.5 L121.5,258.8 L130.0,260.1 L139.1,260.7 L150.0,261.9 L156.1,265.5 L165.1,264.3 L173.0,267.6 L183.8,267.3 L195.2,271.2 L203.1,269.9 L209.1,273.3 L220.1,272.8 L230.4,276.1 L237.2,274.1 L249.0,274.0 L257.7,278.5 L266.6,278.3 L272.7,279.2 L283.9,280.1 L291.6,283.0 L301.8,283.4 L312.7,282.8 L317.7,286.2 L328.7,283.9 L337.5,288.9 L346.9,288.2 M357.7,76.9 L363.2,86.0 L370.0,94.9 L377.3,100.7 L384.3,108.0 L387.9,116.3 L395.3,126.6 M357.7,76.9 L353.4,83.4 L346.5,91.8 L336.9,97.8 L330.2,103.3 L327.2,108.2 L321.3,116.3 L313.2,120.5 L305.4,126.0 L300.7,134.3 L292.8,140.7 L285.9,146.1 L282.2,151.8 L275.2,158.1 L270.4,164.8 L264.2,174.3 L258.0,177.8 L250.4,183.3 L245.3,192.4 L234.9,196.3 L228.8,203.6 L226.1,211.9 L217.1,218.4 L209.3,223.6 L204.6,227.9 L200.6,236.8 L194.6,243.1 L186.6,247.2 L179.6,257.0 L173.6,262.2 L166.8,267.3 L158.4,273.1 L152.8,278.9 L145.9,288.2 L143.7,294.3 L136.6,298.5 L130.3,305.6 L124.0,311.4 L115.2,319.0 L108.5,324.2 L104.3,332.9 L99.1,338.7 L90.0,344.2 L84.6,351.1 L79.7,357.4 L73.6,363.4 L64.9,367.8 L58.0,376.1 L50.3,382.3 L44.4,387.9 L41.4,397.1 L31.7,402.1 L27.0,406.1 L19.8,414.6 L14.0,421.1 L6.0,427.6 L2.1,432.1 L-4.5,441.8 L-9.4,446.8 L-17.4,453.7 L-24.1,459.9 L-30.8,465.6 L-35.6,472.1 L-42.5,477.6 L-50.0,485.1 L-55.9,490.6 L-62.6,496.3 L-67.8,505.2 L-76.1,510.6 L-81.0,516.9 L-86.7,522.2 L-96.0,528.4 L-100.1,536.0 L-104.7,542.5 L-112.2,547.5 L-118.0,552.9 L-123.9,560.8 L-132.2,568.1 L-138.2,575.8 L-146.4,578.0 L-150.6,585.1 L-158.6,594.9 L-163.7,598.2 L-170.7,604.2 L-177.6,610.2 L-180.8,619.2 L-189.8,622.8 L-193.5,632.6 L-203.7,638.9 L-208.1,645.8 L-214.9,649.7 L-223.2,656.7 L-228.5,664.4 L-235.0,670.8 L-240.8,676.8 L-246.5,681.9 M-246.5,681.9 L-236.5,684.1 L-228.1,681.9 L-220.4,681.7 L-212.1,682.4 L-202.1,685.0 L-194.5,684.0 L-183.2,682.8 L-173.4,683.4 L-164.1,683.5 L-154.5,684.5 L-148.9,684.2 L-139.4,684.4 L-129.9,688.5 L-120.6,686.3 L-109.9,685.2 L-103.8,689.1 L-93.8,686.4 L-85.4,689.2 L-72.8,688.1 L-65.0,688.7 L-58.2,688.4 L-48.6,688.5 L-37.5,688.1 L-30.3,691.3 L-22.8,692.6 L-11.2,691.6 L-4.1,690.0 L7.8,693.7 L13.2,693.4 L23.0,690.5 L33.8,690.9 L43.9,694.6 L50.5,691.8 L60.5,694.8 L67.5,695.0 L76.9,693.9 L86.1,693.0 L96.7,694.3 L107.4,697.3 L115.6,695.9 L124.3,695.5 L132.6,696.8 L141.4,696.7 L152.3,699.4 L160.8,699.2 L168.0,696.1 L176.6,698.3 L188.0,699.7 L197.7,700.2 L204.0,697.4 L213.9,699.0 L224.6,701.8 L232.2,701.6 L242.0,700.8 L249.8,703.1 L260.4,701.8 L270.3,700.3 L278.3,702.4 L285.4,700.9 L295.2,702.8 M395.3,126.6 L394.1,137.3 L390.8,146.4 L392.8,152.3 L389.3,162.6 L386.8,170.0 L384.9,182.6 L385.9,191.6 L382.8,198.7 L379.3,207.3 L380.1,218.8 L376.2,226.4 L374.6,236.8 L373.7,244.5 L374.0,251.4 L371.7,261.3 L368.9,270.2 L366.8,280.6 L369.2,288.9 L365.2,297.8 L362.5,307.8 L363.3,314.0 L360.4,323.1 L360.2,331.6 L359.4,340.8 L357.7,350.4 L354.8,361.7 L355.0,371.4 L350.0,379.7 L349.7,386.3 L348.2,398.7 L344.7,406.6 L345.5,416.4 L343.6,422.6 L343.7,431.0 L341.4,440.8 L337.0,449.3 L339.0,458.3 L337.7,467.2 L336.2,475.8 L333.5,486.9 L331.6,497.6 L328.4,506.9 L328.4,515.1 L325.4,525.0 L325.9,531.7 L322.1,542.5 L322.1,551.9 L321.9,559.9 L319.6,566.3 L318.6,577.7 L313.8,583.9 L312.2,593.6 L313.6,605.0 L311.7,612.2 L311.2,620.3 L306.5,630.6 L305.1,640.9 L306.1,649.9 L302.2,658.2 L300.6,667.1 L300.0,674.3 L299.8,686.2 L298.0,692.0 L295.2,702.8 M395.3,126.6 L400.1,134.9 L408.6,141.5 L415.1,147.8 L417.9,155.2 L424.2,162.0 L432.2,168.9 L437.8,177.2 L440.7,184.1 L450.4,191.8 L456.3,199.0 L462.8,203.5 L466.3,211.4 L473.7,219.0 L479.2,227.7 L482.3,234.7 L489.6,240.3 L496.9,249.1 L501.0,256.6 L506.3,260.9 L514.1,270.1 M984.5,730.3 L979.0,725.7 L972.1,719.5 L964.0,711.1 L955.9,704.4 L950.5,699.8 L941.3,691.3 M941.3,691.3 L934.6,683.6 L928.5,678.2 L923.2,674.0 L915.9,663.9 L909.1,657.7 L902.6,654.4 L896.8,646.5 L888.0,642.1 L884.7,633.8 L874.6,628.2 L869.7,620.6 L863.1,613.7 L855.6,609.0 L850.8,601.6 L845.3,595.6 L836.3,588.2 L831.5,583.5 L825.4,577.5 L817.7,571.2 L812.2,562.6 L803.7,557.8 L800.4,552.9 L793.8,545.9 L786.4,537.0 L778.6,533.3 L772.0,525.3 L766.8,516.8 L758.4,511.3 L754.9,507.5 L745.3,498.3 L742.8,492.0 L735.5,487.4 L729.3,481.7 L719.5,475.5 L715.7,465.9 L710.2,460.6 L701.7,455.3 L695.6,449.1 L687.0,443.9 L682.5,434.2 L675.9,428.2 L669.1,424.2 L664.1,415.4 L655.6,412.5 L650.6,402.7 L644.0,396.6 L635.2,392.0 L628.9,383.4 L624.9,380.6 L615.8,373.3 L609.6,363.9 L602.6,357.3 L599.3,354.8 L589.6,345.1 L583.3,339.9 L578.0,332.5 L573.7,325.8 L566.5,319.5 L560.1,313.1 L551.6,310.5 L545.4,301.8 L540.7,297.8 L533.7,287.5 L527.8,283.6 L520.9,275.9 L514.1,270.1 M941.3,691.3 L933.7,690.1 L923.4,693.0 L916.0,694.7 L904.0,693.7 L896.5,694.5 L885.1,697.9 L877.8,694.9 L867.4,695.1 L861.7,696.4 L851.2,700.7 L843.0,699.8 L831.8,700.9 L825.1,699.6 L813.5,701.3 L806.1,704.1 L797.0,702.1 L788.6,702.3 L776.8,702.5 L769.8,705.7 L760.3,706.3 L750.0,705.6 L742.7,707.2 L733.3,710.1 L724.1,710.1 L713.3,709.8 L704.2,709.2 L695.8,710.8 L686.6,713.9 L678.2,711.9 L668.1,712.9 L662.2,714.4 L653.7,715.5 L643.5,715.4 L635.3,716.2 L623.2,716.0 L617.1,716.0 L605.3,719.2 L598.5,719.3 L589.3,719.8 L580.0,718.9 L570.2,723.7 L561.8,721.7 L553.0,725.2 L543.3,723.5 L535.8,726.1 L524.1,726.1 L515.4,725.4 L508.6,726.2 L500.0,727.5 L490.8,726.7 L479.7,727.0 L472.7,731.5 L462.0,730.4 L455.1,730.8 L443.1,730.4 L436.7,734.1 L426.0,734.5 L418.3,735.0 L406.1,735.6 L400.4,735.6 L389.7,736.4 M514.1,270.1 L510.8,279.3 L506.8,286.0 L506.0,298.0 L500.5,305.1 L499.3,311.0 L494.8,320.7 L494.2,328.5 L489.8,339.3 L488.6,349.5 L486.0,354.6 L481.8,365.0 L478.8,373.5 L475.1,380.5 L473.4,391.9 L470.5,399.6 L468.7,406.4 L464.1,417.5 L461.4,422.4 L457.9,434.6 L453.5,441.3 L454.0,450.2 L449.1,459.4 L447.5,467.4 L444.8,477.0 L439.6,485.2 L436.2,491.3 L434.0,499.9 L430.3,512.0 L430.3,517.7 L423.8,527.0 L422.0,534.7 L420.7,543.3 L416.5,552.4 L414.0,560.3 L410.4,572.1 L405.3,577.8 L402.6,589.2 L402.3,595.2 L400.3,603.5 L395.6,614.5 L393.1,620.2 L387.7,629.3 L386.7,639.3 M386.7,639.3 L388.8,650.6 L386.0,656.4 L387.6,666.6 L388.8,679.3 L388.4,688.2 L388.5,698.0 L386.8,707.0 L385.3,716.5 L387.3,727.3 L387.7,734.7 M387.7,734.7 L389.7,736.4 M386.7,639.3 L382.6,646.3 L376.8,654.2 L371.0,658.9 L363.9,667.3 L360.6,677.5 L354.8,684.1 L349.4,688.7 L342.3,697.8 L339.1,704.4 L332.6,712.0 M387.7,734.7 L379.3,734.5 L368.3,734.3 L359.5,736.6 L350.6,736.8 M350.6,736.8 L342.9,730.4 L336.4,721.3 L332.6,712.0 M295.2,702.8 L303.4,711.2 M332.6,712.0 L322.2,713.7 L312.2,709.4 L303.4,711.2 M-304.9,730.3 L-297.6,736.1 L-290.5,743.7 L-285.7,750.0 L-278.1,754.9 L-273.7,762.6 L-265.6,766.3 L-260.9,774.3 L-254.7,781.1 L-246.9,786.4 L-238.8,794.7 L-235.3,800.4 L-224.8,806.8 L-218.3,811.5 L-215.2,818.2 L-208.6,823.8 L-202.0,831.7 L-193.1,839.2 L-190.0,845.5 L-180.8,849.6 L-177.1,858.6 L-170.1,862.3 L-162.8,871.0 L-153.5,877.8 L-147.4,883.9 L-142.6,886.7 L-137.1,893.4 L-131.2,899.7 L-123.8,905.7 L-117.4,915.6 L-111.1,920.4 L-102.0,924.6 L-96.0,933.2 L-92.6,941.1 L-82.7,943.9 L-75.5,952.4 L-70.4,957.1 L-66.6,965.6 L-57.1,969.6 L-53.6,977.7 L-45.9,983.0 L-36.9,990.3 L-33.7,997.3 L-24.6,1003.0 L-17.1,1009.0 L-11.9,1013.4 L-6.9,1020.9 L0.1,1028.1 L5.2,1035.2 L11.5,1039.7 L20.3,1045.0 L25.7,1054.8 L33.9,1059.2 L38.0,1067.2 L47.5,1070.6 L52.1,1079.0 L59.8,1083.8 L66.8,1091.9 L73.2,1099.7 L79.2,1104.9 L84.0,1109.4 L90.8,1118.1 L98.3,1122.1 L106.2,1129.5 L113.0,1136.5 L118.4,1141.4 L126.0,1148.4 L131.1,1154.4 L137.0,1159.7 L142.8,1167.1 L150.9,1172.3 L155.0,1180.8 L162.7,1188.1 L167.2,1192.6 L177.3,1200.3 L181.7,1205.5 L188.4,1209.6 L193.5,1217.0 L203.5,1223.1 L207.4,1231.1 L215.7,1237.8 L220.5,1242.8 L225.7,1251.1 L233.8,1255.2 L239.5,1262.5 L245.8,1268.1 L252.1,1273.8 L260.4,1280.8 L265.1,1289.5 L271.3,1293.8 L278.9,1298.6 L285.4,1306.6 L293.6,1312.1 L298.7,1321.3 L306.4,1325.6 L311.0,1333.5 L320.7,1337.4 L326.8,1344.3 L331.7,1349.1 L337.1,1356.4 L343.4,1365.3 L353.2,1369.4 L357.7,1376.5 M-304.9,730.3 L-295.9,723.2 L-289.3,716.6 L-280.2,711.8 L-274.0,706.9 L-266.7,699.4 L-259.2,693.3 M-259.2,693.3 L-249.2,694.2 L-240.8,694.5 L-233.6,695.3 L-221.0,698.0 L-216.1,697.3 L-204.6,699.8 L-193.7,702.7 L-188.7,703.3 L-175.7,704.2 L-166.8,703.6 L-159.2,706.1 L-149.4,707.3 L-140.2,706.7 L-131.3,709.0 L-121.5,708.8 L-114.0,712.3 L-104.3,712.7 L-98.0,711.4 L-88.2,714.7 L-80.4,715.8 L-71.0,714.8 L-61.2,717.5 L-50.2,720.3 L-43.3,717.6 L-31.5,720.9 L-22.2,722.6 L-16.6,722.1 L-7.2,723.6 L2.1,726.5 L13.9,724.6 L23.4,729.1 L29.7,729.8 L41.2,730.3 L47.7,730.9 L58.5,730.7 L66.3,730.7 L73.9,734.9 L83.6,735.6 L93.2,736.7 L101.6,735.1 L112.3,736.9 L119.3,738.9 L129.7,741.9 L139.6,741.0 L147.5,742.8 L155.2,742.6 L166.3,746.5 L175.4,744.4 L186.0,748.0 L191.8,747.2 L200.0,750.1 L209.8,751.4 L221.1,752.3 L229.5,751.0 L236.2,753.7 L245.1,754.4 L257.5,753.9 L265.1,756.7 L272.9,756.3 L283.9,757.3 L292.5,759.8 M357.7,1376.5 L362.0,1367.7 L371.1,1363.1 L373.3,1354.0 L380.3,1344.0 L385.4,1339.1 L390.1,1332.9 L397.0,1322.6 L405.6,1314.0 L407.8,1307.9 L414.3,1299.6 L421.3,1294.8 L426.6,1285.2 M292.5,759.8 L298.4,766.4 L304.6,778.6 L311.2,783.8 L316.7,793.1 L324.1,802.9 M324.1,802.9 L325.5,811.0 L328.8,821.6 L328.1,827.9 L333.5,840.0 L335.3,845.8 L336.8,854.2 L338.7,863.7 L341.4,875.3 L341.8,883.6 L345.9,893.2 L346.5,900.8 L347.2,910.0 L348.3,917.8 L350.0,925.1 L354.5,935.4 L354.5,946.6 L356.8,953.6 L359.7,960.9 L363.9,972.3 L365.4,979.1 L367.5,990.7 L369.6,996.3 L368.1,1004.7 L369.8,1016.3 L371.6,1024.1 L374.9,1034.1 L375.5,1042.9 L381.5,1049.9 L381.0,1060.7 L382.6,1070.1 L387.6,1076.2 L387.3,1084.7 L389.6,1094.6 L393.4,1105.0 L395.5,1114.2 L396.7,1121.1 L398.0,1128.8 L398.6,1141.2 L403.3,1146.8 L403.2,1156.7 L405.7,1166.3 L406.1,1176.5 L408.9,1184.8 L411.1,1192.5 M426.6,1285.2 L426.1,1278.0 L423.6,1267.0 L423.2,1256.2 L418.4,1249.5 L419.7,1239.9 L418.6,1228.2 L417.4,1220.9 L416.2,1211.3 L414.3,1199.8 L411.1,1192.5 M-246.5,681.9 L-259.2,693.3 M303.4,711.2 L299.7,721.1 L299.8,730.1 L295.0,742.1 L292.8,751.8 L292.5,759.8 M984.5,730.3 L977.0,737.6 L972.1,741.9 L964.6,748.3 L959.0,754.8 L952.7,761.2 L944.4,769.4 L938.6,776.9 L932.8,780.3 L927.8,789.4 L919.8,795.1 L913.3,802.6 L906.7,804.8 L899.0,813.4 L895.3,818.6 L888.0,825.5 L881.3,831.0 L875.7,839.4 L867.0,846.8 L861.6,851.4 L855.0,858.6 L849.5,864.6 L843.1,870.6 L835.2,879.1 L830.3,882.6 L825.8,888.8 L819.1,895.8 L809.7,902.8 L804.0,907.5 L800.7,917.2 L792.0,923.0 L786.5,927.1 L777.7,934.7 L771.6,941.9 L766.9,945.9 L761.3,955.6 L753.6,962.0 L747.1,964.1 L740.7,972.0 L736.3,979.1 L730.1,983.9 L721.1,989.6 L713.2,999.1 L706.7,1003.3 L702.1,1012.8 L694.8,1015.1 L690.4,1024.5 L681.6,1031.9 L678.3,1038.3 L671.7,1043.0 L664.8,1047.5 L658.1,1054.9 L650.4,1061.1 L642.8,1069.7 L639.4,1072.5 L631.9,1079.0 L625.6,1086.0 L621.0,1093.0 L612.7,1099.2 L608.0,1104.4 L598.9,1111.8 L594.5,1118.8 L588.5,1125.0 L578.9,1131.9 L572.3,1136.9 L567.8,1145.2 L560.0,1149.8 L555.0,1157.4 L548.4,1164.7 L540.5,1168.2 L533.7,1178.0 L530.1,1181.6 L522.1,1188.7 L518.3,1195.5 L510.9,1200.4 L501.6,1207.4 L497.8,1214.8 L492.4,1222.8 L485.1,1230.0 L480.0,1235.8 L469.7,1240.1 L463.6,1247.4 L458.7,1251.5 L450.4,1259.5 L446.4,1265.6 L439.3,1273.0 L433.9,1279.7 L426.6,1285.2 M350.6,736.8 L346.5,744.8 L344.7,753.7 L338.0,763.8 L335.9,775.1 L329.9,784.1 L328.2,794.3 L324.1,802.9 M389.7,736.4 L388.2,746.6 L389.5,754.2 L389.3,765.3 L391.9,774.3 L391.9,780.3 L391.8,789.3 L390.9,801.6 L390.9,808.9 L391.5,819.7 L396.1,825.6 L393.8,838.9 L393.7,845.1 L397.4,856.9 L395.2,864.9 L397.4,872.6 L394.4,881.8 L397.8,893.5 L397.1,900.2 L397.3,910.2 L396.2,920.7 L400.7,925.9 L396.9,936.3 L398.0,947.4 L401.6,955.5 L402.4,963.3 L399.5,973.1 L401.0,981.4 L403.5,992.9 L401.2,999.7 L401.6,1009.6 L403.7,1020.4 L405.4,1026.5 L402.5,1036.9 L406.3,1046.4 L405.7,1057.1 L404.9,1064.3 L406.8,1074.5 L408.1,1082.0 L408.4,1092.1 L408.5,1101.9 L407.5,1112.0 L405.8,1118.6 L408.1,1130.1 L407.2,1139.0 L407.2,1146.2 L409.2,1157.0 L409.9,1166.7 L411.1,1173.7 L410.8,1182.9 L411.1,1192.5" fill="none" stroke="#6a6a6a" stroke-width=".8" stroke-opacity=".4" stroke-linejoin="round"/>
<path d="M1261.7,414.0 Q1263.3,433.3 1266.7,441.6 Q1270.0,450.0 1271.7,458.4 Q1273.3,466.7 1271.7,475.0 Q1270.0,483.3 1273.3,490.0 Q1276.7,496.7 1279.2,503.4 Q1281.7,510.0 1280.8,515.0 Q1280.0,520.0 1276.7,525.0 Q1273.3,530.0 1268.3,535.0 Q1263.3,540.0 1258.3,545.0 Q1253.3,550.0 1248.3,553.4 Q1243.3,556.7 1241.7,561.7 Q1240.0,566.7 1245.8,570.0 Q1251.7,573.3 1257.5,580.0 Q1263.3,586.7 1264.2,593.4 Q1265.0,600.0 1262.5,606.6 Q1260.0,613.3 1258.3,620.0 Q1256.7,626.7 1255.0,633.4 Q1253.3,640.0 1251.7,645.0 Q1250.0,650.0 1254.2,655.0 Q1258.3,660.0 1259.2,666.6 Q1260.0,673.3 1259.2,681.6 Q1258.3,690.0 1257.5,698.4 Q1256.7,706.7 1255.8,713.4 Q1255.0,720.0 1257.5,726.6 Q1260.0,733.3 1262.5,741.6 L1265.0,750.0" fill="none" stroke="#6e6e6e" stroke-width="1.8" stroke-opacity=".6" stroke-linejoin="round"/>
</g>
<path d="M917.8,158.3 Q917.0,155.0 924.5,152.8 Q932.0,150.7 942.0,150.7 Q952.0,150.7 960.3,148.3 Q968.7,146.0 972.8,147.2 Q977.0,148.3 972.8,151.7 Q968.7,155.0 960.3,157.5 Q952.0,160.0 942.0,161.7 Q932.0,163.3 925.3,162.5 Q918.7,161.7 917.8,158.3 Z" fill="#262626"/>
<path d="M528.5,203.8 Q529.5,197.5 533.2,194.6 Q537.0,191.8 542.0,192.8 Q547.0,193.8 552.0,196.2 Q557.0,198.8 561.0,202.5 Q565.0,206.2 566.2,210.6 Q567.5,215.0 564.8,216.9 Q562.0,218.8 555.8,217.5 Q549.5,216.2 545.8,220.4 Q542.0,224.5 537.0,223.8 Q532.0,223.0 529.8,216.5 Q527.5,210.0 528.5,203.8 Z" fill="#181818"/>
<path d="M535.1,189.2 Q533.2,187.0 537.6,185.0 Q542.0,183.0 546.0,184.0 Q550.0,185.0 548.5,187.5 Q547.0,190.0 542.0,190.8 Q537.0,191.5 535.1,189.2 Z" fill="#1b1b1b"/>
<path d="M567.0,223.5 Q564.5,220.5 568.2,218.8 Q572.0,217.0 577.6,220.0 Q583.2,223.0 581.6,225.2 Q580.0,227.5 574.8,227.0 Q569.5,226.5 567.0,223.5 Z" fill="#1b1b1b"/>
<path d="M637.6,363.1 Q638.2,356.2 640.8,353.8 Q643.2,351.2 647.0,349.6 Q650.8,348.0 652.4,351.5 Q654.0,355.0 653.0,360.6 Q652.0,366.2 648.9,369.4 Q645.8,372.5 642.6,375.6 Q639.5,378.8 638.2,374.4 Q637.0,370.0 637.6,363.1 Z" fill="#181818"/>
<path d="M267.0,275.6 Q267.0,253.8 275.1,255.0 Q283.2,256.2 286.1,260.0 Q289.0,263.8 287.0,267.5 Q285.0,271.2 282.5,274.4 Q280.0,277.5 279.5,282.5 Q279.0,287.5 277.0,291.2 Q275.0,295.0 271.0,296.2 Q267.0,297.5 267.0,275.6 Z" fill="#181818"/>
<path d="M1267.6,648.1 Q1265.8,642.5 1270.1,640.0 Q1274.5,637.5 1280.8,639.4 Q1287.0,641.2 1293.2,645.6 Q1299.5,650.0 1304.5,655.0 Q1309.5,660.0 1308.9,663.8 Q1308.2,667.5 1302.6,666.9 Q1297.0,666.2 1289.5,663.1 Q1282.0,660.0 1275.8,656.9 Q1269.5,653.8 1267.6,648.1 Z" fill="#363636"/>
<path d="M328.2,100.6 Q325.8,97.5 330.1,96.5 Q334.5,95.5 336.4,97.8 Q338.2,100.0 334.5,101.9 Q330.8,103.8 328.2,100.6 Z" fill="#1c1c1c"/>
<path d="M358.9,111.2 Q355.8,107.5 360.8,106.9 Q365.8,106.2 368.2,108.8 Q370.8,111.2 366.4,113.1 Q362.0,115.0 358.9,111.2 Z" fill="#1c1c1c"/>
<path d="M385.8,123.8 Q382.0,120.0 389.5,118.8 Q397.0,117.5 399.5,120.6 Q402.0,123.8 395.8,125.6 Q389.5,127.5 385.8,123.8 Z" fill="#1c1c1c"/>
<path d="M425.8,132.5 Q422.0,128.8 428.2,128.1 Q434.5,127.5 437.0,130.6 Q439.5,133.8 434.5,135.0 Q429.5,136.2 425.8,132.5 Z" fill="#1c1c1c"/>
<path d="M262,417.5 L592,366 L809,337.5 L912,317.3 L992,302.7 L1155,296 L1345,320 L1467,360 L1580,396.7 L1788,439 L1910,423.5" fill="none" stroke="#cf456d" stroke-opacity=".88" stroke-width="1.3" stroke-dasharray="9 3.5 2 3.5"/>
<path d="M306,80V1064 M488,80V1064 M670,80V1064 M852,80V1064 M1034,80V1064 M1216,80V1064 M1398,80V1064 M1580,80V1064 M1762,80V1064" fill="none" stroke="#fff" stroke-opacity=".40" stroke-width="2" stroke-dasharray="2 5" stroke-dashoffset="-1.4"/>
<path d="M272,165H1904 M272,360H1904 M272,552.5H1904 M272,744.5H1904 M272,936H1904" fill="none" stroke="#fff" stroke-opacity=".40" stroke-width="2" stroke-dasharray="2 5" stroke-dashoffset="-5.4"/>
</svg>
<div class="ml" style="left:380px;top:129px;font-size:11.6px;">Puerto Padre</div>
<div class="ml" style="left:442px;top:190px;font-size:11.6px;">Holguín</div>
<div class="ml" style="left:540px;top:175px;font-size:11.6px;">Banes</div>
<div class="ml" style="left:682px;top:235px;font-size:11.6px;">Moa</div>
<div class="ml" style="left:371px;top:290px;font-size:11.6px;">Bayamo</div>
<div class="ml" style="left:763px;top:295px;font-size:11.6px;">Baracoa</div>
<div class="ml" style="left:490px;top:321px;font-size:11.6px;">Palma Soriano</div>
<div class="ml" style="left:635px;top:334px;font-size:11.6px;">Guantanamo</div>
<div class="ml" style="left:1066px;top:374px;font-size:11.6px;">Port-de-Paix</div>
<div class="ml" style="left:1182px;top:408px;font-size:11.6px;">Cap-Haïtien</div>
<div class="ml" style="left:1247px;top:427px;font-size:11.6px;">Fort-Liberté</div>
<div class="ml" style="left:1272px;top:449px;font-size:11.6px;">Dajabón</div>
<div class="ml" style="left:1456px;top:403px;font-size:11.6px;">Puerto Plata</div>
<div class="ml" style="left:1386px;top:448px;font-size:11.6px;">Mao</div>
<div class="ml" style="left:1337px;top:463px;font-size:11.6px;">Sabaneta</div>
<div class="ml" style="left:1092px;top:469px;font-size:11.6px;">Gonaïves</div>
<div class="ml" style="left:1610px;top:483px;font-size:11.6px;">Nagua</div>
<div class="ml" style="left:1535px;top:491px;font-size:11.6px;">San Francisco</div>
<div class="ml" style="left:1535px;top:505px;font-size:11.6px;">de Macorís</div>
<div class="ml" style="left:1702px;top:516px;font-size:11.6px;">Samana</div>
<div class="ml" style="left:1216px;top:527px;font-size:11.6px;">Hinche</div>
<div class="ml" style="left:1554px;top:544px;font-size:11.6px;">Cotuí</div>
<div class="ml" style="left:1507px;top:566px;font-size:11.6px;">Bonao</div>
<div class="ml" style="left:1271px;top:579px;font-size:11.6px;">Comendador</div>
<div class="ml" style="left:1358px;top:585px;font-size:11.6px;">San Juan de</div>
<div class="ml" style="left:1358px;top:599px;font-size:11.6px;">la Maguana</div>
<div class="ml" style="left:1717px;top:601px;font-size:11.6px;">Hato Mayor del Rey</div>
<div class="ml" style="left:833px;top:623px;font-size:11.6px;">Jérémie</div>
<div class="ml" style="left:1816px;top:630px;font-size:11.6px;">Higüey</div>
<div class="ml" style="left:1245px;top:653px;font-size:11.6px;">Jimaní</div>
<div class="ml" style="left:1323px;top:656px;font-size:11.6px;">Neiba</div>
<div class="ml" style="left:1449px;top:660px;font-size:11.6px;">Azua</div>
<div class="ml" style="left:1770px;top:666px;font-size:11.6px;">La Romana</div>
<div class="ml" style="left:1382px;top:700px;font-size:11.6px;">Santa Cruz</div>
<div class="ml" style="left:1382px;top:714px;font-size:11.6px;">de Barahona</div>
<div class="ml" style="left:1522px;top:694px;font-size:11.6px;">Baní</div>
<div class="ml" style="left:899px;top:710px;font-size:11.6px;">Les Cayes</div>
<div class="ml" style="left:1264px;top:740px;font-size:11.6px;">Pedernales</div>
<div class="ml" style="left:521px;top:358px;font-size:13px;">Santiago de Cuba</div>
<div class="ml" style="left:1602px;top:657px;font-size:13px;">Santo Domingo</div>
<div class="ml" style="left:346px;top:753px;font-size:13px;">Kingston</div>
<div class="ml" style="left:1557px;top:588px;font-size:13px;">DOMINICAN</div>
<div class="ml" style="left:1557px;top:603px;font-size:13px;">REPUBLIC</div>
<div class="ml" style="left:1165px;top:556px;font-size:12.5px;">HAITI</div>
<div class="ml" style="left:314px;top:177px;transform:translate(0,-50%)">Tunas</div>
<div class="ml" style="left:315px;top:296px;transform:translate(-100%,-50%)">Manzanillo</div>
<div class="ml" style="left:317px;top:669px;transform:translate(-100%,-50%)">Ocho Rios</div>
<div class="ml" style="left:303px;top:722px;font-size:13px;transform:translate(-100%,-50%)">JAMAICA</div>
<div class="ml" style="left:1849px;top:641px;transform:translate(0,-50%)">Punta Cana</div>
<div class="gl" style="left:296px;top:165px">21°N</div>
<div class="gl" style="left:296px;top:360px">20°N</div>
<div class="gl" style="left:296px;top:552.5px">19°N</div>
<div class="gl" style="left:296px;top:744.5px">18°N</div>
<div class="gl" style="left:670px;top:1046px">75°W</div>
<div class="gl" style="left:852px;top:1046px">74°W</div>
<div class="gl" style="left:1034px;top:1046px">73°W</div>
<div class="gl" style="left:1216px;top:1046px">72°W</div>
<div class="gl" style="left:1398px;top:1046px">71°W</div>
<div class="gl" style="left:1580px;top:1046px">70°W</div>
<svg class="abs" style="left:0;top:0" width="1920" height="1080" viewBox="0 0 1920 1080" fill="none">
<circle cx="1162" cy="659.6" r="137" stroke="#1fa0a8" stroke-width="1" stroke-dasharray="6 4" stroke-opacity=".6"/>
<circle cx="1162" cy="659.6" r="91" stroke="#26a070" stroke-width="1" stroke-dasharray="6 4" stroke-opacity=".6"/>
<circle cx="1162" cy="659.6" r="53" stroke="#c9a227" stroke-width="1" stroke-dasharray="6 4" stroke-opacity=".6"/>
<circle cx="1162" cy="659.6" r="27" stroke="#e07a28" stroke-width="1" stroke-dasharray="4 3" stroke-opacity=".6"/>
<circle cx="1064" cy="424.2" r="6" stroke="#8d929b" stroke-width="1.5"/>
<circle cx="1179" cy="406.3" r="6" stroke="#8d929b" stroke-width="1.5"/>
<circle cx="1090.8" cy="465" r="6" stroke="#8d929b" stroke-width="1.5"/>
<circle cx="1088" cy="529.5" r="6" stroke="#8d929b" stroke-width="1.5"/>
<circle cx="830" cy="618.3" r="6" stroke="#8d929b" stroke-width="1.5"/>
<circle cx="896.5" cy="710.5" r="6" stroke="#8d929b" stroke-width="1.5"/>
<circle cx="1154" cy="640" r="6" stroke="#8d929b" stroke-width="1.5"/>
<circle cx="1126" cy="701" r="6" stroke="#8d929b" stroke-width="1.5"/>
<path d="M1212.8,518.7 L1220.3,533.1 L1205.3,533.1 Z" stroke="#2db36c" stroke-width="1.4" stroke-linejoin="round"/>
<path d="M1089.0,527.2 L1096.5,541.6 L1081.5,541.6 Z" stroke="#2db36c" stroke-width="1.4" stroke-linejoin="round"/>
<path d="M1130.8,536.5 L1138.3,550.9 L1123.3,550.9 Z" stroke="#2db36c" stroke-width="1.4" stroke-linejoin="round"/>
<path d="M1144.0,548.2 L1151.5,562.6 L1136.5,562.6 Z" stroke="#2db36c" stroke-width="1.4" stroke-linejoin="round"/>
<path d="M1087.0,555.2 L1094.5,569.6 L1079.5,569.6 Z" stroke="#2db36c" stroke-width="1.4" stroke-linejoin="round"/>
<path d="M775.0,630.2 L782.5,644.6 L767.5,644.6 Z" stroke="#2db36c" stroke-width="1.4" stroke-linejoin="round"/>
<path d="M769.5,660.2 L777.0,674.6 L762.0,674.6 Z" stroke="#2db36c" stroke-width="1.4" stroke-linejoin="round"/>
<path d="M830.0,616.5 L837.5,630.9 L822.5,630.9 Z" stroke="#2db36c" stroke-width="1.4" stroke-linejoin="round"/>
<path d="M859.0,647.2 L866.5,661.6 L851.5,661.6 Z" stroke="#2db36c" stroke-width="1.4" stroke-linejoin="round"/>
<path d="M891.0,639.5 L898.5,653.9 L883.5,653.9 Z" stroke="#2db36c" stroke-width="1.4" stroke-linejoin="round"/>
<path d="M917.0,646.5 L924.5,660.9 L909.5,660.9 Z" stroke="#2db36c" stroke-width="1.4" stroke-linejoin="round"/>
<path d="M940.8,637.2 L948.3,651.6 L933.3,651.6 Z" stroke="#2db36c" stroke-width="1.4" stroke-linejoin="round"/>
<path d="M979.5,646.5 L987.0,660.9 L972.0,660.9 Z" stroke="#2db36c" stroke-width="1.4" stroke-linejoin="round"/>
<path d="M1003.8,646.0 L1011.3,660.4 L996.3,660.4 Z" stroke="#2db36c" stroke-width="1.4" stroke-linejoin="round"/>
<path d="M1019.0,654.0 L1026.5,668.4 L1011.5,668.4 Z" stroke="#2db36c" stroke-width="1.4" stroke-linejoin="round"/>
<path d="M892.0,672.2 L899.5,686.6 L884.5,686.6 Z" stroke="#2db36c" stroke-width="1.4" stroke-linejoin="round"/>
<path d="M910.8,673.2 L918.3,687.6 L903.3,687.6 Z" stroke="#2db36c" stroke-width="1.4" stroke-linejoin="round"/>
<path d="M932.5,681.0 L940.0,695.4 L925.0,695.4 Z" stroke="#2db36c" stroke-width="1.4" stroke-linejoin="round"/>
<path d="M957.8,664.5 L965.3,678.9 L950.3,678.9 Z" stroke="#2db36c" stroke-width="1.4" stroke-linejoin="round"/>
<path d="M962.0,684.5 L969.5,698.9 L954.5,698.9 Z" stroke="#2db36c" stroke-width="1.4" stroke-linejoin="round"/>
<path d="M990.0,669.5 L997.5,683.9 L982.5,683.9 Z" stroke="#2db36c" stroke-width="1.4" stroke-linejoin="round"/>
<path d="M983.0,686.5 L990.5,700.9 L975.5,700.9 Z" stroke="#2db36c" stroke-width="1.4" stroke-linejoin="round"/>
<path d="M1011.5,665.2 L1019.0,679.6 L1004.0,679.6 Z" stroke="#2db36c" stroke-width="1.4" stroke-linejoin="round"/>
<path d="M1010.8,685.2 L1018.3,699.6 L1003.3,699.6 Z" stroke="#2db36c" stroke-width="1.4" stroke-linejoin="round"/>
<path d="M834.0,690.7 L841.5,705.1 L826.5,705.1 Z" stroke="#2db36c" stroke-width="1.4" stroke-linejoin="round"/>
<path d="M895.5,699.0 L903.0,713.4 L888.0,713.4 Z" stroke="#2db36c" stroke-width="1.4" stroke-linejoin="round"/>
<path d="M1034.0,702.2 L1041.5,716.6 L1026.5,716.6 Z" stroke="#2db36c" stroke-width="1.4" stroke-linejoin="round"/>
<path d="M1045.0,659.0 L1052.5,673.4 L1037.5,673.4 Z" stroke="#2db36c" stroke-width="1.4" stroke-linejoin="round"/>
<path d="M1045.0,679.0 L1052.5,693.4 L1037.5,693.4 Z" stroke="#2db36c" stroke-width="1.4" stroke-linejoin="round"/>
<path d="M1057.5,680.2 L1065.0,694.6 L1050.0,694.6 Z" stroke="#2db36c" stroke-width="1.4" stroke-linejoin="round"/>
<circle cx="1162.8" cy="658.7" r="60" stroke="#e24a4a" stroke-width="3"/>
<circle cx="1162" cy="659.6" r="102.8" stroke="#3f7fe4" stroke-width="3"/>
<circle cx="1161" cy="660.5" r="12" fill="#ee1212" stroke="#d41a1a" stroke-width="2"/>
<circle cx="1122.9" cy="594.3" r="19.8" stroke="#f7c714" stroke-width="2.3"/>
<circle cx="1122.9" cy="594.3" r="29.8" stroke="#f7c714" stroke-width="2.3"/>
<circle cx="1132.4" cy="597.5" r="20.2" stroke="#f7c714" stroke-width="2.3"/>
<circle cx="1146.3" cy="603.9" r="21.3" stroke="#f7c714" stroke-width="2.3"/>
<circle cx="1190.5" cy="605" r="21.3" stroke="#f7c714" stroke-width="2.3"/>
<circle cx="1190.5" cy="605" r="29.8" stroke="#f7c714" stroke-width="2.3"/>
<circle cx="1160.1" cy="698.6" r="20.2" stroke="#f7c714" stroke-width="2.3"/>
<circle cx="1160.1" cy="698.6" r="29.8" stroke="#f7c714" stroke-width="2.3"/>
<circle cx="1080.3" cy="709" r="21.3" stroke="#f7c714" stroke-width="2.3"/>
<circle cx="1080.3" cy="709" r="30.9" stroke="#f7c714" stroke-width="2.3"/>
<circle cx="1060.5" cy="664.6" r="19.2" stroke="#f7c714" stroke-width="2.3"/>
<circle cx="1060.5" cy="664.6" r="22.4" stroke="#f7c714" stroke-width="2.3"/>
<circle cx="1060.5" cy="664.6" r="30.9" stroke="#f7c714" stroke-width="2.3"/>
<circle cx="1150" cy="630" r="20" stroke="#f7c714" stroke-width="2.3"/>
<circle cx="1150" cy="630" r="30" stroke="#f7c714" stroke-width="2.3"/>
<circle cx="1158" cy="641" r="21" stroke="#f7c714" stroke-width="2.3"/>
<circle cx="1158" cy="641" r="29" stroke="#f7c714" stroke-width="2.3"/>
<circle cx="1166" cy="633" r="19" stroke="#f7c714" stroke-width="2.3"/>
<circle cx="1166" cy="633" r="30" stroke="#f7c714" stroke-width="2.3"/>
<circle cx="1173" cy="647" r="20" stroke="#f7c714" stroke-width="2.3"/>
<circle cx="1173" cy="647" r="31" stroke="#f7c714" stroke-width="2.3"/>
<circle cx="1181" cy="636" r="22" stroke="#f7c714" stroke-width="2.3"/>
<circle cx="1181" cy="636" r="30" stroke="#f7c714" stroke-width="2.3"/>
<circle cx="1186" cy="651" r="20" stroke="#f7c714" stroke-width="2.3"/>
<circle cx="1160" cy="653" r="20" stroke="#f7c714" stroke-width="2.3"/>
<circle cx="1160" cy="653" r="28" stroke="#f7c714" stroke-width="2.3"/>
<circle cx="1145" cy="647" r="21" stroke="#f7c714" stroke-width="2.3"/>
<circle cx="1145" cy="647" r="30" stroke="#f7c714" stroke-width="2.3"/>
<circle cx="1082" cy="672" r="20" stroke="#f7c714" stroke-width="2.3"/>
<circle cx="1082" cy="672" r="30" stroke="#f7c714" stroke-width="2.3"/>
<circle cx="1093" cy="685" r="21" stroke="#f7c714" stroke-width="2.3"/>
<circle cx="1093" cy="685" r="29" stroke="#f7c714" stroke-width="2.3"/>
<circle cx="1100" cy="668" r="19" stroke="#f7c714" stroke-width="2.3"/>
<circle cx="1100" cy="668" r="30" stroke="#f7c714" stroke-width="2.3"/>
<circle cx="1108" cy="690" r="20" stroke="#f7c714" stroke-width="2.3"/>
<circle cx="1108" cy="690" r="31" stroke="#f7c714" stroke-width="2.3"/>
<circle cx="1117" cy="676" r="20" stroke="#f7c714" stroke-width="2.3"/>
<circle cx="1117" cy="676" r="30" stroke="#f7c714" stroke-width="2.3"/>
<circle cx="1126" cy="693" r="21" stroke="#f7c714" stroke-width="2.3"/>
<circle cx="1131" cy="668" r="20" stroke="#f7c714" stroke-width="2.3"/>
<circle cx="1131" cy="668" r="30" stroke="#f7c714" stroke-width="2.3"/>
<circle cx="1141" cy="685" r="20" stroke="#f7c714" stroke-width="2.3"/>
<circle cx="1141" cy="685" r="29" stroke="#f7c714" stroke-width="2.3"/>
<circle cx="1097" cy="701" r="20" stroke="#f7c714" stroke-width="2.3"/>
<circle cx="1113" cy="705" r="20" stroke="#f7c714" stroke-width="2.3"/>
<circle cx="1113" cy="705" r="30" stroke="#f7c714" stroke-width="2.3"/>
<circle cx="1099" cy="648" r="20" stroke="#f7c714" stroke-width="2.3"/>
<circle cx="1099" cy="648" r="30" stroke="#f7c714" stroke-width="2.3"/>
<circle cx="1113" cy="640" r="20" stroke="#f7c714" stroke-width="2.3"/>
<circle cx="1129" cy="637" r="20" stroke="#f7c714" stroke-width="2.3"/>
<circle cx="1129" cy="637" r="30" stroke="#f7c714" stroke-width="2.3"/>
<path d="M1122.9,587.5 L1129.9,600.9 L1115.9,600.9 Z" stroke="#f2c218" stroke-width="1.5" stroke-linejoin="round"/>
<path d="M1132.4,590.7 L1139.4,604.1 L1125.4,604.1 Z" stroke="#f2c218" stroke-width="1.5" stroke-linejoin="round"/>
<path d="M1146.3,597.1 L1153.3,610.5 L1139.3,610.5 Z" stroke="#f2c218" stroke-width="1.5" stroke-linejoin="round"/>
<path d="M1190.5,598.2 L1197.5,611.6 L1183.5,611.6 Z" stroke="#f2c218" stroke-width="1.5" stroke-linejoin="round"/>
<path d="M1160.1,691.8 L1167.1,705.2 L1153.1,705.2 Z" stroke="#f2c218" stroke-width="1.5" stroke-linejoin="round"/>
<path d="M1080.3,702.2 L1087.3,715.6 L1073.3,715.6 Z" stroke="#f2c218" stroke-width="1.5" stroke-linejoin="round"/>
<path d="M1060.5,657.8 L1067.5,671.2 L1053.5,671.2 Z" stroke="#f2c218" stroke-width="1.5" stroke-linejoin="round"/>
<path d="M1150.0,623.2 L1157.0,636.6 L1143.0,636.6 Z" stroke="#f2c218" stroke-width="1.5" stroke-linejoin="round"/>
<path d="M1158.0,634.2 L1165.0,647.6 L1151.0,647.6 Z" stroke="#f2c218" stroke-width="1.5" stroke-linejoin="round"/>
<path d="M1166.0,626.2 L1173.0,639.6 L1159.0,639.6 Z" stroke="#f2c218" stroke-width="1.5" stroke-linejoin="round"/>
<path d="M1173.0,640.2 L1180.0,653.6 L1166.0,653.6 Z" stroke="#f2c218" stroke-width="1.5" stroke-linejoin="round"/>
<path d="M1181.0,629.2 L1188.0,642.6 L1174.0,642.6 Z" stroke="#f2c218" stroke-width="1.5" stroke-linejoin="round"/>
<path d="M1186.0,644.2 L1193.0,657.6 L1179.0,657.6 Z" stroke="#f2c218" stroke-width="1.5" stroke-linejoin="round"/>
<path d="M1160.0,646.2 L1167.0,659.6 L1153.0,659.6 Z" stroke="#f2c218" stroke-width="1.5" stroke-linejoin="round"/>
<path d="M1145.0,640.2 L1152.0,653.6 L1138.0,653.6 Z" stroke="#f2c218" stroke-width="1.5" stroke-linejoin="round"/>
<path d="M1082.0,665.2 L1089.0,678.6 L1075.0,678.6 Z" stroke="#f2c218" stroke-width="1.5" stroke-linejoin="round"/>
<path d="M1093.0,678.2 L1100.0,691.6 L1086.0,691.6 Z" stroke="#f2c218" stroke-width="1.5" stroke-linejoin="round"/>
<path d="M1100.0,661.2 L1107.0,674.6 L1093.0,674.6 Z" stroke="#f2c218" stroke-width="1.5" stroke-linejoin="round"/>
<path d="M1108.0,683.2 L1115.0,696.6 L1101.0,696.6 Z" stroke="#f2c218" stroke-width="1.5" stroke-linejoin="round"/>
<path d="M1117.0,669.2 L1124.0,682.6 L1110.0,682.6 Z" stroke="#f2c218" stroke-width="1.5" stroke-linejoin="round"/>
<path d="M1126.0,686.2 L1133.0,699.6 L1119.0,699.6 Z" stroke="#f2c218" stroke-width="1.5" stroke-linejoin="round"/>
<path d="M1131.0,661.2 L1138.0,674.6 L1124.0,674.6 Z" stroke="#f2c218" stroke-width="1.5" stroke-linejoin="round"/>
<path d="M1141.0,678.2 L1148.0,691.6 L1134.0,691.6 Z" stroke="#f2c218" stroke-width="1.5" stroke-linejoin="round"/>
<path d="M1097.0,694.2 L1104.0,707.6 L1090.0,707.6 Z" stroke="#f2c218" stroke-width="1.5" stroke-linejoin="round"/>
<path d="M1113.0,698.2 L1120.0,711.6 L1106.0,711.6 Z" stroke="#f2c218" stroke-width="1.5" stroke-linejoin="round"/>
<path d="M1099.0,641.2 L1106.0,654.6 L1092.0,654.6 Z" stroke="#f2c218" stroke-width="1.5" stroke-linejoin="round"/>
<path d="M1113.0,633.2 L1120.0,646.6 L1106.0,646.6 Z" stroke="#f2c218" stroke-width="1.5" stroke-linejoin="round"/>
<path d="M1129.0,630.2 L1136.0,643.6 L1122.0,643.6 Z" stroke="#f2c218" stroke-width="1.5" stroke-linejoin="round"/>
</svg>
<div class="abs" style="left:283.4px;top:91.2px;width:30.6px;height:61px;background:#1d2a48;border:1px solid #3a4866;border-radius:5px"></div>
<div class="abs" style="left:284.4px;top:121.2px;width:28.6px;height:1px;background:#3a4866"></div>
<div class="abs" style="left:292.3px;top:105.5px;width:14px;height:2.4px;background:#fff"></div><div class="abs" style="left:298.1px;top:99.7px;width:2.4px;height:14px;background:#fff"></div>
<div class="abs" style="left:292.6px;top:135.4px;width:14px;height:2.4px;background:#fff"></div>
<div class="ctl" style="left:283.4px;top:161.3px;width:31px;height:31px"></div>
<svg class="abs" style="left:290.9px;top:168.8px" width="16" height="16" viewBox="0 0 24 24" fill="none" stroke="#f1f5f9" stroke-width="2" stroke-linecap="round" stroke-linejoin="round" ><path d="M8 3H5a2 2 0 0 0-2 2v3"/><path d="M21 8V5a2 2 0 0 0-2-2h-3"/><path d="M3 16v3a2 2 0 0 0 2 2h3"/><path d="M16 21h3a2 2 0 0 0 2-2v-3"/></svg>
<div class="ctl" style="left:283.4px;top:201.2px;width:31px;height:31px"></div>
<svg class="abs" style="left:291.4px;top:209.2px" width="15" height="15" viewBox="0 0 24 24" fill="none" stroke="#f1f5f9" stroke-width="2" stroke-linecap="round" stroke-linejoin="round" ><polyline points="15 3 21 3 21 9"/><polyline points="9 21 3 21 3 15"/><line x1="21" x2="14" y1="3" y2="10"/><line x1="3" x2="10" y1="21" y2="14"/></svg>
<div class="ctl" style="left:282.4px;top:240.2px;width:31px;height:31px"></div>
<svg class="abs" style="left:290.4px;top:248.2px" width="15" height="15" viewBox="0 0 24 24" fill="none" stroke="#f1f5f9" stroke-width="2" stroke-linecap="round" stroke-linejoin="round" ><path d="M12.22 2h-.44a2 2 0 0 0-2 2v.18a2 2 0 0 1-1 1.73l-.43.25a2 2 0 0 1-2 0l-.15-.08a2 2 0 0 0-2.73.73l-.22.38a2 2 0 0 0 .73 2.73l.15.1a2 2 0 0 1 1 1.72v.51a2 2 0 0 1-1 1.74l-.15.09a2 2 0 0 0-.73 2.73l.22.38a2 2 0 0 0 2.73.73l.15-.08a2 2 0 0 1 2 0l.43.25a2 2 0 0 1 1 1.73V20a2 2 0 0 0 2 2h.44a2 2 0 0 0 2-2v-.18a2 2 0 0 1 1-1.73l.43-.25a2 2 0 0 1 2 0l.15.08a2 2 0 0 0 2.73-.73l.22-.39a2 2 0 0 0-.73-2.73l-.15-.08a2 2 0 0 1-1-1.74v-.5a2 2 0 0 1 1-1.74l.15-.09a2 2 0 0 0 .73-2.73l-.22-.38a2 2 0 0 0-2.73-.73l-.15.08a2 2 0 0 1-2 0l-.43-.25a2 2 0 0 1-1-1.73V4a2 2 0 0 0-2-2z"/><circle cx="12" cy="12" r="3"/></svg>
<div class="panel" style="left:1672px;top:92px;width:220px;height:122px"></div>
<svg class="abs" style="left:1685.5px;top:107.5px" width="15" height="15" viewBox="0 0 24 24" fill="none" stroke="#e2e8f0" stroke-width="2" stroke-linecap="round" stroke-linejoin="round" ><polygon points="6 3 20 12 6 21 6 3"/></svg>
<div class="t" style="left:1709.0px;top:108.0px;font-size:14px;font-weight:400;color:#eef2f7;transform:scaleX(1.0558);transform-origin:0 50%;-webkit-text-stroke:.55px currentColor;">Event Located</div>
<div class="t" style="left:1685.0px;top:136.0px;font-size:14px;font-weight:400;color:#76829a;transform:scaleX(1.0477);transform-origin:0 50%;">Magnitude</div>
<div class="t" style="left:1845.0px;top:136.0px;font-size:14px;font-weight:700;color:#ef2424;transform:scaleX(1.1085);transform-origin:0 50%;">M5.0</div>
<div class="t" style="left:1685.0px;top:160.5px;font-size:14px;font-weight:400;color:#76829a;transform:scaleX(1.0439);transform-origin:0 50%;">Depth</div>
<div class="t" style="left:1831.5px;top:160.0px;font-size:14px;font-weight:400;color:#f1f5f9;transform:scaleX(0.9639);transform-origin:0 50%;text-shadow:0 0 .5px #f1f5f9;">10.3 km</div>
<div class="t" style="left:1685.0px;top:184.5px;font-size:14px;font-weight:400;color:#76829a;transform:scaleX(1.0580);transform-origin:0 50%;">Location</div>
<div class="t" style="left:1775.5px;top:183.0px;font-size:12px;font-weight:400;color:#f1f5f9;transform:scaleX(0.9484);transform-origin:0 50%;text-shadow:0 0 .4px #f1f5f9;">18.446°N, 72.301°W</div>
<div class="panel" style="left:1672px;top:222px;width:220px;height:165px"></div>
<svg class="abs" style="left:1685px;top:237px" width="16" height="16" viewBox="0 0 24 24" fill="none" stroke="#e2e8f0" stroke-width="2" stroke-linecap="round" stroke-linejoin="round" ><path d="M6 22V4a2 2 0 0 1 2-2h8a2 2 0 0 1 2 2v18Z"/><path d="M6 12H4a2 2 0 0 0-2 2v6a2 2 0 0 0 2 2h2"/><path d="M18 9h2a2 2 0 0 1 2 2v9a2 2 0 0 1-2 2h-2"/><path d="M10 6h4"/><path d="M10 10h4"/><path d="M10 14h4"/><path d="M10 18h4"/></svg>
<div class="t" style="left:1709.5px;top:238.0px;font-size:14px;font-weight:400;color:#eef2f7;transform:scaleX(1.0943);transform-origin:0 50%;-webkit-text-stroke:.55px currentColor;">Affected Cities</div>
<div class="abs" style="left:1685px;top:267px;width:10px;height:10px;border-radius:50%;background:#fb8526"></div>
<div class="t" style="left:1703.0px;top:266.0px;font-size:12px;font-weight:400;color:#f1f5f9;transform:scaleX(1.0499);transform-origin:0 50%;text-shadow:0 0 .5px #f1f5f9;">Pétion-Ville</div>
<div class="t" style="left:1812.8px;top:266.0px;font-size:12px;font-weight:400;color:#69758a;transform:scaleX(1.0322);transform-origin:0 50%;">8km</div>
<div class="abs" style="left:1842.3px;top:264px;width:36.5px;height:16px;border-radius:3px;background:rgba(249,115,22,.15)"></div>
<div class="t" style="left:1846.6px;top:267.0px;font-size:10px;font-weight:400;color:#f58a33;transform:scaleX(0.9949);transform-origin:0 50%;text-shadow:0 0 .4px #f58a33;">Heavy</div>
<div class="abs" style="left:1685px;top:290px;width:10px;height:10px;border-radius:50%;background:#fb8526"></div>
<div class="t" style="left:1703.0px;top:289.0px;font-size:12px;font-weight:400;color:#f1f5f9;transform:scaleX(1.0858);transform-origin:0 50%;text-shadow:0 0 .5px #f1f5f9;">Port-au-Prince</div>
<div class="t" style="left:1808.4px;top:289.0px;font-size:12px;font-weight:400;color:#69758a;transform:scaleX(0.9474);transform-origin:0 50%;">10km</div>
<div class="abs" style="left:1842.3px;top:287px;width:36.5px;height:16px;border-radius:3px;background:rgba(249,115,22,.15)"></div>
<div class="t" style="left:1846.6px;top:290.0px;font-size:10px;font-weight:400;color:#f58a33;transform:scaleX(0.9949);transform-origin:0 50%;text-shadow:0 0 .4px #f58a33;">Heavy</div>
<div class="abs" style="left:1685px;top:313.3px;width:10px;height:10px;border-radius:50%;background:#fb8526"></div>
<div class="t" style="left:1703.0px;top:312.3px;font-size:12px;font-weight:400;color:#f1f5f9;text-shadow:0 0 .5px #f1f5f9;">Delmas</div>
<div class="t" style="left:1809.5px;top:312.3px;font-size:12px;font-weight:400;color:#69758a;transform:scaleX(0.9099);transform-origin:0 50%;">12km</div>
<div class="abs" style="left:1842.3px;top:310.3px;width:36.5px;height:16px;border-radius:3px;background:rgba(249,115,22,.15)"></div>
<div class="t" style="left:1846.6px;top:313.3px;font-size:10px;font-weight:400;color:#f58a33;transform:scaleX(0.9949);transform-origin:0 50%;text-shadow:0 0 .4px #f58a33;">Heavy</div>
<div class="abs" style="left:1685px;top:336.8px;width:10px;height:10px;border-radius:50%;background:#fb8526"></div>
<div class="t" style="left:1703.0px;top:335.8px;font-size:12px;font-weight:400;color:#f1f5f9;transform:scaleX(1.0398);transform-origin:0 50%;text-shadow:0 0 .5px #f1f5f9;">Carrefour</div>
<div class="t" style="left:1809.5px;top:335.8px;font-size:12px;font-weight:400;color:#69758a;transform:scaleX(0.9099);transform-origin:0 50%;">14km</div>
<div class="abs" style="left:1842.3px;top:333.8px;width:36.5px;height:16px;border-radius:3px;background:rgba(249,115,22,.15)"></div>
<div class="t" style="left:1846.6px;top:336.8px;font-size:10px;font-weight:400;color:#f58a33;transform:scaleX(0.9949);transform-origin:0 50%;text-shadow:0 0 .4px #f58a33;">Heavy</div>
<div class="abs" style="left:1685px;top:359.8px;width:10px;height:10px;border-radius:50%;background:#22c55e"></div>
<div class="t" style="left:1703.0px;top:358.8px;font-size:12px;font-weight:400;color:#f1f5f9;transform:scaleX(1.0392);transform-origin:0 50%;text-shadow:0 0 .5px #f1f5f9;">Jacmel</div>
<div class="t" style="left:1811.6px;top:358.8px;font-size:12px;font-weight:400;color:#69758a;transform:scaleX(1.0360);transform-origin:0 50%;">34km</div>
<div class="abs" style="left:1848px;top:356.8px;width:30.8px;height:16px;border-radius:3px;background:rgba(34,197,94,.15)"></div>
<div class="t" style="left:1852.0px;top:359.8px;font-size:10px;font-weight:400;color:#2fd066;transform:scaleX(1.0514);transform-origin:0 50%;text-shadow:0 0 .4px #2fd066;">Light</div>
<div class="panel" style="left:283px;top:864px;width:275px;height:189px;background:rgba(27,34,48,.95)"></div>
<div class="t" style="left:294.0px;top:878.0px;font-size:14px;font-weight:400;color:#e5e9ef;">Legend</div>
<div class="abs" style="left:294px;top:911.5px;width:20px;height:3px;background:#4b83f0;border-radius:1px"></div>
<div class="t" style="left:322.0px;top:907.0px;font-size:12px;font-weight:400;color:#e5e9ef;text-shadow:0 0 .5px #e5e9ef;">P-wave</div>
<div class="abs" style="left:294px;top:935.5px;width:20px;height:3px;background:#ef4a4a;border-radius:1px"></div>
<div class="t" style="left:322.0px;top:931.0px;font-size:12px;font-weight:400;color:#e5e9ef;text-shadow:0 0 .5px #e5e9ef;">S-wave</div>
<svg class="abs" style="left:293px;top:953px" width="16" height="16" viewBox="0 0 16 16"><path d="M8 2.6 L13.6 13.4 L2.4 13.4 Z" fill="none" stroke="#2fa36b" stroke-width="1.2"/></svg>
<div class="t" style="left:316.0px;top:955.0px;font-size:12px;font-weight:400;color:#e5e9ef;text-shadow:0 0 .5px #e5e9ef;">Station</div>
<svg class="abs" style="left:293px;top:977px" width="16" height="16" viewBox="0 0 16 16"><path d="M8 2.6 L13.6 13.4 L2.4 13.4 Z" fill="none" stroke="#f2c31b" stroke-width="1.4"/></svg>
<div class="t" style="left:316.0px;top:979.0px;font-size:12px;font-weight:400;color:#e5e9ef;text-shadow:0 0 .5px #e5e9ef;">Detected</div>
<div class="abs" style="left:294px;top:1004px;width:10px;height:10px;border-radius:50%;border:2px solid #7b8390"></div>
<div class="t" style="left:312.0px;top:1003.0px;font-size:12px;font-weight:400;color:#e5e9ef;text-shadow:0 0 .5px #e5e9ef;">City</div>
<div class="abs" style="left:294px;top:1032px;width:20px;height:2px;background:#c64a74;border-radius:1px"></div>
<div class="t" style="left:322.0px;top:1027.0px;font-size:12px;font-weight:400;color:#e5e9ef;text-shadow:0 0 .5px #e5e9ef;">Fault line</div>
<div class="abs" style="left:426px;top:904px;width:1px;height:138px;background:#3a4455"></div>
<div class="t" style="left:439.5px;top:907.0px;font-size:12px;font-weight:400;color:#e5e9ef;text-shadow:0 0 .5px #e5e9ef;">Damage Zones</div>
<svg class="abs" style="left:438px;top:931px" width="12" height="12" viewBox="0 0 12 12"><circle cx="6" cy="6" r="4.2" fill="none" stroke="#e0392f" stroke-width="2" stroke-dasharray="5.8 3"/></svg>
<div class="t" style="left:455.3px;top:931.0px;font-size:12px;font-weight:400;color:#e5e9ef;text-shadow:0 0 .5px #e5e9ef;">Severe (10km)</div>
<svg class="abs" style="left:438px;top:953px" width="12" height="12" viewBox="0 0 12 12"><circle cx="6" cy="6" r="4.2" fill="none" stroke="#f47c25" stroke-width="2" stroke-dasharray="5.8 3"/></svg>
<div class="t" style="left:455.3px;top:953.0px;font-size:12px;font-weight:400;color:#e5e9ef;text-shadow:0 0 .5px #e5e9ef;">Heavy (30km)</div>
<svg class="abs" style="left:438px;top:975px" width="12" height="12" viewBox="0 0 12 12"><circle cx="6" cy="6" r="4.2" fill="none" stroke="#e9b11d" stroke-width="2" stroke-dasharray="5.8 3"/></svg>
<div class="t" style="left:455.3px;top:975.0px;font-size:12px;font-weight:400;color:#e5e9ef;text-shadow:0 0 .5px #e5e9ef;">Moderate (60km)</div>
<svg class="abs" style="left:438px;top:997px" width="12" height="12" viewBox="0 0 12 12"><circle cx="6" cy="6" r="4.2" fill="none" stroke="#27b35a" stroke-width="2" stroke-dasharray="5.8 3"/></svg>
<div class="t" style="left:455.3px;top:997.0px;font-size:12px;font-weight:400;color:#e5e9ef;text-shadow:0 0 .5px #e5e9ef;">Light (100km)</div>
<svg class="abs" style="left:438px;top:1019px" width="12" height="12" viewBox="0 0 12 12"><circle cx="6" cy="6" r="4.2" fill="none" stroke="#1fb0d6" stroke-width="2" stroke-dasharray="5.8 3"/></svg>
<div class="t" style="left:455.3px;top:1019.0px;font-size:12px;font-weight:400;color:#e5e9ef;text-shadow:0 0 .5px #e5e9ef;">Minor (150km)</div>
<div class="panel" style="left:1672px;top:950px;width:220px;height:102px"></div>
<div class="t" style="left:1685.0px;top:965.3px;font-size:12px;font-weight:400;color:#eef2f7;transform:scaleX(1.0103);transform-origin:0 50%;text-shadow:0 0 .5px #eef2f7;">Event Log</div>
<div class="t" style="left:1685.0px;top:990.2px;font-size:12px;font-weight:700;color:#ffffff;font-family:'Liberation Mono',monospace;transform:scaleX(0.9944);transform-origin:0 50%;">Pick #20: 15AEC (15AEC)</div>
<div class="t" style="left:1685.0px;top:1008.4px;font-size:12px;font-weight:400;color:#6a7486;font-family:'Liberation Mono',monospace;transform:scaleX(0.9944);transform-origin:0 50%;">Pick #19: 15A3C (15A3C)</div>
<div class="t" style="left:1685.0px;top:1026.4px;font-size:12px;font-weight:400;color:#6a7486;font-family:'Liberation Mono',monospace;transform:scaleX(0.9944);transform-origin:0 50%;">Pick #18: 15A5C (15A5C)</div>
<div class="abs" style="left:996px;top:1004px;width:184px;height:36px;border-radius:6px;background:#3bd69f"></div>
<svg class="abs" style="left:1009px;top:1015px" width="14" height="14" viewBox="0 0 24 24" fill="none" stroke="#0d4535" stroke-width="2" stroke-linecap="round" stroke-linejoin="round" ><path d="M4 14a1 1 0 0 1-.78-1.63l9.9-10.2a.5.5 0 0 1 .86.46l-1.92 6.02A1 1 0 0 0 13 10h7a1 1 0 0 1 .78 1.63l-9.9 10.2a.5.5 0 0 1-.86-.46l1.92-6.02A1 1 0 0 0 11 14z"/></svg>
<div class="t" style="left:1032.6px;top:1015.3px;font-size:14px;font-weight:400;color:#0d4535;transform:scaleX(1.0372);transform-origin:0 50%;text-shadow:0 0 .4px #0d4535;">Simulate Earthquake</div>
</div></div>
</body></html>
